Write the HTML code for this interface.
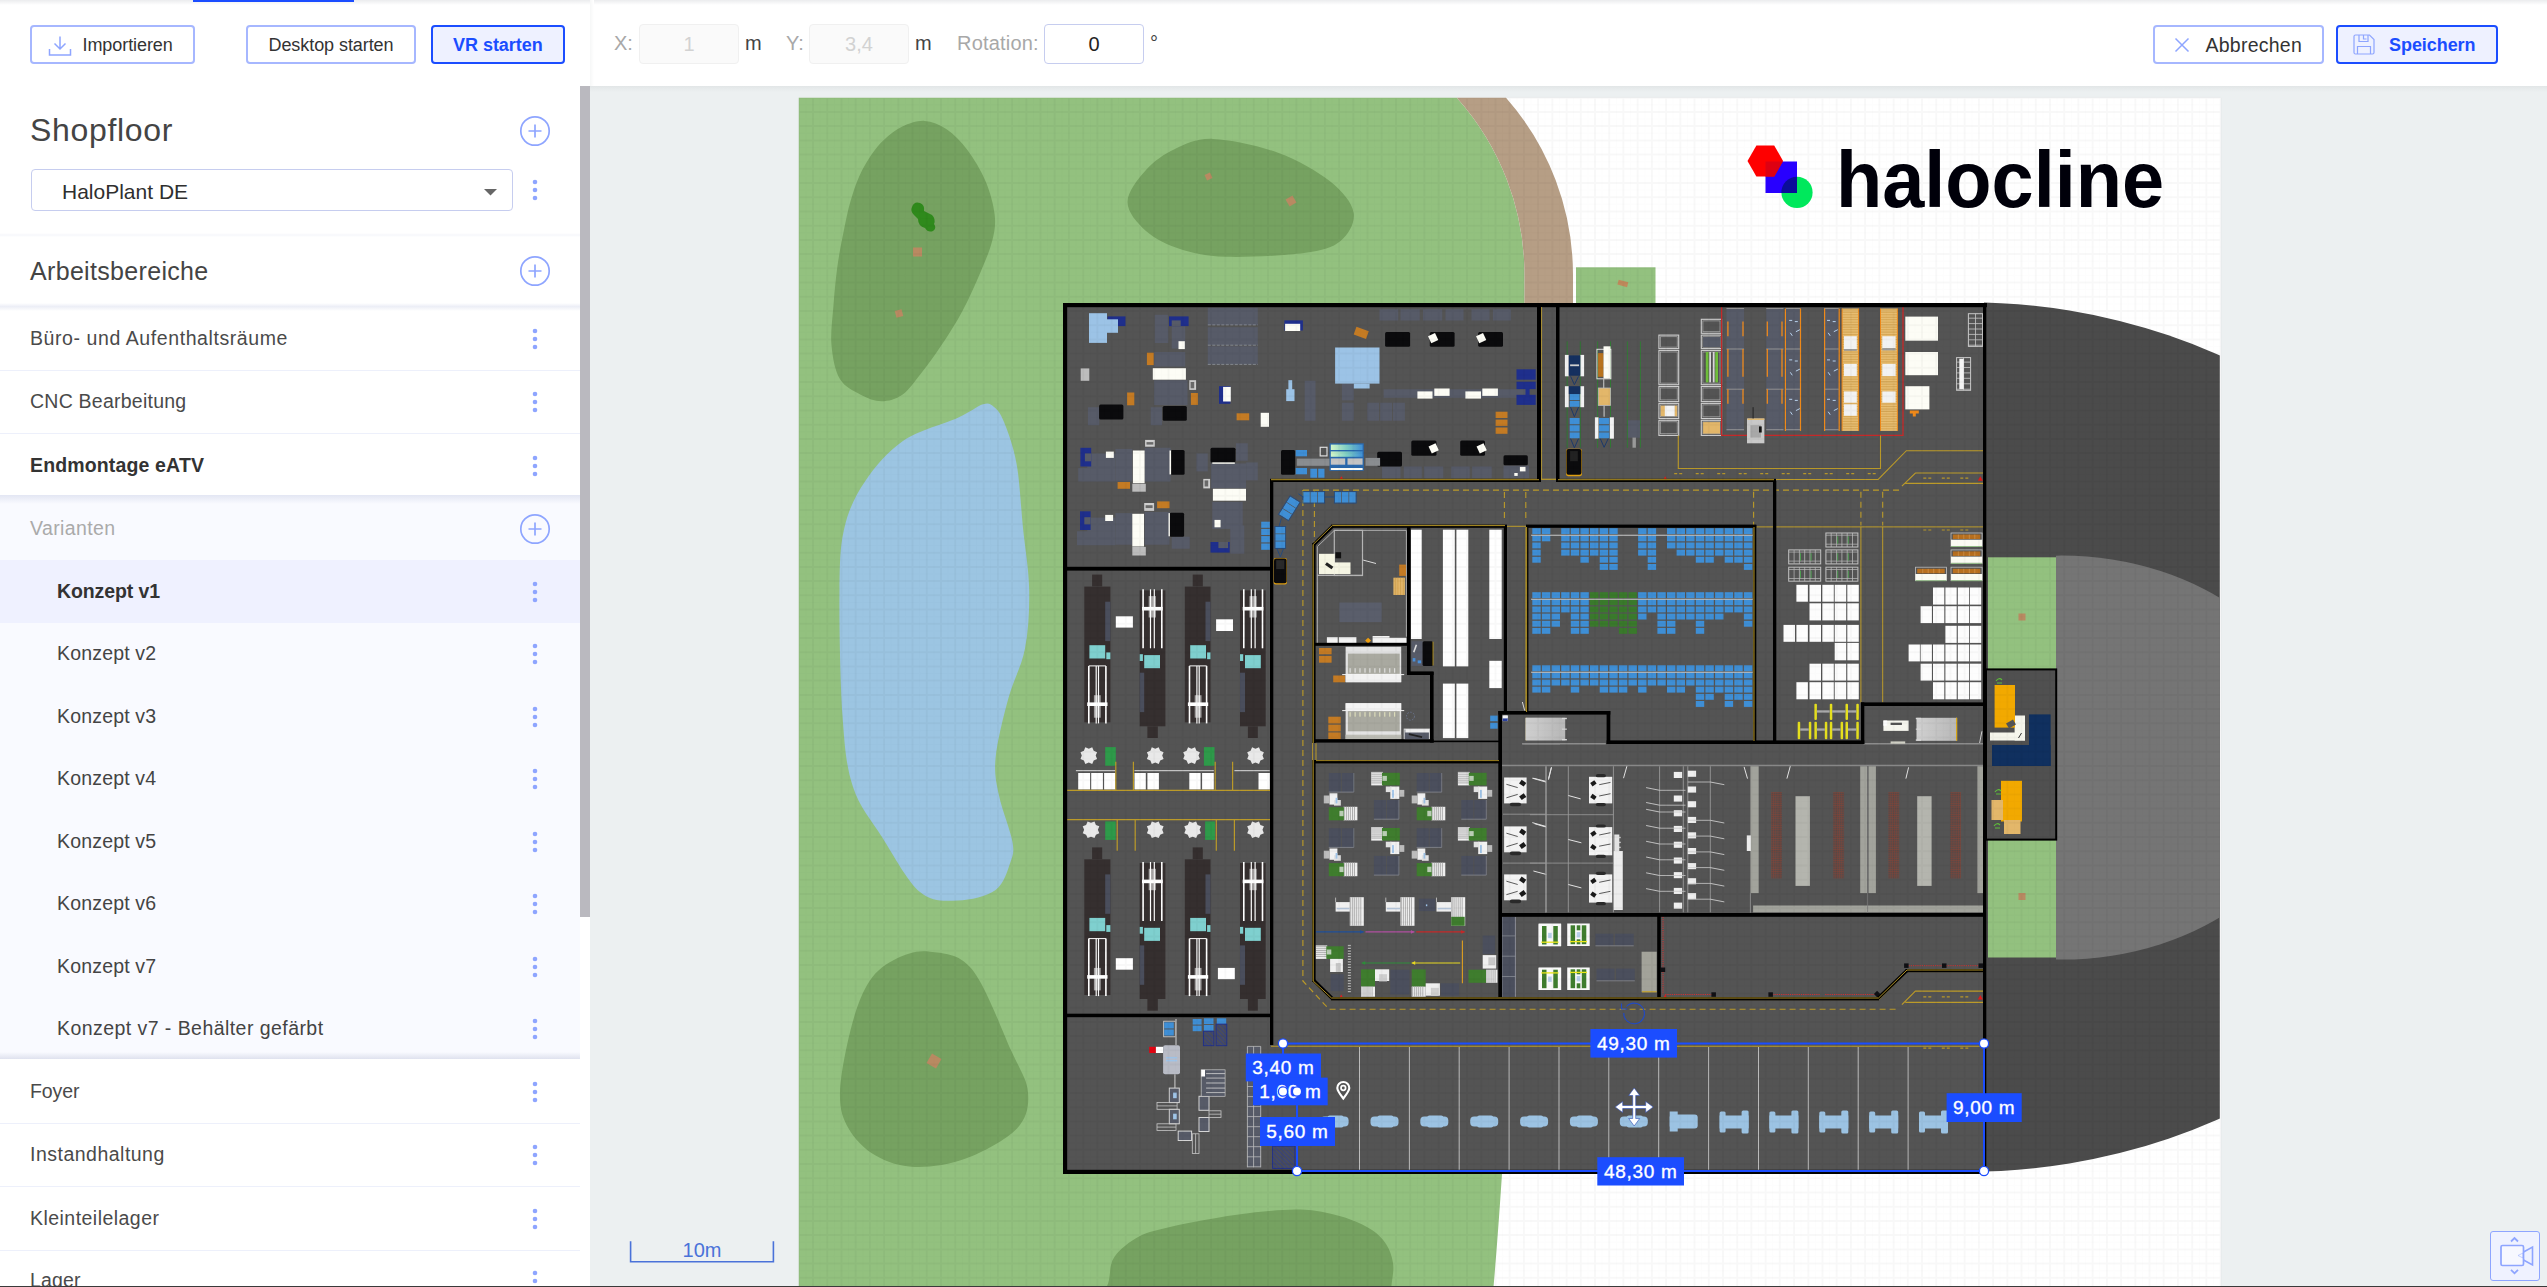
<!DOCTYPE html>
<html lang="de"><head><meta charset="utf-8"><title>Halocline Layout</title>
<style>
html,body{margin:0;padding:0;width:2547px;height:1287px;overflow:hidden;background:#ecf0f1;font-family:"Liberation Sans",sans-serif}
.abs{position:absolute}
.t{white-space:nowrap}
.li{font-size:19.500px;line-height:28px}
.btn{box-sizing:border-box;border-radius:4px}
.inp{box-sizing:border-box;width:100px;height:40px;border-radius:4px;text-align:center;font-size:20px;line-height:38px}
</style></head><body>
<svg class="abs" style="left:590px;top:86px" width="1957" height="1201" viewBox="590 86 1957 1201">
<linearGradient id="tsh" x1="0" y1="0" x2="0" y2="1"><stop offset="0" stop-color="#e2e6e7"/><stop offset="1" stop-color="#ecf0f1"/></linearGradient><rect x="590" y="86" width="1957" height="6" fill="url(#tsh)"/>
<rect x="798.8" y="97.7" width="1422" height="1189.3" fill="#fff"/>
<path d="M798.8 97.7H1456.8A266 266 0 0 1 1524.5 275V1174H1502Q1498 1235 1493.5 1287H798.8Z" fill="#93c17f"/>
<path d="M1456.8 97.7H1506A268 268 0 0 1 1573 275V304H1524.5V275A266 266 0 0 0 1456.8 97.7Z" fill="#b69e85"/>
<rect x="1576" y="267.3" width="79.5" height="36.7" fill="#93c17f"/>
<path d="M924.5 120.9C931.9 121.3 939.5 124.3 946.6 129.2C953.8 134 960.9 141.3 967.4 150C973.9 158.7 981 170.5 985.6 181.3C990.2 192.2 993.6 205.1 994.7 215.1C995.8 225.1 994.5 231.6 992.1 241.2C989.7 250.8 985.4 260.7 980.4 272.4C975.4 284.1 968.7 299.2 962.2 311.4C955.7 323.5 948.3 334.9 941.4 345.3C934.5 355.7 927.1 365.7 920.6 373.9C914.1 382.1 908.8 390.1 902.3 394.7C895.8 399.2 888.4 401.2 881.5 401.2C874.6 401.2 867.6 398.4 860.7 394.7C853.8 391 844.8 387.3 839.9 379.1C835 370.9 832.6 357.5 831.5 345.3C830.4 333.1 832.4 319.2 833.4 306.2C834.4 293.2 835.6 279.8 837.3 267.2C839 254.6 841.6 241.7 843.8 230.8C846 220 847.7 211.2 850.3 202.1C852.9 193 855.9 183.9 859.4 176.1C862.9 168.3 867 161.4 871.1 155.3C875.2 149.2 878.9 144.5 884.1 139.7C889.3 134.9 895.6 129.7 902.3 126.6C909 123.5 917.1 120.5 924.5 120.9Z" fill="#76a261"/>
<path d="M1213 138.9C1230.2 139.5 1258.5 145.6 1278 152.7C1297.5 159.8 1317.4 171.3 1330 181.3C1342.6 191.3 1351.8 202.6 1353.6 212.5C1355.3 222.4 1348.8 234.2 1340.5 241C1332.2 247.8 1323.1 250.4 1304 253C1284.9 255.6 1246.7 257.5 1226 256.8C1205.3 256.1 1193.3 253.3 1180 249C1166.7 244.7 1154.8 238.8 1146 231C1137.2 223.2 1127.5 212.2 1127.5 202C1127.5 191.8 1138.1 178.8 1146 170C1153.9 161.2 1163.8 154.2 1175 149C1186.2 143.8 1195.8 138.3 1213 138.9Z" fill="#76a261"/>
<path d="M929.8 951.7C942.3 953.4 958.3 952.6 971.8 969C985.3 985.4 1001.6 1029.7 1011 1050.3C1020.4 1070.9 1027 1079.4 1028 1092.4C1029 1105.4 1027.4 1117.5 1017 1128.5C1006.6 1139.5 982.8 1152.2 965.8 1158.6C948.8 1165 929.7 1167.5 914.7 1167C899.7 1166.5 886.6 1162 875.6 1155.6C864.6 1149.2 854.5 1139.1 848.6 1128.5C842.7 1117.9 839.5 1109.1 840 1092C840.5 1074.9 846.7 1044.5 851.6 1026C856.5 1007.5 862.1 992.2 869.6 981C877.1 969.8 886.7 963.5 896.7 958.6C906.7 953.7 917.3 950 929.8 951.7Z" fill="#76a261"/>
<path d="M1150 1420C1110.7 1403.3 1110.8 1343.3 1104 1320C1097.2 1296.7 1107.2 1290.6 1109 1280C1110.8 1269.4 1109.7 1263.8 1114.7 1256.5C1119.7 1249.2 1129.8 1241.3 1139 1236.4C1148.2 1231.5 1158.8 1229.8 1170 1227C1181.2 1224.2 1192.7 1222 1206 1219.7C1219.3 1217.4 1235.1 1214.7 1250 1213C1264.9 1211.3 1282.8 1209.7 1295.3 1209.6C1307.8 1209.5 1315.7 1210.8 1325 1212.5C1334.3 1214.2 1343.2 1216.8 1351 1219.7C1358.8 1222.6 1366.2 1226 1372 1230C1377.8 1234 1382.5 1238.5 1386 1244C1389.5 1249.5 1392.1 1256.2 1393 1263C1393.9 1269.8 1393 1273.8 1391.5 1285C1390 1296.2 1392.6 1307.5 1384 1330C1375.4 1352.5 1379 1405 1340 1420C1301 1435 1189.3 1436.7 1150 1420Z" fill="#76a261"/>
<path d="M983 404.3C977 406.1 971.2 411.7 957.9 417.8C944.6 423.9 918.7 430.3 903.3 440.8C887.9 451.3 875.3 466.4 865.5 480.7C855.7 495 848.9 508.7 844.6 526.9C840.3 545.1 839.9 558.3 839.5 589.8C839.1 621.3 840.2 682.8 842.5 715.7C844.8 748.6 846.4 766.7 853 787C859.6 807.3 871.1 819.9 882.3 837.4C893.5 854.9 907.4 881.5 920 892C932.6 902.5 945.3 900.8 957.9 900.4C970.5 900 986.9 896.2 995.6 889.9C1004.3 883.6 1007.5 870.6 1010.3 862.6C1013.1 854.6 1014.3 852.8 1012.4 841.6C1010.5 830.4 1001.8 809.5 999 795.5C996.2 781.5 994.1 773.8 995.6 757.7C997.1 741.6 1003.3 717.1 1008.2 698.9C1013.1 680.7 1021.5 666.8 1025 648.6C1028.5 630.4 1029.5 610.1 1029.2 589.8C1028.9 569.5 1025 547.9 1022.9 526.9C1020.8 505.9 1019.8 481.4 1016.6 463.9C1013.5 446.4 1007.8 431.5 1004 422C1000.2 412.5 997.5 409.9 994 407C990.5 404.1 989 402.5 983 404.3Z" fill="#9cc5e2"/>
<rect x="913" y="247.5" width="9" height="9" fill="#b98a62" transform="rotate(0 917.5 252)"/>
<rect x="895.5" y="310" width="7" height="7" fill="#b98a62" transform="rotate(-15 899 313.5)"/>
<rect x="1287" y="197" width="8" height="8" fill="#b98a62" transform="rotate(-30 1291 201)"/>
<rect x="1205.5" y="173.5" width="6" height="6" fill="#b98a62" transform="rotate(-25 1208.5 176.5)"/>
<rect x="928.5" y="1055.5" width="11" height="11" fill="#b98a62" transform="rotate(30 934 1061)"/>
<path d="M912 207q2-6 8-4 5 2 4 8l8 4q4 4 2 9 3 4-1 7-5 2-8-3-7-2-7-9l-4-4q-4-4-2-8z" fill="#2f8a1c"/>
<clipPath id="cpP"><rect x="1984" y="97.7" width="235.8" height="1200"/></clipPath>
<g clip-path="url(#cpP)"><ellipse cx="1966.300" cy="737" rx="528.300" ry="434.800" fill="#4b4b4b"/>
<clipPath id="cpL"><rect x="2056" y="500" width="200" height="500"/></clipPath><ellipse cx="2061.600" cy="757.600" rx="258.700" ry="202" fill="#757575" clip-path="url(#cpL)"/></g>
<rect x="1988" y="557.3" width="68" height="111.7" fill="#93c17f"/>
<rect x="1988" y="840" width="68" height="117.5" fill="#93c17f"/>
<rect x="2018.5" y="613.5" width="7" height="7" fill="#b98a62"/>
<rect x="2018.5" y="893" width="7" height="7" fill="#b98a62"/>
<rect x="1618" y="281" width="10" height="5" fill="#c08a5c" transform="rotate(15 1623 283)"/>
<rect x="1063" y="303" width="923.3" height="871" fill="#545454"/>
<rect x="1985" y="668.4" width="72.2" height="172.2" fill="#000"/>
<rect x="1987" y="670.4" width="68.2" height="168.2" fill="#505050"/>
<rect x="1154.8" y="314.8" width="13.5" height="28.2" fill="#575b68"/>
<rect x="1171.7" y="326.1" width="13.5" height="22.5" fill="#575b68"/>
<rect x="1154.1" y="352" width="31.1" height="14.6" fill="#575b68"/>
<rect x="1154.1" y="380.2" width="33.4" height="24.8" fill="#575b68"/>
<rect x="1087.9" y="407.2" width="11.3" height="18" fill="#575b68"/>
<rect x="1150.7" y="407.2" width="11.3" height="18" fill="#575b68"/>
<rect x="1207.8" y="307.6" width="50" height="17.4" fill="#575b68"/>
<rect x="1207.8" y="327.2" width="50" height="18" fill="#575b68"/>
<rect x="1207.8" y="346.3" width="50" height="18" fill="#575b68"/>
<rect x="1304.7" y="380.8" width="10.8" height="39.9" fill="#575b68"/>
<rect x="1341.9" y="383.5" width="11.9" height="16.9" fill="#575b68"/>
<rect x="1383.6" y="389.2" width="144.2" height="8.6" fill="#575b68"/>
<rect x="1341.9" y="402.7" width="11.9" height="18" fill="#575b68"/>
<rect x="1367.3" y="402.7" width="11.7" height="18" fill="#575b68"/>
<rect x="1380.2" y="402.7" width="11.9" height="18" fill="#575b68"/>
<rect x="1393" y="402.7" width="11.9" height="18" fill="#575b68"/>
<rect x="1087.2" y="453.4" width="28.2" height="27" fill="#575b68"/>
<rect x="1078.2" y="468" width="37.2" height="13.5" fill="#575b68"/>
<rect x="1115.4" y="448.9" width="16.9" height="32.7" fill="#575b68"/>
<rect x="1144.7" y="447.8" width="25.9" height="33.8" fill="#575b68"/>
<rect x="1235.9" y="443.3" width="11.9" height="17.4" fill="#575b68"/>
<rect x="1196.5" y="453.4" width="11.3" height="18" fill="#575b68"/>
<rect x="1211.1" y="463.5" width="34.9" height="24.8" fill="#575b68"/>
<rect x="1246.1" y="462.4" width="11.7" height="18" fill="#575b68"/>
<rect x="1212.3" y="501.9" width="30.4" height="27" fill="#575b68"/>
<rect x="1230.3" y="525.5" width="14" height="28.2" fill="#575b68"/>
<rect x="1087.2" y="517.6" width="28.2" height="27" fill="#575b68"/>
<rect x="1077" y="531.2" width="38.3" height="14" fill="#575b68"/>
<rect x="1115.4" y="513.1" width="16.9" height="31.6" fill="#575b68"/>
<rect x="1144.7" y="512" width="24.8" height="32.7" fill="#575b68"/>
<rect x="1171.7" y="536.8" width="18" height="11.9" fill="#575b68"/>
<rect x="1503.5" y="465.8" width="25.5" height="12.4" fill="#575b68"/>
<rect x="1379.5" y="309.2" width="18.7" height="11.3" fill="#575b68"/>
<rect x="1400.5" y="309.2" width="19.2" height="11.3" fill="#575b68"/>
<rect x="1423" y="309.2" width="19.2" height="11.3" fill="#575b68"/>
<rect x="1445.5" y="309.2" width="18" height="11.3" fill="#575b68"/>
<rect x="1471.5" y="309.2" width="18" height="11.3" fill="#575b68"/>
<rect x="1492.9" y="309.2" width="18" height="11.3" fill="#575b68"/>
<rect x="1382" y="466.5" width="18.5" height="11.7" fill="#575b68"/>
<rect x="1403.8" y="466.5" width="18" height="11.7" fill="#575b68"/>
<rect x="1424.1" y="466.5" width="19.2" height="11.7" fill="#575b68"/>
<rect x="1451.2" y="466.5" width="18.5" height="11.7" fill="#575b68"/>
<rect x="1472.1" y="466.5" width="19.6" height="11.7" fill="#575b68"/>
<path d="M1207.8 324.9L1257.8 324.9" stroke="#9a9da6" stroke-width="0.7" fill="none" stroke-dasharray="3 1.5"/>
<path d="M1207.8 345.2L1257.8 345.2" stroke="#9a9da6" stroke-width="0.7" fill="none" stroke-dasharray="3 1.5"/>
<path d="M1207.8 364.4L1257.8 364.4" stroke="#9a9da6" stroke-width="0.7" fill="none" stroke-dasharray="3 1.5"/>
<rect x="1107.5" y="316.4" width="18" height="9.7" fill="#1f2f8c"/>
<rect x="1169" y="316.4" width="19.6" height="9.7" fill="#1f2f8c"/>
<rect x="1284.4" y="320.4" width="18.5" height="10.1" fill="#1f2f8c"/>
<rect x="1219" y="386.2" width="11.3" height="17.6" fill="#1f2f8c"/>
<rect x="1516.5" y="369.3" width="19.2" height="10.4" fill="#1f2f8c"/>
<rect x="1516.5" y="381.7" width="19.2" height="7.4" fill="#1f2f8c"/>
<rect x="1516.5" y="394.8" width="19.2" height="10.1" fill="#1f2f8c"/>
<rect x="1525.5" y="385.8" width="4.1" height="14.6" fill="#1f2f8c"/>
<rect x="1080.4" y="447.8" width="10.8" height="18.7" fill="#1f2f8c"/>
<rect x="1210.5" y="542" width="19.2" height="10.6" fill="#1f2f8c"/>
<rect x="1080" y="511.3" width="10.6" height="18.7" fill="#1f2f8c"/>
<rect x="1171.7" y="320.4" width="9" height="5.6" fill="#575b68"/>
<rect x="1084.9" y="453.4" width="6.3" height="7.9" fill="#575b68"/>
<rect x="1218.4" y="542" width="9.7" height="6.1" fill="#575b68"/>
<rect x="1084.3" y="517.2" width="6.3" height="7.2" fill="#575b68"/>
<rect x="1089" y="313.2" width="18" height="29.7" fill="#9cc3e6"/>
<rect x="1107" y="319.3" width="11" height="13.5" fill="#9cc3e6"/>
<rect x="1335.1" y="347.5" width="44.4" height="36.1" fill="#9cc3e6"/>
<rect x="1353.8" y="383.5" width="15.8" height="5" fill="#9cc3e6"/>
<rect x="1288.4" y="380.2" width="3.8" height="10.1" fill="#9cc3e6"/>
<rect x="1286.2" y="389.2" width="8.3" height="11.9" fill="#9cc3e6"/>
<rect x="1178.5" y="341.2" width="6.3" height="7.9" fill="#fdfdf6"/>
<rect x="1152.8" y="368.2" width="33.1" height="11.5" fill="#fdfdf6"/>
<rect x="1285.1" y="323.8" width="15.1" height="7.2" fill="#fdfdf6"/>
<rect x="1223.1" y="386.9" width="7.7" height="14.6" fill="#fdfdf6"/>
<rect x="1260.7" y="412.8" width="8.3" height="14" fill="#fdfdf6"/>
<rect x="1417.4" y="391.4" width="15.1" height="7.2" fill="#fdfdf6"/>
<rect x="1434.3" y="388.5" width="15.3" height="7.4" fill="#fdfdf6"/>
<rect x="1465.4" y="391.4" width="15.6" height="7.2" fill="#fdfdf6"/>
<rect x="1482.3" y="388.5" width="15.6" height="7.4" fill="#fdfdf6"/>
<rect x="1105.9" y="451.6" width="7.9" height="6.3" fill="#fdfdf6"/>
<rect x="1132.9" y="450.5" width="11.7" height="32.7" fill="#fdfdf6"/>
<rect x="1212.9" y="488.8" width="33.1" height="11.9" fill="#fdfdf6"/>
<rect x="1214.5" y="519.9" width="6.1" height="7.4" fill="#fdfdf6"/>
<rect x="1105.2" y="514.9" width="7.9" height="6.1" fill="#fdfdf6"/>
<rect x="1132.3" y="513.8" width="11.7" height="32.7" fill="#fdfdf6"/>
<rect x="1080.7" y="368.4" width="8.6" height="12.4" fill="#bdbdbd"/>
<rect x="1132.3" y="483.8" width="13.5" height="7.9" fill="#bdbdbd"/>
<rect x="1132.3" y="546.9" width="13.5" height="8.6" fill="#bdbdbd"/>
<rect x="1189.3" y="380.2" width="6.8" height="9.7" fill="#cfcfcf"/>
<rect x="1145.1" y="439.9" width="9.7" height="6.8" fill="#cfcfcf"/>
<rect x="1203.3" y="478.9" width="6.8" height="9.5" fill="#cfcfcf"/>
<rect x="1144.2" y="503" width="9.9" height="7.9" fill="#cfcfcf"/>
<rect x="1190.6" y="382" width="3.6" height="6.3" fill="#6a6a6a"/>
<rect x="1146.5" y="442.1" width="6.8" height="2.5" fill="#6a6a6a"/>
<rect x="1204.6" y="480.4" width="3.6" height="6.1" fill="#6a6a6a"/>
<rect x="1145.6" y="505.2" width="7" height="2.9" fill="#6a6a6a"/>
<rect x="1146.9" y="352.7" width="6.8" height="12.4" fill="#c47b24"/>
<rect x="1127.1" y="392.5" width="7.2" height="12.8" fill="#c47b24"/>
<rect x="1190.9" y="393" width="7" height="11.9" fill="#c47b24"/>
<rect x="1236.6" y="413.3" width="12.6" height="7" fill="#c47b24"/>
<rect x="1495.6" y="411.7" width="11.9" height="6.3" fill="#c47b24"/>
<rect x="1495.6" y="419.6" width="11.9" height="6.3" fill="#c47b24"/>
<rect x="1495.6" y="427.5" width="11.9" height="6.3" fill="#c47b24"/>
<rect x="1117.6" y="482" width="12.4" height="6.8" fill="#c47b24"/>
<rect x="1157.1" y="501.4" width="12.4" height="6.8" fill="#c47b24"/>
<rect x="1354.7" y="328.8" width="13.1" height="8.1" fill="#c47b24" transform="rotate(20 1361.2 332.8)"/>
<rect x="1099.1" y="404.5" width="24.3" height="15.1" fill="#0b0b0d" rx="1.5"/>
<rect x="1162.7" y="406.1" width="24.1" height="14.6" fill="#0b0b0d" rx="1.5"/>
<rect x="1385.1" y="332.1" width="25" height="14.6" fill="#0b0b0d" rx="1.5"/>
<rect x="1429.8" y="332.1" width="24.8" height="14.6" fill="#0b0b0d" rx="1.5"/>
<rect x="1478.2" y="332.1" width="24.8" height="14.6" fill="#0b0b0d" rx="1.5"/>
<rect x="1411.3" y="440.6" width="25.2" height="15.1" fill="#0b0b0d" rx="1.5"/>
<rect x="1460.2" y="440.6" width="24.8" height="15.1" fill="#0b0b0d" rx="1.5"/>
<rect x="1377.2" y="451.8" width="24.8" height="14.6" fill="#0b0b0d" rx="1.5"/>
<rect x="1503.5" y="455.2" width="24.3" height="10.1" fill="#0b0b0d" rx="1.5"/>
<rect x="1281" y="450" width="14.2" height="24.8" fill="#0b0b0d" rx="1.5"/>
<rect x="1170.6" y="450" width="14" height="24.8" fill="#0b0b0d" rx="1.5"/>
<rect x="1210.5" y="447.8" width="25" height="14.6" fill="#0b0b0d" rx="1.5"/>
<rect x="1169.5" y="512.7" width="14.6" height="24.1" fill="#0b0b0d" rx="1.5"/>
<rect x="1169.5" y="450.5" width="1.6" height="23.9" fill="#fdfdf6"/>
<rect x="1168.5" y="513.1" width="1.4" height="23.2" fill="#fdfdf6"/>
<rect x="1212.3" y="462.4" width="22.5" height="1.4" fill="#fdfdf6"/>
<rect x="1429.3" y="334.2" width="7.7" height="7.7" fill="#fdfdf6" transform="rotate(-25 1433.1 338)"/>
<rect x="1477.3" y="334.2" width="7.7" height="7.7" fill="#fdfdf6" transform="rotate(-25 1481.1 338)"/>
<rect x="1429.8" y="444.6" width="7.7" height="7.7" fill="#fdfdf6" transform="rotate(-25 1433.6 448.4)"/>
<rect x="1477.8" y="444.6" width="7.7" height="7.7" fill="#fdfdf6" transform="rotate(-25 1481.6 448.4)"/>
<rect x="1329.5" y="443.3" width="34.3" height="27.5" fill="#2a69ad"/>
<linearGradient id="tg" x1="0" x2="1" y1="0" y2="0"><stop offset="0" stop-color="#d4f7c8"/><stop offset=".5" stop-color="#7fcfc4"/><stop offset="1" stop-color="#3f8fd6"/></linearGradient>
<rect x="1330.8" y="444.6" width="31.8" height="5.4" fill="url(#tg)"/>
<rect x="1330.8" y="451.4" width="31.8" height="5.4" fill="url(#tg)"/>
<rect x="1330.8" y="458.4" width="14.4" height="6.3" fill="#c4c4c4"/>
<rect x="1347.5" y="458.4" width="15.1" height="6.3" fill="#c4c4c4"/>
<rect x="1330.8" y="468" width="31.8" height="2" fill="#fdfdf6"/>
<rect x="1296.8" y="458.6" width="32.7" height="7.2" fill="#8a8d90"/>
<rect x="1365.5" y="457.9" width="14.6" height="7.9" fill="#8a8d90"/>
<rect x="1320.2" y="447.3" width="6.8" height="8.6" fill="none" stroke="#ddd" stroke-width="1.2"/>
<rect x="1295.7" y="450" width="11.3" height="6.3" fill="#3f8fd6"/>
<rect x="1295.7" y="468" width="11.3" height="6.3" fill="#3f8fd6"/>
<rect x="1310.3" y="468.7" width="6.8" height="9" fill="#3f8fd6"/>
<rect x="1318.2" y="468.7" width="6.3" height="9" fill="#3f8fd6"/>
<rect x="1261.2" y="521.7" width="8.6" height="6.1" fill="#3f8fd6"/>
<rect x="1261.2" y="528.9" width="8.6" height="6.1" fill="#3f8fd6"/>
<rect x="1261.2" y="536.1" width="8.6" height="6.3" fill="#3f8fd6"/>
<rect x="1261.2" y="543.5" width="8.6" height="6.3" fill="#3f8fd6"/>
<rect x="1519.9" y="466.9" width="5.6" height="4.5" fill="#fdfdf6"/>
<rect x="1514.3" y="473" width="3.4" height="2.9" fill="#fdfdf6"/>
<path d="M1341.4 476.2l-2.5 4h5z" fill="#e31b1b"/>
<path d="M1567.2 341.4L1567.2 447.8" stroke="#2f7d32" stroke-width="0.9" fill="none"/>
<path d="M1580.3 341.4L1580.3 447.8" stroke="#2f7d32" stroke-width="0.9" fill="none"/>
<path d="M1597.6 341.4L1597.6 447.8" stroke="#2f7d32" stroke-width="0.9" fill="none"/>
<path d="M1610.5 341.4L1610.5 447.8" stroke="#2f7d32" stroke-width="0.9" fill="none"/>
<path d="M1627.4 341.4L1627.4 447.8" stroke="#2f7d32" stroke-width="0.9" fill="none"/>
<path d="M1640.4 341.4L1640.4 447.8" stroke="#2f7d32" stroke-width="0.9" fill="none"/>
<rect x="1564.9" y="354.9" width="3.8" height="21.4" fill="#f3f3f3"/>
<rect x="1580.3" y="354.9" width="3.8" height="21.4" fill="#f3f3f3"/>
<rect x="1564.9" y="386.2" width="3.8" height="21" fill="#f3f3f3"/>
<rect x="1580.3" y="386.2" width="3.8" height="21" fill="#f3f3f3"/>
<rect x="1568.8" y="355.4" width="11.5" height="20.3" fill="#15305f"/>
<rect x="1568.8" y="386.2" width="11.5" height="7.9" fill="#15305f"/>
<rect x="1570.1" y="364.4" width="9" height="1.8" fill="#cfcfcf"/>
<rect x="1569.7" y="394.1" width="9.9" height="5.9" fill="#3f8fd6"/>
<rect x="1569.7" y="400.9" width="9.9" height="5.9" fill="#3f8fd6"/>
<rect x="1569.7" y="418" width="9.9" height="6.3" fill="#3f8fd6"/>
<rect x="1569.7" y="425.2" width="9.9" height="6.3" fill="#3f8fd6"/>
<rect x="1569.7" y="432.4" width="9.9" height="5.9" fill="#3f8fd6"/>
<path d="M1570.6 376.3L1574.4 384.7L1578.5 376.3M1570.6 407.2L1574.4 416.7L1578.5 407.2M1570.6 438.7L1574.4 447.8L1578.5 438.7" fill="none" stroke="#1d3a6b" stroke-width="1"/>
<rect x="1566.1" y="448.7" width="15.8" height="27.5" fill="#e0a010" rx="2"/>
<rect x="1566.5" y="449.1" width="14.9" height="25.7" fill="#0b0b0d" rx="2"/>
<rect x="1570.1" y="451.1" width="7.7" height="10.1" fill="#222"/>
<rect x="1596.9" y="349.3" width="14" height="29.5" fill="none" stroke="#ddd" stroke-width="1"/>
<rect x="1598.1" y="353.1" width="5.4" height="23.7" fill="#b8741f"/>
<rect x="1603.5" y="346.3" width="7" height="32.2" fill="#fdfdf6"/>
<rect x="1598.3" y="388" width="12.2" height="17.4" fill="#e3b76a"/>
<rect x="1598.3" y="388" width="12.2" height="17.4" fill="none" stroke="#bbb" stroke-width="0.8"/>
<rect x="1594.9" y="417.3" width="3.6" height="21.4" fill="#f3f3f3"/>
<rect x="1609.8" y="417.3" width="4.1" height="21.4" fill="#f3f3f3"/>
<rect x="1599" y="418" width="10.4" height="6.3" fill="#3f8fd6"/>
<rect x="1599" y="425.2" width="10.4" height="6.3" fill="#3f8fd6"/>
<rect x="1599" y="432.4" width="10.4" height="5.9" fill="#3f8fd6"/>
<path d="M1600.3 438.7L1604.1 447.3L1608.2 438.7" fill="none" stroke="#1d3a6b" stroke-width="1"/>
<path d="M1603.7 378.8L1603.7 388" stroke="#bbb" stroke-width="1.2" fill="none"/>
<path d="M1604.1 405.4L1604.1 416.7" stroke="#bbb" stroke-width="1.2" fill="none"/>
<rect x="1628" y="420.3" width="11.9" height="17.4" fill="#575b68"/>
<rect x="1632.5" y="437.6" width="3.4" height="10.1" fill="#9a9a9a"/>
<rect x="1658.9" y="335.1" width="19.8" height="13.5" fill="none" stroke="#cfcfcf" stroke-width="1.1"/>
<rect x="1660.5" y="336.7" width="16.7" height="10.4" fill="none" stroke="#aaa" stroke-width="0.7"/>
<rect x="1658.9" y="350.4" width="19.8" height="34.3" fill="none" stroke="#cfcfcf" stroke-width="1.1"/>
<rect x="1660.5" y="352" width="16.7" height="31.1" fill="none" stroke="#aaa" stroke-width="0.7"/>
<rect x="1658.9" y="386.5" width="19.8" height="15.1" fill="none" stroke="#cfcfcf" stroke-width="1.1"/>
<rect x="1660.5" y="388" width="16.7" height="11.9" fill="none" stroke="#aaa" stroke-width="0.7"/>
<rect x="1658.9" y="403.4" width="19.8" height="15.1" fill="none" stroke="#cfcfcf" stroke-width="1.1"/>
<rect x="1660.5" y="404.9" width="16.7" height="11.9" fill="none" stroke="#aaa" stroke-width="0.7"/>
<rect x="1658.9" y="420.3" width="19.8" height="15.1" fill="none" stroke="#cfcfcf" stroke-width="1.1"/>
<rect x="1660.5" y="421.8" width="16.7" height="11.9" fill="none" stroke="#aaa" stroke-width="0.7"/>
<rect x="1701.3" y="319.3" width="20.3" height="14" fill="none" stroke="#cfcfcf" stroke-width="1.1"/>
<rect x="1702.9" y="320.9" width="17.1" height="10.8" fill="none" stroke="#aaa" stroke-width="0.7"/>
<rect x="1701.3" y="335.1" width="20.3" height="13.5" fill="none" stroke="#cfcfcf" stroke-width="1.1"/>
<rect x="1702.9" y="336.7" width="17.1" height="10.4" fill="none" stroke="#aaa" stroke-width="0.7"/>
<rect x="1701.3" y="350.4" width="20.3" height="34.3" fill="none" stroke="#cfcfcf" stroke-width="1.1"/>
<rect x="1702.9" y="352" width="17.1" height="31.1" fill="none" stroke="#aaa" stroke-width="0.7"/>
<rect x="1701.3" y="386.5" width="20.3" height="15.1" fill="none" stroke="#cfcfcf" stroke-width="1.1"/>
<rect x="1702.9" y="388" width="17.1" height="11.9" fill="none" stroke="#aaa" stroke-width="0.7"/>
<rect x="1701.3" y="403.4" width="20.3" height="15.1" fill="none" stroke="#cfcfcf" stroke-width="1.1"/>
<rect x="1702.9" y="404.9" width="17.1" height="11.9" fill="none" stroke="#aaa" stroke-width="0.7"/>
<rect x="1701.3" y="420.3" width="20.3" height="15.1" fill="none" stroke="#cfcfcf" stroke-width="1.1"/>
<rect x="1702.9" y="421.8" width="17.1" height="11.9" fill="none" stroke="#aaa" stroke-width="0.7"/>
<rect x="1703.1" y="336.9" width="16.9" height="10.1" fill="#575b68"/>
<rect x="1660.7" y="405.6" width="4.5" height="10.6" fill="#e3b76a"/>
<rect x="1674.2" y="405.6" width="2.9" height="10.6" fill="#e3b76a"/>
<rect x="1664.8" y="405.6" width="9.9" height="10.6" fill="#f4f4f4"/>
<rect x="1703.1" y="422.1" width="16.9" height="11.5" fill="#e3b76a"/>
<rect x="1705.8" y="352" width="2.7" height="30.4" fill="#6fbf3b"/>
<rect x="1715.3" y="352" width="2.7" height="30.4" fill="#6fbf3b"/>
<rect x="1709.2" y="352" width="1.8" height="30.4" fill="#d8d8d8"/>
<rect x="1712.8" y="352" width="1.8" height="30.4" fill="#d8d8d8"/>
<rect x="1726.5" y="308.5" width="17.6" height="122.4" fill="#575b68"/>
<path d="M1726.5 308.5L1744.1 308.5" stroke="#9a9a9a" stroke-width="0.9" fill="none"/>
<path d="M1726.5 349L1744.1 349" stroke="#9a9a9a" stroke-width="0.9" fill="none"/>
<path d="M1726.5 389.2L1744.1 389.2" stroke="#9a9a9a" stroke-width="0.9" fill="none"/>
<path d="M1726.5 429.7L1744.1 429.7" stroke="#9a9a9a" stroke-width="0.9" fill="none"/>
<rect x="1766.2" y="308.5" width="17.4" height="122.4" fill="#575b68"/>
<path d="M1766.2 308.5L1783.5 308.5" stroke="#9a9a9a" stroke-width="0.9" fill="none"/>
<path d="M1766.2 349L1783.5 349" stroke="#9a9a9a" stroke-width="0.9" fill="none"/>
<path d="M1766.2 389.2L1783.5 389.2" stroke="#9a9a9a" stroke-width="0.9" fill="none"/>
<path d="M1766.2 429.7L1783.5 429.7" stroke="#9a9a9a" stroke-width="0.9" fill="none"/>
<rect x="1785.8" y="308.5" width="14.6" height="122.4" fill="#575b68"/>
<path d="M1785.8 308.5L1800.5 308.5" stroke="#9a9a9a" stroke-width="0.9" fill="none"/>
<path d="M1785.8 349L1800.5 349" stroke="#9a9a9a" stroke-width="0.9" fill="none"/>
<path d="M1785.8 389.2L1800.5 389.2" stroke="#9a9a9a" stroke-width="0.9" fill="none"/>
<path d="M1785.8 429.7L1800.5 429.7" stroke="#9a9a9a" stroke-width="0.9" fill="none"/>
<rect x="1824.1" y="308.5" width="14.6" height="122.4" fill="#575b68"/>
<path d="M1824.1 308.5L1838.8 308.5" stroke="#9a9a9a" stroke-width="0.9" fill="none"/>
<path d="M1824.1 349L1838.8 349" stroke="#9a9a9a" stroke-width="0.9" fill="none"/>
<path d="M1824.1 389.2L1838.8 389.2" stroke="#9a9a9a" stroke-width="0.9" fill="none"/>
<path d="M1824.1 429.7L1838.8 429.7" stroke="#9a9a9a" stroke-width="0.9" fill="none"/>
<path d="M1727.9 321.6L1727.9 336.2" stroke="#f08a1a" stroke-width="1.3" fill="none"/>
<path d="M1727.9 349L1727.9 376.8" stroke="#f08a1a" stroke-width="1.3" fill="none"/>
<path d="M1727.9 389.2L1727.9 403.8" stroke="#f08a1a" stroke-width="1.3" fill="none"/>
<path d="M1743 321.6L1743 336.2" stroke="#f08a1a" stroke-width="1.3" fill="none"/>
<path d="M1743 349L1743 376.8" stroke="#f08a1a" stroke-width="1.3" fill="none"/>
<path d="M1743 389.2L1743 403.8" stroke="#f08a1a" stroke-width="1.3" fill="none"/>
<path d="M1767.3 321.6L1767.3 336.2" stroke="#f08a1a" stroke-width="1.3" fill="none"/>
<path d="M1767.3 349L1767.3 376.8" stroke="#f08a1a" stroke-width="1.3" fill="none"/>
<path d="M1767.3 389.2L1767.3 403.8" stroke="#f08a1a" stroke-width="1.3" fill="none"/>
<path d="M1782 321.6L1782 336.2" stroke="#f08a1a" stroke-width="1.3" fill="none"/>
<path d="M1782 349L1782 376.8" stroke="#f08a1a" stroke-width="1.3" fill="none"/>
<path d="M1782 389.2L1782 403.8" stroke="#f08a1a" stroke-width="1.3" fill="none"/>
<path d="M1785.4 308.5L1785.4 430.9" stroke="#f08a1a" stroke-width="1.2" fill="none"/>
<path d="M1800.5 308.5L1800.5 430.9" stroke="#f08a1a" stroke-width="1.2" fill="none"/>
<path d="M1824.6 308.5L1824.6 430.9" stroke="#f08a1a" stroke-width="1.2" fill="none"/>
<path d="M1839.2 308.5L1839.2 430.9" stroke="#f08a1a" stroke-width="1.2" fill="none"/>
<path d="M1789.2 320.4h3M1794.8 321.6h3M1790.3 332.8l2 3M1795.9 331.7l4-2" fill="none" stroke="#b9d3ee" stroke-width="1"/>
<path d="M1789.2 359.9h3M1794.8 361h3M1790.3 372.3l2 3M1795.9 371.1l4-2" fill="none" stroke="#b9d3ee" stroke-width="1"/>
<path d="M1789.2 399.3h3M1794.8 400.4h3M1790.3 411.7l2 3M1795.9 410.6l4-2" fill="none" stroke="#b9d3ee" stroke-width="1"/>
<path d="M1827 320.4h3M1832.7 321.6h3M1828.2 332.8l2 3M1833.8 331.7l4-2" fill="none" stroke="#b9d3ee" stroke-width="1"/>
<path d="M1827 359.9h3M1832.7 361h3M1828.2 372.3l2 3M1833.8 371.1l4-2" fill="none" stroke="#b9d3ee" stroke-width="1"/>
<path d="M1827 399.3h3M1832.7 400.4h3M1828.2 411.7l2 3M1833.8 410.6l4-2" fill="none" stroke="#b9d3ee" stroke-width="1"/>
<rect x="1842.1" y="308.5" width="16.5" height="122.4" fill="#e7bd72"/>
<path d="M1842.1 309.8L1858.6 309.8" stroke="#c9973f" stroke-width="0.6" fill="none"/>
<path d="M1842.1 312.3L1858.6 312.3" stroke="#c9973f" stroke-width="0.6" fill="none"/>
<path d="M1842.1 314.8L1858.6 314.8" stroke="#c9973f" stroke-width="0.6" fill="none"/>
<path d="M1842.1 317.3L1858.6 317.3" stroke="#c9973f" stroke-width="0.6" fill="none"/>
<path d="M1842.1 319.7L1858.6 319.7" stroke="#c9973f" stroke-width="0.6" fill="none"/>
<path d="M1842.1 322.2L1858.6 322.2" stroke="#c9973f" stroke-width="0.6" fill="none"/>
<path d="M1842.1 324.7L1858.6 324.7" stroke="#c9973f" stroke-width="0.6" fill="none"/>
<path d="M1842.1 327.2L1858.6 327.2" stroke="#c9973f" stroke-width="0.6" fill="none"/>
<path d="M1842.1 329.7L1858.6 329.7" stroke="#c9973f" stroke-width="0.6" fill="none"/>
<path d="M1842.1 332.1L1858.6 332.1" stroke="#c9973f" stroke-width="0.6" fill="none"/>
<path d="M1842.1 334.6L1858.6 334.6" stroke="#c9973f" stroke-width="0.6" fill="none"/>
<path d="M1842.1 337.1L1858.6 337.1" stroke="#c9973f" stroke-width="0.6" fill="none"/>
<path d="M1842.1 339.6L1858.6 339.6" stroke="#c9973f" stroke-width="0.6" fill="none"/>
<path d="M1842.1 342.1L1858.6 342.1" stroke="#c9973f" stroke-width="0.6" fill="none"/>
<path d="M1842.1 344.5L1858.6 344.5" stroke="#c9973f" stroke-width="0.6" fill="none"/>
<path d="M1842.1 347L1858.6 347" stroke="#c9973f" stroke-width="0.6" fill="none"/>
<path d="M1842.1 349.5L1858.6 349.5" stroke="#c9973f" stroke-width="0.6" fill="none"/>
<path d="M1842.1 352L1858.6 352" stroke="#c9973f" stroke-width="0.6" fill="none"/>
<path d="M1842.1 354.5L1858.6 354.5" stroke="#c9973f" stroke-width="0.6" fill="none"/>
<path d="M1842.1 356.9L1858.6 356.9" stroke="#c9973f" stroke-width="0.6" fill="none"/>
<path d="M1842.1 359.4L1858.6 359.4" stroke="#c9973f" stroke-width="0.6" fill="none"/>
<path d="M1842.1 361.9L1858.6 361.9" stroke="#c9973f" stroke-width="0.6" fill="none"/>
<path d="M1842.1 364.4L1858.6 364.4" stroke="#c9973f" stroke-width="0.6" fill="none"/>
<path d="M1842.1 366.9L1858.6 366.9" stroke="#c9973f" stroke-width="0.6" fill="none"/>
<path d="M1842.1 369.3L1858.6 369.3" stroke="#c9973f" stroke-width="0.6" fill="none"/>
<path d="M1842.1 371.8L1858.6 371.8" stroke="#c9973f" stroke-width="0.6" fill="none"/>
<path d="M1842.1 374.3L1858.6 374.3" stroke="#c9973f" stroke-width="0.6" fill="none"/>
<path d="M1842.1 376.8L1858.6 376.8" stroke="#c9973f" stroke-width="0.6" fill="none"/>
<path d="M1842.1 379.2L1858.6 379.2" stroke="#c9973f" stroke-width="0.6" fill="none"/>
<path d="M1842.1 381.7L1858.6 381.7" stroke="#c9973f" stroke-width="0.6" fill="none"/>
<path d="M1842.1 384.2L1858.6 384.2" stroke="#c9973f" stroke-width="0.6" fill="none"/>
<path d="M1842.1 386.7L1858.6 386.7" stroke="#c9973f" stroke-width="0.6" fill="none"/>
<path d="M1842.1 389.2L1858.6 389.2" stroke="#c9973f" stroke-width="0.6" fill="none"/>
<path d="M1842.1 391.6L1858.6 391.6" stroke="#c9973f" stroke-width="0.6" fill="none"/>
<path d="M1842.1 394.1L1858.6 394.1" stroke="#c9973f" stroke-width="0.6" fill="none"/>
<path d="M1842.1 396.6L1858.6 396.6" stroke="#c9973f" stroke-width="0.6" fill="none"/>
<path d="M1842.1 399.1L1858.6 399.1" stroke="#c9973f" stroke-width="0.6" fill="none"/>
<path d="M1842.1 401.6L1858.6 401.6" stroke="#c9973f" stroke-width="0.6" fill="none"/>
<path d="M1842.1 404L1858.6 404" stroke="#c9973f" stroke-width="0.6" fill="none"/>
<path d="M1842.1 406.5L1858.6 406.5" stroke="#c9973f" stroke-width="0.6" fill="none"/>
<path d="M1842.1 409L1858.6 409" stroke="#c9973f" stroke-width="0.6" fill="none"/>
<path d="M1842.1 411.5L1858.6 411.5" stroke="#c9973f" stroke-width="0.6" fill="none"/>
<path d="M1842.1 414L1858.6 414" stroke="#c9973f" stroke-width="0.6" fill="none"/>
<path d="M1842.1 416.4L1858.6 416.4" stroke="#c9973f" stroke-width="0.6" fill="none"/>
<path d="M1842.1 418.9L1858.6 418.9" stroke="#c9973f" stroke-width="0.6" fill="none"/>
<path d="M1842.1 421.4L1858.6 421.4" stroke="#c9973f" stroke-width="0.6" fill="none"/>
<path d="M1842.1 423.9L1858.6 423.9" stroke="#c9973f" stroke-width="0.6" fill="none"/>
<path d="M1842.1 426.4L1858.6 426.4" stroke="#c9973f" stroke-width="0.6" fill="none"/>
<path d="M1842.1 428.8L1858.6 428.8" stroke="#c9973f" stroke-width="0.6" fill="none"/>
<rect x="1880.5" y="308.5" width="16.9" height="122.4" fill="#e7bd72"/>
<path d="M1880.5 309.8L1897.4 309.8" stroke="#c9973f" stroke-width="0.6" fill="none"/>
<path d="M1880.5 312.3L1897.4 312.3" stroke="#c9973f" stroke-width="0.6" fill="none"/>
<path d="M1880.5 314.8L1897.4 314.8" stroke="#c9973f" stroke-width="0.6" fill="none"/>
<path d="M1880.5 317.3L1897.4 317.3" stroke="#c9973f" stroke-width="0.6" fill="none"/>
<path d="M1880.5 319.7L1897.4 319.7" stroke="#c9973f" stroke-width="0.6" fill="none"/>
<path d="M1880.5 322.2L1897.4 322.2" stroke="#c9973f" stroke-width="0.6" fill="none"/>
<path d="M1880.5 324.7L1897.4 324.7" stroke="#c9973f" stroke-width="0.6" fill="none"/>
<path d="M1880.5 327.2L1897.4 327.2" stroke="#c9973f" stroke-width="0.6" fill="none"/>
<path d="M1880.5 329.7L1897.4 329.7" stroke="#c9973f" stroke-width="0.6" fill="none"/>
<path d="M1880.5 332.1L1897.4 332.1" stroke="#c9973f" stroke-width="0.6" fill="none"/>
<path d="M1880.5 334.6L1897.4 334.6" stroke="#c9973f" stroke-width="0.6" fill="none"/>
<path d="M1880.5 337.1L1897.4 337.1" stroke="#c9973f" stroke-width="0.6" fill="none"/>
<path d="M1880.5 339.6L1897.4 339.6" stroke="#c9973f" stroke-width="0.6" fill="none"/>
<path d="M1880.5 342.1L1897.4 342.1" stroke="#c9973f" stroke-width="0.6" fill="none"/>
<path d="M1880.5 344.5L1897.4 344.5" stroke="#c9973f" stroke-width="0.6" fill="none"/>
<path d="M1880.5 347L1897.4 347" stroke="#c9973f" stroke-width="0.6" fill="none"/>
<path d="M1880.5 349.5L1897.4 349.5" stroke="#c9973f" stroke-width="0.6" fill="none"/>
<path d="M1880.5 352L1897.4 352" stroke="#c9973f" stroke-width="0.6" fill="none"/>
<path d="M1880.5 354.5L1897.4 354.5" stroke="#c9973f" stroke-width="0.6" fill="none"/>
<path d="M1880.5 356.9L1897.4 356.9" stroke="#c9973f" stroke-width="0.6" fill="none"/>
<path d="M1880.5 359.4L1897.4 359.4" stroke="#c9973f" stroke-width="0.6" fill="none"/>
<path d="M1880.5 361.9L1897.4 361.9" stroke="#c9973f" stroke-width="0.6" fill="none"/>
<path d="M1880.5 364.4L1897.4 364.4" stroke="#c9973f" stroke-width="0.6" fill="none"/>
<path d="M1880.5 366.9L1897.4 366.9" stroke="#c9973f" stroke-width="0.6" fill="none"/>
<path d="M1880.5 369.3L1897.4 369.3" stroke="#c9973f" stroke-width="0.6" fill="none"/>
<path d="M1880.5 371.8L1897.4 371.8" stroke="#c9973f" stroke-width="0.6" fill="none"/>
<path d="M1880.5 374.3L1897.4 374.3" stroke="#c9973f" stroke-width="0.6" fill="none"/>
<path d="M1880.5 376.8L1897.4 376.8" stroke="#c9973f" stroke-width="0.6" fill="none"/>
<path d="M1880.5 379.2L1897.4 379.2" stroke="#c9973f" stroke-width="0.6" fill="none"/>
<path d="M1880.5 381.7L1897.4 381.7" stroke="#c9973f" stroke-width="0.6" fill="none"/>
<path d="M1880.5 384.2L1897.4 384.2" stroke="#c9973f" stroke-width="0.6" fill="none"/>
<path d="M1880.5 386.7L1897.4 386.7" stroke="#c9973f" stroke-width="0.6" fill="none"/>
<path d="M1880.5 389.2L1897.4 389.2" stroke="#c9973f" stroke-width="0.6" fill="none"/>
<path d="M1880.5 391.6L1897.4 391.6" stroke="#c9973f" stroke-width="0.6" fill="none"/>
<path d="M1880.5 394.1L1897.4 394.1" stroke="#c9973f" stroke-width="0.6" fill="none"/>
<path d="M1880.5 396.6L1897.4 396.6" stroke="#c9973f" stroke-width="0.6" fill="none"/>
<path d="M1880.5 399.1L1897.4 399.1" stroke="#c9973f" stroke-width="0.6" fill="none"/>
<path d="M1880.5 401.6L1897.4 401.6" stroke="#c9973f" stroke-width="0.6" fill="none"/>
<path d="M1880.5 404L1897.4 404" stroke="#c9973f" stroke-width="0.6" fill="none"/>
<path d="M1880.5 406.5L1897.4 406.5" stroke="#c9973f" stroke-width="0.6" fill="none"/>
<path d="M1880.5 409L1897.4 409" stroke="#c9973f" stroke-width="0.6" fill="none"/>
<path d="M1880.5 411.5L1897.4 411.5" stroke="#c9973f" stroke-width="0.6" fill="none"/>
<path d="M1880.5 414L1897.4 414" stroke="#c9973f" stroke-width="0.6" fill="none"/>
<path d="M1880.5 416.4L1897.4 416.4" stroke="#c9973f" stroke-width="0.6" fill="none"/>
<path d="M1880.5 418.9L1897.4 418.9" stroke="#c9973f" stroke-width="0.6" fill="none"/>
<path d="M1880.5 421.4L1897.4 421.4" stroke="#c9973f" stroke-width="0.6" fill="none"/>
<path d="M1880.5 423.9L1897.4 423.9" stroke="#c9973f" stroke-width="0.6" fill="none"/>
<path d="M1880.5 426.4L1897.4 426.4" stroke="#c9973f" stroke-width="0.6" fill="none"/>
<path d="M1880.5 428.8L1897.4 428.8" stroke="#c9973f" stroke-width="0.6" fill="none"/>
<path d="M1842.1 308.5L1842.1 430.9" stroke="#f08a1a" stroke-width="1" fill="none"/>
<path d="M1858.6 308.5L1858.6 430.9" stroke="#f08a1a" stroke-width="1" fill="none"/>
<path d="M1880.5 308.5L1880.5 430.9" stroke="#f08a1a" stroke-width="1" fill="none"/>
<path d="M1897.4 308.5L1897.4 430.9" stroke="#f08a1a" stroke-width="1" fill="none"/>
<rect x="1844" y="336.2" width="12.8" height="12.8" fill="#f2f2f2"/>
<rect x="1844" y="363.9" width="12.8" height="12.2" fill="#f2f2f2"/>
<rect x="1844" y="391.4" width="12.8" height="11.3" fill="#f2f2f2"/>
<rect x="1844" y="404.3" width="12.8" height="11.5" fill="#f2f2f2"/>
<rect x="1882.3" y="336.2" width="13.3" height="11.9" fill="#f2f2f2"/>
<rect x="1882.3" y="363.9" width="13.3" height="12.2" fill="#f2f2f2"/>
<rect x="1882.3" y="391.4" width="13.3" height="11.3" fill="#f2f2f2"/>
<rect x="1844" y="349" width="12.8" height="1.8" fill="#9a9a9a"/>
<rect x="1882.3" y="348.1" width="13.3" height="2.3" fill="#9a9a9a"/>
<path d="M1721.6 306.9V435.4H1903V306.9" fill="none" stroke="#c62828" stroke-width="1.3"/>
<rect x="1905.3" y="316.6" width="32.7" height="24.1" fill="#fdfdf6"/>
<rect x="1905.3" y="352" width="32.7" height="23.2" fill="#fdfdf6"/>
<rect x="1905.3" y="386.2" width="24.1" height="23.2" fill="#fdfdf6"/>
<path d="M1909.8 410.6h9v3h-3v3h-3v-3h-3z" fill="#f08a1a"/>
<rect x="1968.4" y="313.7" width="14.2" height="32.7" fill="none" stroke="#c8c8c8" stroke-width="1"/>
<path d="M1968.4 318.2L1982.6 318.2" stroke="#c8c8c8" stroke-width="0.8" fill="none"/>
<path d="M1968.4 323.6L1982.6 323.6" stroke="#c8c8c8" stroke-width="0.8" fill="none"/>
<path d="M1968.4 329L1982.6 329" stroke="#c8c8c8" stroke-width="0.8" fill="none"/>
<path d="M1968.4 334.4L1982.6 334.4" stroke="#c8c8c8" stroke-width="0.8" fill="none"/>
<path d="M1968.4 339.8L1982.6 339.8" stroke="#c8c8c8" stroke-width="0.8" fill="none"/>
<path d="M1968.4 345.2L1982.6 345.2" stroke="#c8c8c8" stroke-width="0.8" fill="none"/>
<path d="M1975.5 313.7L1975.5 346.3" stroke="#c8c8c8" stroke-width="0.8" fill="none"/>
<rect x="1956.6" y="357.6" width="14" height="32.7" fill="none" stroke="#c8c8c8" stroke-width="1"/>
<path d="M1956.6 362.1L1970.6 362.1" stroke="#c8c8c8" stroke-width="0.8" fill="none"/>
<path d="M1956.6 367.5L1970.6 367.5" stroke="#c8c8c8" stroke-width="0.8" fill="none"/>
<path d="M1956.6 372.9L1970.6 372.9" stroke="#c8c8c8" stroke-width="0.8" fill="none"/>
<path d="M1956.6 378.3L1970.6 378.3" stroke="#c8c8c8" stroke-width="0.8" fill="none"/>
<path d="M1956.6 383.8L1970.6 383.8" stroke="#c8c8c8" stroke-width="0.8" fill="none"/>
<path d="M1956.6 389.2L1970.6 389.2" stroke="#c8c8c8" stroke-width="0.8" fill="none"/>
<path d="M1963.6 357.6L1963.6 390.3" stroke="#c8c8c8" stroke-width="0.8" fill="none"/>
<rect x="1959.3" y="358.7" width="4.5" height="30.4" fill="#f4f4f4"/>
<rect x="1747" y="418.5" width="17.4" height="24.8" fill="#c9c9c9"/>
<rect x="1750.4" y="425.2" width="10.6" height="12.4" fill="#a8a8a8"/>
<rect x="1747.5" y="418.5" width="16.9" height="1.4" fill="#e3b76a"/>
<path d="M1753.1 407.2L1753.1 418.5" stroke="#222" stroke-width="1" fill="none"/>
<rect x="1759" y="426.4" width="2.7" height="6.1" fill="#111"/>
<path d="M1678.3 435.4V468.5H1880.5V435.4" fill="none" stroke="#bc9b29" stroke-width="1.1"/>
<path d="M1775.7 479.5H1878.2L1906.4 450.7H1983" fill="none" stroke="#bc9b29" stroke-width="1.1"/>
<path d="M1901.9 486.1L1915.4 473H1983M1905.3 483.4H1983" fill="none" stroke="#bc9b29" stroke-width="1.1"/>
<path d="M1674.2 473.7L1877.1 473.7" stroke="#b6962a" stroke-width="1.2" fill="none" stroke-dasharray="3 2 3 13.5"/>
<path d="M1923.3 478.2L1972.9 478.2" stroke="#b6962a" stroke-width="1.2" fill="none" stroke-dasharray="3 2 3 10.5"/>
<path d="M1923.3 530L1972.9 530" stroke="#b6962a" stroke-width="1.2" fill="none" stroke-dasharray="3 2 3 10.5"/>
<path d="M1540.4 306.9L1540.4 479.3" stroke="#bc9b29" stroke-width="1" fill="none"/>
<path d="M1540.4 479.3L1556.6 479.3" stroke="#bc9b29" stroke-width="1.2" fill="none"/>
<path d="M1303 490.1L1899.6 490.1" stroke="#bc9b29" stroke-width="1.15" fill="none" stroke-dasharray="6 4"/>
<path d="M1753.6 491.7L1753.6 525.5" stroke="#bc9b29" stroke-width="1.1" fill="none" stroke-dasharray="6 4"/>
<path d="M1860.9 491.7L1860.9 525.5" stroke="#bc9b29" stroke-width="1.1" fill="none" stroke-dasharray="6 4"/>
<path d="M1882.7 491.7L1882.7 525.5" stroke="#bc9b29" stroke-width="1.1" fill="none" stroke-dasharray="6 4"/>
<path d="M1756.1 526.9L1983 526.9" stroke="#bc9b29" stroke-width="1" fill="none"/>
<path d="M1860.9 526.9L1860.9 702.4" stroke="#bc9b29" stroke-width="1" fill="none"/>
<path d="M1882.7 526.9L1882.7 702.4" stroke="#bc9b29" stroke-width="1" fill="none"/>
<path d="M1753.6 528.4L1753.6 740.1" stroke="#bc9b29" stroke-width="1" fill="none"/>
<path d="M1665.2 476.2l-2.5 4.5h5z" fill="#e31b1b"/>
<path d="M1980.3 476.2l-2.5 4.5h5z" fill="#e31b1b"/>
<rect x="1084.3" y="586.6" width="26.1" height="135.7" fill="#352f2f"/>
<rect x="1092.1" y="574.6" width="10.1" height="11.9" fill="#352f2f"/>
<rect x="1139.7" y="590.4" width="25.7" height="135.9" fill="#352f2f"/>
<rect x="1147.4" y="726.3" width="10.4" height="11.7" fill="#352f2f"/>
<rect x="1184.8" y="586.6" width="25.7" height="135.7" fill="#352f2f"/>
<rect x="1192.7" y="574.6" width="10.1" height="11.9" fill="#352f2f"/>
<rect x="1240" y="590.4" width="25.7" height="135.9" fill="#352f2f"/>
<rect x="1247.9" y="726.3" width="9.9" height="11.7" fill="#352f2f"/>
<rect x="1105.2" y="601.7" width="5.2" height="39.4" fill="#4a4e5c"/>
<rect x="1139.7" y="672.7" width="4.5" height="39.4" fill="#4a4e5c"/>
<rect x="1205.5" y="601.7" width="5" height="39.4" fill="#4a4e5c"/>
<rect x="1240" y="672.7" width="5" height="39.4" fill="#4a4e5c"/>
<rect x="1089.4" y="645.2" width="15.8" height="13.3" fill="#7fd0cf"/>
<rect x="1106.3" y="652.4" width="4.1" height="6.8" fill="#7fd0cf"/>
<rect x="1144.2" y="655.1" width="15.8" height="13.1" fill="#7fd0cf"/>
<rect x="1139.7" y="654.2" width="3.2" height="6.8" fill="#7fd0cf"/>
<rect x="1190.2" y="645.2" width="15.8" height="13.3" fill="#7fd0cf"/>
<rect x="1207.1" y="652.4" width="3.4" height="6.8" fill="#7fd0cf"/>
<rect x="1245" y="655.1" width="15.8" height="13.1" fill="#7fd0cf"/>
<rect x="1240" y="654.2" width="3.2" height="6.8" fill="#7fd0cf"/>
<path d="M1088.8 665.9L1088.8 723.4" stroke="#fff" stroke-width="1.6" fill="none"/>
<path d="M1096.2 665.9L1096.2 723.4" stroke="#fff" stroke-width="1.2" fill="none"/>
<path d="M1098.5 665.9L1098.5 723.4" stroke="#fff" stroke-width="1.2" fill="none"/>
<path d="M1105.9 665.9L1105.9 723.4" stroke="#fff" stroke-width="1.6" fill="none"/>
<rect x="1087.2" y="702.4" width="20.3" height="3.6" fill="#fff"/>
<rect x="1093.9" y="695.2" width="6.8" height="22.5" fill="#fff" fill-opacity=".55"/>
<path d="M1088.8 665.9L1105.9 665.9" stroke="#fff" stroke-width="1" fill="none"/>
<path d="M1189.5 665.9L1189.5 723.4" stroke="#fff" stroke-width="1.6" fill="none"/>
<path d="M1196.9 665.9L1196.9 723.4" stroke="#fff" stroke-width="1.2" fill="none"/>
<path d="M1199.2 665.9L1199.2 723.4" stroke="#fff" stroke-width="1.2" fill="none"/>
<path d="M1206.6 665.9L1206.6 723.4" stroke="#fff" stroke-width="1.6" fill="none"/>
<rect x="1187.9" y="702.4" width="20.3" height="3.6" fill="#fff"/>
<rect x="1194.7" y="695.2" width="6.8" height="22.5" fill="#fff" fill-opacity=".55"/>
<path d="M1189.5 665.9L1206.6 665.9" stroke="#fff" stroke-width="1" fill="none"/>
<path d="M1143.1 589.3L1143.1 648.3" stroke="#fff" stroke-width="1.6" fill="none"/>
<path d="M1150.5 589.3L1150.5 648.3" stroke="#fff" stroke-width="1.2" fill="none"/>
<path d="M1154.3 589.3L1154.3 648.3" stroke="#fff" stroke-width="1.2" fill="none"/>
<path d="M1161.8 589.3L1161.8 648.3" stroke="#fff" stroke-width="1.6" fill="none"/>
<rect x="1142" y="606.9" width="20.7" height="3.6" fill="#fff"/>
<rect x="1148.7" y="596.1" width="7.2" height="21.4" fill="#fff" fill-opacity=".55"/>
<path d="M1243.8 589.3L1243.8 648.3" stroke="#fff" stroke-width="1.6" fill="none"/>
<path d="M1251.3 589.3L1251.3 648.3" stroke="#fff" stroke-width="1.2" fill="none"/>
<path d="M1255.1 589.3L1255.1 648.3" stroke="#fff" stroke-width="1.2" fill="none"/>
<path d="M1262.5 589.3L1262.5 648.3" stroke="#fff" stroke-width="1.6" fill="none"/>
<rect x="1242.7" y="606.9" width="20.7" height="3.6" fill="#fff"/>
<rect x="1249.5" y="596.1" width="7.2" height="21.4" fill="#fff" fill-opacity=".55"/>
<rect x="1084.3" y="859.3" width="26.1" height="135.7" fill="#352f2f"/>
<rect x="1092.1" y="847.4" width="10.1" height="11.9" fill="#352f2f"/>
<rect x="1139.7" y="863.1" width="25.7" height="135.9" fill="#352f2f"/>
<rect x="1147.4" y="999" width="10.4" height="11.7" fill="#352f2f"/>
<rect x="1184.8" y="859.3" width="25.7" height="135.7" fill="#352f2f"/>
<rect x="1192.7" y="847.4" width="10.1" height="11.9" fill="#352f2f"/>
<rect x="1240" y="863.1" width="25.7" height="135.9" fill="#352f2f"/>
<rect x="1247.9" y="999" width="9.9" height="11.7" fill="#352f2f"/>
<rect x="1105.2" y="874.4" width="5.2" height="39.4" fill="#4a4e5c"/>
<rect x="1139.7" y="945.4" width="4.5" height="39.4" fill="#4a4e5c"/>
<rect x="1205.5" y="874.4" width="5" height="39.4" fill="#4a4e5c"/>
<rect x="1240" y="945.4" width="5" height="39.4" fill="#4a4e5c"/>
<rect x="1089.4" y="917.9" width="15.8" height="13.3" fill="#7fd0cf"/>
<rect x="1106.3" y="925.1" width="4.1" height="6.8" fill="#7fd0cf"/>
<rect x="1144.2" y="927.8" width="15.8" height="13.1" fill="#7fd0cf"/>
<rect x="1139.7" y="926.9" width="3.2" height="6.8" fill="#7fd0cf"/>
<rect x="1190.2" y="917.9" width="15.8" height="13.3" fill="#7fd0cf"/>
<rect x="1207.1" y="925.1" width="3.4" height="6.8" fill="#7fd0cf"/>
<rect x="1245" y="927.8" width="15.8" height="13.1" fill="#7fd0cf"/>
<rect x="1240" y="926.9" width="3.2" height="6.8" fill="#7fd0cf"/>
<path d="M1088.8 938.6L1088.8 996.1" stroke="#fff" stroke-width="1.6" fill="none"/>
<path d="M1096.2 938.6L1096.2 996.1" stroke="#fff" stroke-width="1.2" fill="none"/>
<path d="M1098.5 938.6L1098.5 996.1" stroke="#fff" stroke-width="1.2" fill="none"/>
<path d="M1105.9 938.6L1105.9 996.1" stroke="#fff" stroke-width="1.6" fill="none"/>
<rect x="1087.2" y="975.1" width="20.3" height="3.6" fill="#fff"/>
<rect x="1093.9" y="967.9" width="6.8" height="22.5" fill="#fff" fill-opacity=".55"/>
<path d="M1088.8 938.6L1105.9 938.6" stroke="#fff" stroke-width="1" fill="none"/>
<path d="M1189.5 938.6L1189.5 996.1" stroke="#fff" stroke-width="1.6" fill="none"/>
<path d="M1196.9 938.6L1196.9 996.1" stroke="#fff" stroke-width="1.2" fill="none"/>
<path d="M1199.2 938.6L1199.2 996.1" stroke="#fff" stroke-width="1.2" fill="none"/>
<path d="M1206.6 938.6L1206.6 996.1" stroke="#fff" stroke-width="1.6" fill="none"/>
<rect x="1187.9" y="975.1" width="20.3" height="3.6" fill="#fff"/>
<rect x="1194.7" y="967.9" width="6.8" height="22.5" fill="#fff" fill-opacity=".55"/>
<path d="M1189.5 938.6L1206.6 938.6" stroke="#fff" stroke-width="1" fill="none"/>
<path d="M1143.1 862L1143.1 921.1" stroke="#fff" stroke-width="1.6" fill="none"/>
<path d="M1150.5 862L1150.5 921.1" stroke="#fff" stroke-width="1.2" fill="none"/>
<path d="M1154.3 862L1154.3 921.1" stroke="#fff" stroke-width="1.2" fill="none"/>
<path d="M1161.8 862L1161.8 921.1" stroke="#fff" stroke-width="1.6" fill="none"/>
<rect x="1142" y="879.6" width="20.7" height="3.6" fill="#fff"/>
<rect x="1148.7" y="868.8" width="7.2" height="21.4" fill="#fff" fill-opacity=".55"/>
<path d="M1243.8 862L1243.8 921.1" stroke="#fff" stroke-width="1.6" fill="none"/>
<path d="M1251.3 862L1251.3 921.1" stroke="#fff" stroke-width="1.2" fill="none"/>
<path d="M1255.1 862L1255.1 921.1" stroke="#fff" stroke-width="1.2" fill="none"/>
<path d="M1262.5 862L1262.5 921.1" stroke="#fff" stroke-width="1.6" fill="none"/>
<rect x="1242.7" y="879.6" width="20.7" height="3.6" fill="#fff"/>
<rect x="1249.5" y="868.8" width="7.2" height="21.4" fill="#fff" fill-opacity=".55"/>
<rect x="1115.8" y="616.3" width="17.1" height="11.3" fill="#fff"/>
<rect x="1216.1" y="619.3" width="16.9" height="11.7" fill="#fff"/>
<rect x="1115.8" y="958.2" width="17.1" height="11.5" fill="#fff"/>
<rect x="1217.9" y="967.9" width="16.9" height="11.3" fill="#fff"/>
<polygon points="1097.1,759.1 1093.7,760.5 1092.2,763.9 1088.8,762.6 1085.3,763.9 1083.9,760.5 1080.5,759.1 1081.8,755.6 1080.5,752.2 1083.9,750.7 1085.3,747.3 1088.8,748.7 1092.2,747.3 1093.7,750.7 1097.1,752.2 1095.7,755.6" fill="#e9e9e9"/>
<polygon points="1163.6,759.1 1160.2,760.5 1158.7,763.9 1155.3,762.6 1151.8,763.9 1150.4,760.5 1146.9,759.1 1148.3,755.6 1146.9,752.2 1150.4,750.7 1151.8,747.3 1155.3,748.7 1158.7,747.3 1160.2,750.7 1163.6,752.2 1162.2,755.6" fill="#e9e9e9"/>
<polygon points="1199.9,759.1 1196.4,760.5 1195,763.9 1191.5,762.6 1188.1,763.9 1186.6,760.5 1183.2,759.1 1184.6,755.6 1183.2,752.2 1186.6,750.7 1188.1,747.3 1191.5,748.7 1195,747.3 1196.4,750.7 1199.9,752.2 1198.5,755.6" fill="#e9e9e9"/>
<polygon points="1263.9,759.1 1260.4,760.5 1259,763.9 1255.5,762.6 1252.1,763.9 1250.6,760.5 1247.2,759.1 1248.6,755.6 1247.2,752.2 1250.6,750.7 1252.1,747.3 1255.5,748.7 1259,747.3 1260.4,750.7 1263.9,752.2 1262.5,755.6" fill="#e9e9e9"/>
<polygon points="1099.3,833.2 1095.9,834.7 1094.5,838.1 1091,836.7 1087.6,838.1 1086.1,834.7 1082.7,833.2 1084.1,829.8 1082.7,826.3 1086.1,824.9 1087.6,821.5 1091,822.8 1094.5,821.5 1095.9,824.9 1099.3,826.3 1097.9,829.8" fill="#e9e9e9"/>
<polygon points="1163.6,833.2 1160.2,834.7 1158.7,838.1 1155.3,836.7 1151.8,838.1 1150.4,834.7 1146.9,833.2 1148.3,829.8 1146.9,826.3 1150.4,824.9 1151.8,821.5 1155.3,822.8 1158.7,821.5 1160.2,824.9 1163.6,826.3 1162.2,829.8" fill="#e9e9e9"/>
<polygon points="1201,833.2 1197.6,834.7 1196.1,838.1 1192.7,836.7 1189.2,838.1 1187.8,834.7 1184.3,833.2 1185.7,829.8 1184.3,826.3 1187.8,824.9 1189.2,821.5 1192.7,822.8 1196.1,821.5 1197.6,824.9 1201,826.3 1199.6,829.8" fill="#e9e9e9"/>
<polygon points="1263.9,833.2 1260.4,834.7 1259,838.1 1255.5,836.7 1252.1,838.1 1250.6,834.7 1247.2,833.2 1248.6,829.8 1247.2,826.3 1250.6,824.9 1252.1,821.5 1255.5,822.8 1259,821.5 1260.4,824.9 1263.9,826.3 1262.5,829.8" fill="#e9e9e9"/>
<rect x="1105.2" y="747.1" width="10.6" height="18.7" fill="#2e9a4a"/>
<rect x="1203.9" y="747.1" width="10.6" height="18.7" fill="#2e9a4a"/>
<rect x="1105.2" y="821.4" width="10.6" height="18.5" fill="#2e9a4a"/>
<rect x="1205.1" y="821.4" width="9.9" height="18.5" fill="#2e9a4a"/>
<rect x="1078.2" y="773" width="11.9" height="16.5" fill="#fff"/>
<rect x="1091.2" y="773" width="11.7" height="16.5" fill="#fff"/>
<rect x="1104.1" y="773" width="11.3" height="16.5" fill="#fff"/>
<rect x="1134.5" y="773" width="11.3" height="16.5" fill="#fff"/>
<rect x="1147.4" y="773" width="11.5" height="16.5" fill="#fff"/>
<rect x="1189.3" y="773" width="11.3" height="16.5" fill="#fff"/>
<rect x="1202.1" y="773" width="11.7" height="16.5" fill="#fff"/>
<rect x="1258.5" y="773" width="11.3" height="16.5" fill="#fff"/>
<path d="M1075.9 770.7L1115.4 770.7" stroke="#ddd" stroke-width="1" fill="none"/>
<path d="M1134.5 770.7L1213.8 770.7" stroke="#ddd" stroke-width="1" fill="none"/>
<path d="M1234.4 770.7L1269.7 770.7" stroke="#ddd" stroke-width="1" fill="none"/>
<path d="M1066.9 790.3L1270.4 790.3" stroke="#bc9b29" stroke-width="1.2" fill="none"/>
<path d="M1066.9 819.6L1270.4 819.6" stroke="#bc9b29" stroke-width="1.2" fill="none"/>
<path d="M1115.8 761.7L1115.8 790.3" stroke="#bc9b29" stroke-width="1.2" fill="none"/>
<path d="M1133.4 761.7L1133.4 790.3" stroke="#bc9b29" stroke-width="1.2" fill="none"/>
<path d="M1215.2 761.7L1215.2 790.3" stroke="#bc9b29" stroke-width="1.2" fill="none"/>
<path d="M1232.6 761.7L1232.6 790.3" stroke="#bc9b29" stroke-width="1.2" fill="none"/>
<path d="M1117.2 819.6L1117.2 850.7" stroke="#bc9b29" stroke-width="1.2" fill="none"/>
<path d="M1135.2 819.6L1135.2 850.7" stroke="#bc9b29" stroke-width="1.2" fill="none"/>
<path d="M1216.3 819.6L1216.3 850.7" stroke="#bc9b29" stroke-width="1.2" fill="none"/>
<path d="M1234.4 819.6L1234.4 850.7" stroke="#bc9b29" stroke-width="1.2" fill="none"/>
<rect x="1163.7" y="1021.2" width="11.6" height="15.6" fill="none" stroke="#ddd" stroke-width="0.8"/>
<rect x="1164.2" y="1022.3" width="9.6" height="6.2" fill="#3f8fd6"/>
<rect x="1164.2" y="1029.4" width="9.6" height="6.2" fill="#3f8fd6"/>
<rect x="1192.7" y="1019" width="8.9" height="5.6" fill="#3f8fd6"/>
<rect x="1192.7" y="1025.6" width="8.9" height="5.6" fill="#3f8fd6"/>
<rect x="1203.9" y="1018.3" width="9.6" height="5.8" fill="#3f8fd6"/>
<rect x="1203.9" y="1025" width="9.6" height="5.8" fill="#3f8fd6"/>
<rect x="1216.8" y="1018.3" width="9.4" height="5.8" fill="#3f8fd6"/>
<pattern id="hat" width="3" height="3" patternUnits="userSpaceOnUse" patternTransform="rotate(-45)"><rect width="3" height="3" fill="#4a4d5c"/><line x1="0" y1="0" x2="0" y2="3" stroke="#2a3a9a" stroke-width="1"/></pattern>
<rect x="1203.4" y="1031.2" width="10.5" height="14.5" fill="url(#hat)" stroke="#1f2f8c" stroke-width="0.9"/>
<rect x="1216.1" y="1024.1" width="10.7" height="21.6" fill="url(#hat)" stroke="#1f2f8c" stroke-width="0.9"/>
<rect x="1272.6" y="1146.1" width="22.3" height="22.3" fill="url(#hat)" stroke="#1f2f8c" stroke-width="0.9"/>
<rect x="1149.2" y="1046.8" width="6.7" height="6.2" fill="#e30613"/>
<rect x="1155.9" y="1046.8" width="7.1" height="6.2" fill="#fff"/>
<rect x="1163.1" y="1045.3" width="16.9" height="29" fill="#b9bcc6" rx="2"/>
<rect x="1166" y="1056.9" width="11.2" height="1.6" fill="#9fc4e8"/>
<rect x="1166" y="1059.8" width="11.2" height="1.6" fill="#9fc4e8"/>
<path d="M1176 1019L1176 1045.3" stroke="#aaa" stroke-width="1.5" fill="none"/>
<path d="M1174.9 1074.3L1174.9 1088.1" stroke="#aaa" stroke-width="1.5" fill="none"/>
<rect x="1169.3" y="1088.1" width="10" height="14.5" fill="#575b68" stroke="#d5d5d5" stroke-width="1"/>
<rect x="1169.3" y="1109.3" width="10" height="14.5" fill="#575b68" stroke="#d5d5d5" stroke-width="1"/>
<rect x="1199" y="1096.3" width="10" height="14" fill="#575b68" stroke="#d5d5d5" stroke-width="1"/>
<rect x="1199" y="1117.5" width="10" height="14" fill="#575b68" stroke="#d5d5d5" stroke-width="1"/>
<rect x="1178.2" y="1131.1" width="13.4" height="9.4" fill="#575b68" stroke="#d5d5d5" stroke-width="1"/>
<rect x="1173.1" y="1092.6" width="3.6" height="5.6" fill="#9fc4e8"/>
<rect x="1173.1" y="1113.7" width="3.6" height="5.6" fill="#9fc4e8"/>
<rect x="1157" y="1102.6" width="20.1" height="6.7" fill="none" stroke="#c8c8c8" stroke-width="0.8"/>
<path d="M1157 1105.9L1177.1 1105.9" stroke="#c8c8c8" stroke-width="0.8" fill="none"/>
<rect x="1157" y="1123.8" width="19" height="6.7" fill="none" stroke="#c8c8c8" stroke-width="0.8"/>
<path d="M1157 1127.1L1176 1127.1" stroke="#c8c8c8" stroke-width="0.8" fill="none"/>
<rect x="1209" y="1110.8" width="12" height="6.7" fill="none" stroke="#c8c8c8" stroke-width="0.8"/>
<path d="M1209 1114.2L1221.1 1114.2" stroke="#c8c8c8" stroke-width="0.8" fill="none"/>
<rect x="1192.3" y="1133.8" width="6.7" height="19.6" fill="none" stroke="#c8c8c8" stroke-width="0.8"/>
<path d="M1195.6 1133.8L1195.6 1153.4" stroke="#c8c8c8" stroke-width="0.8" fill="none"/>
<rect x="1201.2" y="1069.8" width="23.9" height="26.5" fill="#575b68"/>
<rect x="1201.2" y="1069.8" width="23.9" height="26.5" fill="none" stroke="#c8c8c8" stroke-width="0.7"/>
<path d="M1206.1 1073.6L1225.1 1073.6" stroke="#d5d5d5" stroke-width="0.8" fill="none"/>
<path d="M1206.1 1078.1L1225.1 1078.1" stroke="#d5d5d5" stroke-width="0.8" fill="none"/>
<path d="M1206.1 1083L1225.1 1083" stroke="#d5d5d5" stroke-width="0.8" fill="none"/>
<path d="M1206.1 1088.1L1225.1 1088.1" stroke="#d5d5d5" stroke-width="0.8" fill="none"/>
<path d="M1206.1 1092.6L1225.1 1092.6" stroke="#d5d5d5" stroke-width="0.8" fill="none"/>
<rect x="1201.2" y="1069.8" width="3.8" height="6.7" fill="#fff"/>
<rect x="1247.4" y="1046.4" width="13.4" height="120.9" fill="#575b68"/>
<path d="M1247.4 1046.4L1247.4 1167.3" stroke="#c5c5c5" stroke-width="0.8" fill="none"/>
<path d="M1253.6 1046.4L1253.6 1167.3" stroke="#c5c5c5" stroke-width="0.8" fill="none"/>
<path d="M1260.7 1046.4L1260.7 1167.3" stroke="#c5c5c5" stroke-width="0.8" fill="none"/>
<path d="M1247.4 1046.4L1260.7 1046.4" stroke="#c5c5c5" stroke-width="0.7" fill="none"/>
<path d="M1247.4 1056.4L1260.7 1056.4" stroke="#c5c5c5" stroke-width="0.7" fill="none"/>
<path d="M1247.4 1066.5L1260.7 1066.5" stroke="#c5c5c5" stroke-width="0.7" fill="none"/>
<path d="M1247.4 1076.5L1260.7 1076.5" stroke="#c5c5c5" stroke-width="0.7" fill="none"/>
<path d="M1247.4 1086.5L1260.7 1086.5" stroke="#c5c5c5" stroke-width="0.7" fill="none"/>
<path d="M1247.4 1096.6L1260.7 1096.6" stroke="#c5c5c5" stroke-width="0.7" fill="none"/>
<path d="M1247.4 1106.6L1260.7 1106.6" stroke="#c5c5c5" stroke-width="0.7" fill="none"/>
<path d="M1247.4 1116.6L1260.7 1116.6" stroke="#c5c5c5" stroke-width="0.7" fill="none"/>
<path d="M1247.4 1126.7L1260.7 1126.7" stroke="#c5c5c5" stroke-width="0.7" fill="none"/>
<path d="M1247.4 1136.7L1260.7 1136.7" stroke="#c5c5c5" stroke-width="0.7" fill="none"/>
<path d="M1247.4 1146.7L1260.7 1146.7" stroke="#c5c5c5" stroke-width="0.7" fill="none"/>
<path d="M1247.4 1156.8L1260.7 1156.8" stroke="#c5c5c5" stroke-width="0.7" fill="none"/>
<path d="M1247.4 1166.8L1260.7 1166.8" stroke="#c5c5c5" stroke-width="0.7" fill="none"/>
<path d="M1302.9 490V981L1329 1009.2H1899" fill="none" stroke="#bc9b29" stroke-width="1.15" stroke-dasharray="6 4"/>
<path d="M1314.4 491L1314.4 543" stroke="#bc9b29" stroke-width="1.1" fill="none" stroke-dasharray="6 4"/>
<path d="M1504.4 492L1504.4 520" stroke="#bc9b29" stroke-width="1.1" fill="none" stroke-dasharray="6 4"/>
<path d="M1525.8 492L1525.8 520" stroke="#bc9b29" stroke-width="1.1" fill="none" stroke-dasharray="6 4"/>
<path d="M1507 526.3L1526 526.3" stroke="#bc9b29" stroke-width="1" fill="none"/>
<path d="M1271 479.3L1539 479.3" stroke="#bc9b29" stroke-width="1" fill="none"/>
<path d="M1558 479.3L1774 479.3" stroke="#bc9b29" stroke-width="0.9" fill="none"/>
<path d="M1314 543.5L1332.5 525.3H1505" fill="none" stroke="#bc9b29" stroke-width="0.9"/>
<path d="M1312.6 545L1312.6 982" stroke="#bc9b29" stroke-width="0.9" fill="none"/>
<path d="M1313 981.5L1331.5 999.6H1879L1907.5 971.6H1983" fill="none" stroke="#bc9b29" stroke-width="0.9"/>
<path d="M1316 743.3L1316 760" stroke="#bc9b29" stroke-width="1" fill="none"/>
<rect x="1303.3" y="492.1" width="6.5" height="10.6" fill="#3f8fd6"/>
<rect x="1310.5" y="492.1" width="6.5" height="10.6" fill="#3f8fd6"/>
<rect x="1317.7" y="492.1" width="6.5" height="10.6" fill="#3f8fd6"/>
<rect x="1334.8" y="492.1" width="6.5" height="10.6" fill="#3f8fd6"/>
<rect x="1342" y="492.1" width="6.5" height="10.6" fill="#3f8fd6"/>
<rect x="1349.2" y="492.1" width="6.5" height="10.6" fill="#3f8fd6"/>
<rect x="1302.8" y="491.6" width="21.9" height="11.5" fill="none" stroke="#1d4a86" stroke-width="0.7"/>
<rect x="1334.3" y="491.6" width="21.9" height="11.5" fill="none" stroke="#1d4a86" stroke-width="0.7"/>
<g transform="rotate(-58 1289.3 508.3)">
<rect x="1278.8" y="502.8" width="6.6" height="11" fill="#3f8fd6"/>
<rect x="1286" y="502.8" width="6.6" height="11" fill="#3f8fd6"/>
<rect x="1293.2" y="502.8" width="6.6" height="11" fill="#3f8fd6"/>
<rect x="1278.3" y="502.3" width="22" height="12" fill="none" stroke="#1d4a86" stroke-width=".7"/></g>
<rect x="1275.3" y="527" width="9.9" height="6.5" fill="#3f8fd6"/>
<rect x="1275.3" y="534.2" width="9.9" height="6.5" fill="#3f8fd6"/>
<rect x="1275.3" y="541.4" width="9.9" height="6.5" fill="#3f8fd6"/>
<rect x="1274.9" y="526.5" width="10.8" height="21.9" fill="none" stroke="#1d4a86" stroke-width="0.7"/>
<path d="M1276.9 548.4L1280.3 556.7L1283.7 548.4M1298.3 493.7L1303.3 497M1324.7 497L1334.3 497M1279.1 526.3L1281.4 518.4" fill="none" stroke="#1d4a86" stroke-width="0.8"/>
<rect x="1273.5" y="558.1" width="13.5" height="26.4" fill="#e0a010" rx="2"/>
<rect x="1274" y="558.5" width="12.6" height="24.8" fill="#0b0b0d" rx="2"/>
<rect x="1276.2" y="560.1" width="8.1" height="9" fill="#2a2a2a"/>
<path d="M1317.4 643.5V546.6L1334.3 530.4H1406.4V636.7" fill="none" stroke="#a9a9a9" stroke-width="1"/>
<rect x="1334.3" y="530.4" width="28.2" height="45.1" fill="none" stroke="#b5b5b5" stroke-width="1.2"/>
<path d="M1317.4 575.4L1362.5 575.4" stroke="#b5b5b5" stroke-width="1.2" fill="none"/>
<rect x="1319" y="553.8" width="15.8" height="20.3" fill="#f6f6e4"/>
<rect x="1334.3" y="562.4" width="16.2" height="11.7" fill="#f6f6e4"/>
<rect x="1335.5" y="552.2" width="5.6" height="6.1" fill="#111"/>
<rect x="1325.3" y="564.2" width="7.9" height="3.2" fill="#222" transform="rotate(35 1329.3 565.7)"/>
<path d="M1363.2 560.1L1376 563.5" stroke="#ddd" stroke-width="1" fill="none"/>
<rect x="1399.2" y="564.6" width="6.8" height="11.3" fill="#c47b24"/>
<rect x="1393.4" y="577.7" width="11.5" height="17.3" fill="#e3b76a"/>
<path d="M1395.2 577.7L1395.2 595" stroke="#c9973f" stroke-width="0.6" fill="none"/>
<path d="M1397.9 577.7L1397.9 595" stroke="#c9973f" stroke-width="0.6" fill="none"/>
<path d="M1400.6 577.7L1400.6 595" stroke="#c9973f" stroke-width="0.6" fill="none"/>
<path d="M1403.3 577.7L1403.3 595" stroke="#c9973f" stroke-width="0.6" fill="none"/>
<rect x="1339.3" y="602.5" width="42.4" height="19.6" fill="#5a5e6b"/>
<rect x="1326.9" y="637.2" width="10.8" height="6.3" fill="#f3f3f3"/>
<rect x="1338.8" y="637.2" width="17.6" height="6.3" fill="#f3f3f3"/>
<rect x="1372.6" y="637.8" width="33.8" height="5.6" fill="#f3f3f3"/>
<rect x="1372.6" y="636" width="16.9" height="1.8" fill="#f3f3f3"/>
<rect x="1366.1" y="638.5" width="4.1" height="4.1" fill="#f0a010" transform="rotate(45 1368.1 640.5)"/>
<rect x="1319" y="648" width="12.6" height="6.3" fill="#c47b24"/>
<rect x="1319" y="655.9" width="12.6" height="6.8" fill="#c47b24"/>
<rect x="1333.2" y="675.5" width="11.9" height="6.8" fill="#c47b24"/>
<rect x="1328.3" y="716.7" width="12.4" height="6.8" fill="#c47b24"/>
<rect x="1328.3" y="724.6" width="12.4" height="6.8" fill="#c47b24"/>
<rect x="1328.3" y="732.4" width="12.4" height="6.8" fill="#c47b24"/>
<rect x="1345.6" y="646.8" width="55.6" height="35.4" fill="#e3e3e3"/>
<rect x="1347.9" y="653.6" width="51.8" height="20.3" fill="#a9a9a0"/>
<rect x="1345.6" y="673.9" width="55.6" height="8.3" fill="#f2f2f2"/>
<rect x="1345.6" y="703.2" width="55.6" height="36" fill="#e3e3e3"/>
<rect x="1345.6" y="703.2" width="55.6" height="7.4" fill="#f4f4f4"/>
<rect x="1347.9" y="711" width="51.8" height="20.3" fill="#a9a9a0"/>
<rect x="1345.6" y="734.7" width="55.6" height="4.5" fill="#bdbdb5"/>
<path d="M1350.1 668.2L1350.1 672.7" stroke="#e8e8e8" stroke-width="1" fill="none"/>
<path d="M1350.1 712.2L1350.1 716.7" stroke="#e8e8c0" stroke-width="1" fill="none"/>
<path d="M1355.1 668.2L1355.1 672.7" stroke="#e8e8e8" stroke-width="1" fill="none"/>
<path d="M1355.1 712.2L1355.1 716.7" stroke="#e8e8c0" stroke-width="1" fill="none"/>
<path d="M1360 668.2L1360 672.7" stroke="#e8e8e8" stroke-width="1" fill="none"/>
<path d="M1360 712.2L1360 716.7" stroke="#e8e8c0" stroke-width="1" fill="none"/>
<path d="M1365 668.2L1365 672.7" stroke="#e8e8e8" stroke-width="1" fill="none"/>
<path d="M1365 712.2L1365 716.7" stroke="#e8e8c0" stroke-width="1" fill="none"/>
<path d="M1369.9 668.2L1369.9 672.7" stroke="#e8e8e8" stroke-width="1" fill="none"/>
<path d="M1369.9 712.2L1369.9 716.7" stroke="#e8e8c0" stroke-width="1" fill="none"/>
<path d="M1374.9 668.2L1374.9 672.7" stroke="#e8e8e8" stroke-width="1" fill="none"/>
<path d="M1374.9 712.2L1374.9 716.7" stroke="#e8e8c0" stroke-width="1" fill="none"/>
<path d="M1379.8 668.2L1379.8 672.7" stroke="#e8e8e8" stroke-width="1" fill="none"/>
<path d="M1379.8 712.2L1379.8 716.7" stroke="#e8e8c0" stroke-width="1" fill="none"/>
<path d="M1384.8 668.2L1384.8 672.7" stroke="#e8e8e8" stroke-width="1" fill="none"/>
<path d="M1384.8 712.2L1384.8 716.7" stroke="#e8e8c0" stroke-width="1" fill="none"/>
<path d="M1389.8 668.2L1389.8 672.7" stroke="#e8e8e8" stroke-width="1" fill="none"/>
<path d="M1389.8 712.2L1389.8 716.7" stroke="#e8e8c0" stroke-width="1" fill="none"/>
<path d="M1394.7 668.2L1394.7 672.7" stroke="#e8e8e8" stroke-width="1" fill="none"/>
<path d="M1394.7 712.2L1394.7 716.7" stroke="#e8e8c0" stroke-width="1" fill="none"/>
<path d="M1342.2 674.6L1404.2 674.6" stroke="#f4f4f4" stroke-width="1" fill="none"/>
<path d="M1342.2 710.6L1404.2 710.6" stroke="#f4f4f4" stroke-width="1" fill="none"/>
<circle cx="1410.5" cy="716.2" r="4" fill="none" stroke="#6d7690" stroke-width="1" stroke-dasharray="1.5 1.5"/>
<rect x="1404.2" y="729.1" width="25.2" height="10.6" fill="#575b68" stroke="#d9d9d9" stroke-width="1"/>
<rect x="1405.3" y="729.1" width="23.7" height="3.4" fill="#f0f0f0"/>
<rect x="1408.7" y="734.7" width="13.5" height="1.8" fill="#222" transform="rotate(12 1415.4 735.6)"/>
<rect x="1410.9" y="529.7" width="10.8" height="109.3" fill="#fff"/>
<rect x="1442.9" y="529.7" width="11.9" height="136.7" fill="#fff"/>
<rect x="1456.4" y="529.7" width="11.9" height="136.7" fill="#fff"/>
<rect x="1489.3" y="529.7" width="12.4" height="109.3" fill="#fff"/>
<rect x="1489.3" y="660.8" width="12.4" height="27.3" fill="#fff"/>
<rect x="1442.9" y="683.6" width="11.9" height="54.5" fill="#fff"/>
<rect x="1456.4" y="683.6" width="11.9" height="54.5" fill="#fff"/>
<rect x="1411.4" y="641.2" width="11.3" height="24.8" fill="#575b68"/>
<rect x="1422.6" y="641.2" width="10.4" height="24.8" fill="#0b0b0d" rx="1.5"/>
<path d="M1433 641.7L1433 665.5" stroke="#c9a21a" stroke-width="0.8" fill="none"/>
<rect x="1412.7" y="658.1" width="2.7" height="3.4" fill="#4a90d9"/>
<rect x="1417.7" y="660.4" width="3.4" height="2.9" fill="#4a90d9"/>
<rect x="1414.3" y="644.6" width="1.6" height="7.9" fill="#ddd" transform="rotate(20 1415.1 648.5)"/>
<rect x="1490.2" y="715.6" width="7.4" height="5.6" fill="#3f8fd6"/>
<rect x="1490.2" y="722.8" width="7.4" height="5.9" fill="#3f8fd6"/>
<rect x="1503.3" y="715.6" width="4.5" height="5" fill="#f4f4f4"/>
<rect x="1503.3" y="717.8" width="4.5" height="2.7" fill="#2a3f9a"/>
<path d="M1522.4 702L1524.7 710.6" stroke="#ddd" stroke-width="1" fill="none"/>
<linearGradient id="cv" x1="0" x2="1"><stop offset="0" stop-color="#d0d0d0"/><stop offset="1" stop-color="#b8b8b8"/></linearGradient>
<rect x="1525.8" y="717.8" width="39.4" height="22.5" fill="url(#cv)"/>
<path d="M1526.3 717.8L1526.3 740.3" stroke="#c9a21a" stroke-width="1" fill="none"/>
<rect x="1561.9" y="717.8" width="5" height="1.4" fill="#d8d8d8"/>
<rect x="1561.9" y="739" width="5" height="1.4" fill="#d8d8d8"/>
<rect x="1561.9" y="728.6" width="5" height="1.1" fill="#d8d8d8"/>
<path d="M1522.4 743.7L1605.8 743.7" stroke="#8c8c8c" stroke-width="1.5" fill="none"/>
<rect x="1532.3" y="528.2" width="8.4" height="5.9" fill="#3f8fd6"/>
<rect x="1532.3" y="535.4" width="8.4" height="5.9" fill="#3f8fd6"/>
<rect x="1532.3" y="542.5" width="8.4" height="5.9" fill="#3f8fd6"/>
<rect x="1532.3" y="549.7" width="8.4" height="5.9" fill="#3f8fd6"/>
<rect x="1532.3" y="556.8" width="8.4" height="5.9" fill="#3f8fd6"/>
<rect x="1541.9" y="528.2" width="8.4" height="5.9" fill="#3f8fd6"/>
<rect x="1541.9" y="535.4" width="8.4" height="5.9" fill="#3f8fd6"/>
<rect x="1561.2" y="528.2" width="8.4" height="5.9" fill="#3f8fd6"/>
<rect x="1561.2" y="535.4" width="8.4" height="5.9" fill="#3f8fd6"/>
<rect x="1561.2" y="542.5" width="8.4" height="5.9" fill="#3f8fd6"/>
<rect x="1561.2" y="549.7" width="8.4" height="5.9" fill="#3f8fd6"/>
<rect x="1570.8" y="528.2" width="8.4" height="5.9" fill="#3f8fd6"/>
<rect x="1570.8" y="535.4" width="8.4" height="5.9" fill="#3f8fd6"/>
<rect x="1570.8" y="542.5" width="8.4" height="5.9" fill="#3f8fd6"/>
<rect x="1570.8" y="549.7" width="8.4" height="5.9" fill="#3f8fd6"/>
<rect x="1580.4" y="528.2" width="8.4" height="5.9" fill="#3f8fd6"/>
<rect x="1580.4" y="535.4" width="8.4" height="5.9" fill="#3f8fd6"/>
<rect x="1580.4" y="542.5" width="8.4" height="5.9" fill="#3f8fd6"/>
<rect x="1580.4" y="549.7" width="8.4" height="5.9" fill="#3f8fd6"/>
<rect x="1580.4" y="556.8" width="8.4" height="5.9" fill="#3f8fd6"/>
<rect x="1590" y="528.2" width="8.4" height="5.9" fill="#3f8fd6"/>
<rect x="1590" y="535.4" width="8.4" height="5.9" fill="#3f8fd6"/>
<rect x="1590" y="542.5" width="8.4" height="5.9" fill="#3f8fd6"/>
<rect x="1590" y="549.7" width="8.4" height="5.9" fill="#3f8fd6"/>
<rect x="1599.7" y="528.2" width="8.4" height="5.9" fill="#3f8fd6"/>
<rect x="1599.7" y="535.4" width="8.4" height="5.9" fill="#3f8fd6"/>
<rect x="1599.7" y="542.5" width="8.4" height="5.9" fill="#3f8fd6"/>
<rect x="1599.7" y="549.7" width="8.4" height="5.9" fill="#3f8fd6"/>
<rect x="1599.7" y="556.8" width="8.4" height="5.9" fill="#3f8fd6"/>
<rect x="1599.7" y="564" width="8.4" height="5.9" fill="#3f8fd6"/>
<rect x="1609.3" y="528.2" width="8.4" height="5.9" fill="#3f8fd6"/>
<rect x="1609.3" y="535.4" width="8.4" height="5.9" fill="#3f8fd6"/>
<rect x="1609.3" y="542.5" width="8.4" height="5.9" fill="#3f8fd6"/>
<rect x="1609.3" y="549.7" width="8.4" height="5.9" fill="#3f8fd6"/>
<rect x="1609.3" y="556.8" width="8.4" height="5.9" fill="#3f8fd6"/>
<rect x="1609.3" y="564" width="8.4" height="5.9" fill="#3f8fd6"/>
<rect x="1638.1" y="528.2" width="8.4" height="5.9" fill="#3f8fd6"/>
<rect x="1638.1" y="535.4" width="8.4" height="5.9" fill="#3f8fd6"/>
<rect x="1638.1" y="542.5" width="8.4" height="5.9" fill="#3f8fd6"/>
<rect x="1638.1" y="549.7" width="8.4" height="5.9" fill="#3f8fd6"/>
<rect x="1647.7" y="528.2" width="8.4" height="5.9" fill="#3f8fd6"/>
<rect x="1647.7" y="535.4" width="8.4" height="5.9" fill="#3f8fd6"/>
<rect x="1647.7" y="542.5" width="8.4" height="5.9" fill="#3f8fd6"/>
<rect x="1647.7" y="549.7" width="8.4" height="5.9" fill="#3f8fd6"/>
<rect x="1647.7" y="556.8" width="8.4" height="5.9" fill="#3f8fd6"/>
<rect x="1647.7" y="564" width="8.4" height="5.9" fill="#3f8fd6"/>
<rect x="1667" y="528.2" width="8.4" height="5.9" fill="#3f8fd6"/>
<rect x="1667" y="535.4" width="8.4" height="5.9" fill="#3f8fd6"/>
<rect x="1667" y="542.5" width="8.4" height="5.9" fill="#3f8fd6"/>
<rect x="1676.6" y="528.2" width="8.4" height="5.9" fill="#3f8fd6"/>
<rect x="1676.6" y="535.4" width="8.4" height="5.9" fill="#3f8fd6"/>
<rect x="1676.6" y="542.5" width="8.4" height="5.9" fill="#3f8fd6"/>
<rect x="1676.6" y="549.7" width="8.4" height="5.9" fill="#3f8fd6"/>
<rect x="1686.2" y="528.2" width="8.4" height="5.9" fill="#3f8fd6"/>
<rect x="1686.2" y="535.4" width="8.4" height="5.9" fill="#3f8fd6"/>
<rect x="1686.2" y="542.5" width="8.4" height="5.9" fill="#3f8fd6"/>
<rect x="1686.2" y="549.7" width="8.4" height="5.9" fill="#3f8fd6"/>
<rect x="1695.8" y="528.2" width="8.4" height="5.9" fill="#3f8fd6"/>
<rect x="1695.8" y="535.4" width="8.4" height="5.9" fill="#3f8fd6"/>
<rect x="1695.8" y="542.5" width="8.4" height="5.9" fill="#3f8fd6"/>
<rect x="1695.8" y="549.7" width="8.4" height="5.9" fill="#3f8fd6"/>
<rect x="1695.8" y="556.8" width="8.4" height="5.9" fill="#3f8fd6"/>
<rect x="1705.4" y="528.2" width="8.4" height="5.9" fill="#3f8fd6"/>
<rect x="1705.4" y="535.4" width="8.4" height="5.9" fill="#3f8fd6"/>
<rect x="1705.4" y="542.5" width="8.4" height="5.9" fill="#3f8fd6"/>
<rect x="1705.4" y="549.7" width="8.4" height="5.9" fill="#3f8fd6"/>
<rect x="1705.4" y="556.8" width="8.4" height="5.9" fill="#3f8fd6"/>
<rect x="1715.1" y="528.2" width="8.4" height="5.9" fill="#3f8fd6"/>
<rect x="1715.1" y="535.4" width="8.4" height="5.9" fill="#3f8fd6"/>
<rect x="1715.1" y="542.5" width="8.4" height="5.9" fill="#3f8fd6"/>
<rect x="1715.1" y="549.7" width="8.4" height="5.9" fill="#3f8fd6"/>
<rect x="1724.7" y="528.2" width="8.4" height="5.9" fill="#3f8fd6"/>
<rect x="1724.7" y="535.4" width="8.4" height="5.9" fill="#3f8fd6"/>
<rect x="1724.7" y="542.5" width="8.4" height="5.9" fill="#3f8fd6"/>
<rect x="1724.7" y="549.7" width="8.4" height="5.9" fill="#3f8fd6"/>
<rect x="1724.7" y="556.8" width="8.4" height="5.9" fill="#3f8fd6"/>
<rect x="1734.3" y="528.2" width="8.4" height="5.9" fill="#3f8fd6"/>
<rect x="1734.3" y="535.4" width="8.4" height="5.9" fill="#3f8fd6"/>
<rect x="1734.3" y="542.5" width="8.4" height="5.9" fill="#3f8fd6"/>
<rect x="1734.3" y="549.7" width="8.4" height="5.9" fill="#3f8fd6"/>
<rect x="1734.3" y="556.8" width="8.4" height="5.9" fill="#3f8fd6"/>
<rect x="1743.9" y="528.2" width="8.4" height="5.9" fill="#3f8fd6"/>
<rect x="1743.9" y="535.4" width="8.4" height="5.9" fill="#3f8fd6"/>
<rect x="1743.9" y="542.5" width="8.4" height="5.9" fill="#3f8fd6"/>
<rect x="1743.9" y="549.7" width="8.4" height="5.9" fill="#3f8fd6"/>
<rect x="1743.9" y="556.8" width="8.4" height="5.9" fill="#3f8fd6"/>
<rect x="1743.9" y="564" width="8.4" height="5.9" fill="#3f8fd6"/>
<path d="M1531.1 535.3L1752.7 535.3" stroke="#c9c9c9" stroke-width="1.1" fill="none"/>
<rect x="1532.3" y="592.2" width="8.4" height="5.9" fill="#3f8fd6"/>
<rect x="1532.3" y="599.3" width="8.4" height="5.9" fill="#3f8fd6"/>
<rect x="1532.3" y="606.5" width="8.4" height="5.9" fill="#3f8fd6"/>
<rect x="1532.3" y="613.6" width="8.4" height="5.9" fill="#3f8fd6"/>
<rect x="1532.3" y="620.8" width="8.4" height="5.9" fill="#3f8fd6"/>
<rect x="1532.3" y="627.9" width="8.4" height="5.9" fill="#3f8fd6"/>
<rect x="1541.9" y="592.2" width="8.4" height="5.9" fill="#3f8fd6"/>
<rect x="1541.9" y="599.3" width="8.4" height="5.9" fill="#3f8fd6"/>
<rect x="1541.9" y="606.5" width="8.4" height="5.9" fill="#3f8fd6"/>
<rect x="1541.9" y="613.6" width="8.4" height="5.9" fill="#3f8fd6"/>
<rect x="1541.9" y="620.8" width="8.4" height="5.9" fill="#3f8fd6"/>
<rect x="1541.9" y="627.9" width="8.4" height="5.9" fill="#3f8fd6"/>
<rect x="1551.6" y="592.2" width="8.4" height="5.9" fill="#3f8fd6"/>
<rect x="1551.6" y="599.3" width="8.4" height="5.9" fill="#3f8fd6"/>
<rect x="1551.6" y="606.5" width="8.4" height="5.9" fill="#3f8fd6"/>
<rect x="1551.6" y="613.6" width="8.4" height="5.9" fill="#3f8fd6"/>
<rect x="1551.6" y="620.8" width="8.4" height="5.9" fill="#3f8fd6"/>
<rect x="1561.2" y="592.2" width="8.4" height="5.9" fill="#3f8fd6"/>
<rect x="1561.2" y="599.3" width="8.4" height="5.9" fill="#3f8fd6"/>
<rect x="1561.2" y="606.5" width="8.4" height="5.9" fill="#3f8fd6"/>
<rect x="1570.8" y="592.2" width="8.4" height="5.9" fill="#3f8fd6"/>
<rect x="1570.8" y="599.3" width="8.4" height="5.9" fill="#3f8fd6"/>
<rect x="1570.8" y="606.5" width="8.4" height="5.9" fill="#3f8fd6"/>
<rect x="1570.8" y="613.6" width="8.4" height="5.9" fill="#3f8fd6"/>
<rect x="1570.8" y="620.8" width="8.4" height="5.9" fill="#3f8fd6"/>
<rect x="1570.8" y="627.9" width="8.4" height="5.9" fill="#3f8fd6"/>
<rect x="1580.4" y="592.2" width="8.4" height="5.9" fill="#3f8fd6"/>
<rect x="1580.4" y="599.3" width="8.4" height="5.9" fill="#3f8fd6"/>
<rect x="1580.4" y="606.5" width="8.4" height="5.9" fill="#3f8fd6"/>
<rect x="1580.4" y="613.6" width="8.4" height="5.9" fill="#3f8fd6"/>
<rect x="1580.4" y="620.8" width="8.4" height="5.9" fill="#3f8fd6"/>
<rect x="1580.4" y="627.9" width="8.4" height="5.9" fill="#3f8fd6"/>
<rect x="1590" y="592.2" width="8.4" height="5.9" fill="#3a7a2c"/>
<rect x="1590" y="599.3" width="8.4" height="5.9" fill="#3a7a2c"/>
<rect x="1590" y="606.5" width="8.4" height="5.9" fill="#3a7a2c"/>
<rect x="1590" y="613.6" width="8.4" height="5.9" fill="#3a7a2c"/>
<rect x="1590" y="620.8" width="8.4" height="5.9" fill="#3a7a2c"/>
<rect x="1599.7" y="592.2" width="8.4" height="5.9" fill="#3a7a2c"/>
<rect x="1599.7" y="599.3" width="8.4" height="5.9" fill="#3a7a2c"/>
<rect x="1599.7" y="606.5" width="8.4" height="5.9" fill="#3a7a2c"/>
<rect x="1599.7" y="613.6" width="8.4" height="5.9" fill="#3a7a2c"/>
<rect x="1599.7" y="620.8" width="8.4" height="5.9" fill="#3a7a2c"/>
<rect x="1609.3" y="592.2" width="8.4" height="5.9" fill="#3a7a2c"/>
<rect x="1609.3" y="599.3" width="8.4" height="5.9" fill="#3a7a2c"/>
<rect x="1609.3" y="606.5" width="8.4" height="5.9" fill="#3a7a2c"/>
<rect x="1609.3" y="613.6" width="8.4" height="5.9" fill="#3a7a2c"/>
<rect x="1609.3" y="620.8" width="8.4" height="5.9" fill="#3a7a2c"/>
<rect x="1618.9" y="592.2" width="8.4" height="5.9" fill="#3a7a2c"/>
<rect x="1618.9" y="599.3" width="8.4" height="5.9" fill="#3a7a2c"/>
<rect x="1618.9" y="606.5" width="8.4" height="5.9" fill="#3a7a2c"/>
<rect x="1618.9" y="613.6" width="8.4" height="5.9" fill="#3a7a2c"/>
<rect x="1618.9" y="620.8" width="8.4" height="5.9" fill="#3a7a2c"/>
<rect x="1618.9" y="627.9" width="8.4" height="5.9" fill="#3a7a2c"/>
<rect x="1628.5" y="592.2" width="8.4" height="5.9" fill="#3a7a2c"/>
<rect x="1628.5" y="599.3" width="8.4" height="5.9" fill="#3a7a2c"/>
<rect x="1628.5" y="606.5" width="8.4" height="5.9" fill="#3a7a2c"/>
<rect x="1628.5" y="613.6" width="8.4" height="5.9" fill="#3a7a2c"/>
<rect x="1628.5" y="620.8" width="8.4" height="5.9" fill="#3a7a2c"/>
<rect x="1628.5" y="627.9" width="8.4" height="5.9" fill="#3a7a2c"/>
<rect x="1638.1" y="592.2" width="8.4" height="5.9" fill="#3f8fd6"/>
<rect x="1638.1" y="599.3" width="8.4" height="5.9" fill="#3f8fd6"/>
<rect x="1638.1" y="606.5" width="8.4" height="5.9" fill="#3f8fd6"/>
<rect x="1638.1" y="613.6" width="8.4" height="5.9" fill="#3f8fd6"/>
<rect x="1647.7" y="592.2" width="8.4" height="5.9" fill="#3f8fd6"/>
<rect x="1647.7" y="599.3" width="8.4" height="5.9" fill="#3f8fd6"/>
<rect x="1647.7" y="606.5" width="8.4" height="5.9" fill="#3f8fd6"/>
<rect x="1657.4" y="592.2" width="8.4" height="5.9" fill="#3f8fd6"/>
<rect x="1657.4" y="599.3" width="8.4" height="5.9" fill="#3f8fd6"/>
<rect x="1657.4" y="606.5" width="8.4" height="5.9" fill="#3f8fd6"/>
<rect x="1657.4" y="613.6" width="8.4" height="5.9" fill="#3f8fd6"/>
<rect x="1657.4" y="620.8" width="8.4" height="5.9" fill="#3f8fd6"/>
<rect x="1657.4" y="627.9" width="8.4" height="5.9" fill="#3f8fd6"/>
<rect x="1667" y="592.2" width="8.4" height="5.9" fill="#3f8fd6"/>
<rect x="1667" y="599.3" width="8.4" height="5.9" fill="#3f8fd6"/>
<rect x="1667" y="606.5" width="8.4" height="5.9" fill="#3f8fd6"/>
<rect x="1667" y="613.6" width="8.4" height="5.9" fill="#3f8fd6"/>
<rect x="1667" y="620.8" width="8.4" height="5.9" fill="#3f8fd6"/>
<rect x="1667" y="627.9" width="8.4" height="5.9" fill="#3f8fd6"/>
<rect x="1676.6" y="592.2" width="8.4" height="5.9" fill="#3f8fd6"/>
<rect x="1676.6" y="599.3" width="8.4" height="5.9" fill="#3f8fd6"/>
<rect x="1676.6" y="606.5" width="8.4" height="5.9" fill="#3f8fd6"/>
<rect x="1676.6" y="613.6" width="8.4" height="5.9" fill="#3f8fd6"/>
<rect x="1686.2" y="592.2" width="8.4" height="5.9" fill="#3f8fd6"/>
<rect x="1686.2" y="599.3" width="8.4" height="5.9" fill="#3f8fd6"/>
<rect x="1686.2" y="606.5" width="8.4" height="5.9" fill="#3f8fd6"/>
<rect x="1686.2" y="613.6" width="8.4" height="5.9" fill="#3f8fd6"/>
<rect x="1695.8" y="592.2" width="8.4" height="5.9" fill="#3f8fd6"/>
<rect x="1695.8" y="599.3" width="8.4" height="5.9" fill="#3f8fd6"/>
<rect x="1695.8" y="606.5" width="8.4" height="5.9" fill="#3f8fd6"/>
<rect x="1695.8" y="613.6" width="8.4" height="5.9" fill="#3f8fd6"/>
<rect x="1695.8" y="620.8" width="8.4" height="5.9" fill="#3f8fd6"/>
<rect x="1695.8" y="627.9" width="8.4" height="5.9" fill="#3f8fd6"/>
<rect x="1705.4" y="592.2" width="8.4" height="5.9" fill="#3f8fd6"/>
<rect x="1705.4" y="599.3" width="8.4" height="5.9" fill="#3f8fd6"/>
<rect x="1705.4" y="606.5" width="8.4" height="5.9" fill="#3f8fd6"/>
<rect x="1705.4" y="613.6" width="8.4" height="5.9" fill="#3f8fd6"/>
<rect x="1715.1" y="592.2" width="8.4" height="5.9" fill="#3f8fd6"/>
<rect x="1715.1" y="599.3" width="8.4" height="5.9" fill="#3f8fd6"/>
<rect x="1715.1" y="606.5" width="8.4" height="5.9" fill="#3f8fd6"/>
<rect x="1715.1" y="613.6" width="8.4" height="5.9" fill="#3f8fd6"/>
<rect x="1724.7" y="592.2" width="8.4" height="5.9" fill="#3f8fd6"/>
<rect x="1724.7" y="599.3" width="8.4" height="5.9" fill="#3f8fd6"/>
<rect x="1724.7" y="606.5" width="8.4" height="5.9" fill="#3f8fd6"/>
<rect x="1734.3" y="592.2" width="8.4" height="5.9" fill="#3f8fd6"/>
<rect x="1734.3" y="599.3" width="8.4" height="5.9" fill="#3f8fd6"/>
<rect x="1734.3" y="606.5" width="8.4" height="5.9" fill="#3f8fd6"/>
<rect x="1743.9" y="592.2" width="8.4" height="5.9" fill="#3f8fd6"/>
<rect x="1743.9" y="599.3" width="8.4" height="5.9" fill="#3f8fd6"/>
<rect x="1743.9" y="606.5" width="8.4" height="5.9" fill="#3f8fd6"/>
<rect x="1743.9" y="613.6" width="8.4" height="5.9" fill="#3f8fd6"/>
<rect x="1743.9" y="620.8" width="8.4" height="5.9" fill="#3f8fd6"/>
<path d="M1531.1 599.3L1752.7 599.3" stroke="#c9c9c9" stroke-width="1.1" fill="none"/>
<rect x="1532.3" y="665.3" width="8.4" height="5.9" fill="#3f8fd6"/>
<rect x="1532.3" y="672.4" width="8.4" height="5.9" fill="#3f8fd6"/>
<rect x="1532.3" y="679.6" width="8.4" height="5.9" fill="#3f8fd6"/>
<rect x="1532.3" y="686.7" width="8.4" height="5.9" fill="#3f8fd6"/>
<rect x="1541.9" y="665.3" width="8.4" height="5.9" fill="#3f8fd6"/>
<rect x="1541.9" y="672.4" width="8.4" height="5.9" fill="#3f8fd6"/>
<rect x="1541.9" y="679.6" width="8.4" height="5.9" fill="#3f8fd6"/>
<rect x="1541.9" y="686.7" width="8.4" height="5.9" fill="#3f8fd6"/>
<rect x="1551.6" y="665.3" width="8.4" height="5.9" fill="#3f8fd6"/>
<rect x="1551.6" y="672.4" width="8.4" height="5.9" fill="#3f8fd6"/>
<rect x="1551.6" y="679.6" width="8.4" height="5.9" fill="#3f8fd6"/>
<rect x="1561.2" y="665.3" width="8.4" height="5.9" fill="#3f8fd6"/>
<rect x="1561.2" y="672.4" width="8.4" height="5.9" fill="#3f8fd6"/>
<rect x="1561.2" y="679.6" width="8.4" height="5.9" fill="#3f8fd6"/>
<rect x="1570.8" y="665.3" width="8.4" height="5.9" fill="#3f8fd6"/>
<rect x="1570.8" y="672.4" width="8.4" height="5.9" fill="#3f8fd6"/>
<rect x="1570.8" y="679.6" width="8.4" height="5.9" fill="#3f8fd6"/>
<rect x="1570.8" y="686.7" width="8.4" height="5.9" fill="#3f8fd6"/>
<rect x="1580.4" y="665.3" width="8.4" height="5.9" fill="#3f8fd6"/>
<rect x="1580.4" y="672.4" width="8.4" height="5.9" fill="#3f8fd6"/>
<rect x="1580.4" y="679.6" width="8.4" height="5.9" fill="#3f8fd6"/>
<rect x="1590" y="665.3" width="8.4" height="5.9" fill="#3f8fd6"/>
<rect x="1590" y="672.4" width="8.4" height="5.9" fill="#3f8fd6"/>
<rect x="1590" y="679.6" width="8.4" height="5.9" fill="#3f8fd6"/>
<rect x="1599.7" y="665.3" width="8.4" height="5.9" fill="#3f8fd6"/>
<rect x="1599.7" y="672.4" width="8.4" height="5.9" fill="#3f8fd6"/>
<rect x="1599.7" y="679.6" width="8.4" height="5.9" fill="#3f8fd6"/>
<rect x="1599.7" y="686.7" width="8.4" height="5.9" fill="#3f8fd6"/>
<rect x="1609.3" y="665.3" width="8.4" height="5.9" fill="#3f8fd6"/>
<rect x="1609.3" y="672.4" width="8.4" height="5.9" fill="#3f8fd6"/>
<rect x="1609.3" y="679.6" width="8.4" height="5.9" fill="#3f8fd6"/>
<rect x="1609.3" y="686.7" width="8.4" height="5.9" fill="#3f8fd6"/>
<rect x="1618.9" y="665.3" width="8.4" height="5.9" fill="#3f8fd6"/>
<rect x="1618.9" y="672.4" width="8.4" height="5.9" fill="#3f8fd6"/>
<rect x="1618.9" y="679.6" width="8.4" height="5.9" fill="#3f8fd6"/>
<rect x="1618.9" y="686.7" width="8.4" height="5.9" fill="#3f8fd6"/>
<rect x="1628.5" y="665.3" width="8.4" height="5.9" fill="#3f8fd6"/>
<rect x="1628.5" y="672.4" width="8.4" height="5.9" fill="#3f8fd6"/>
<rect x="1628.5" y="679.6" width="8.4" height="5.9" fill="#3f8fd6"/>
<rect x="1638.1" y="665.3" width="8.4" height="5.9" fill="#3f8fd6"/>
<rect x="1638.1" y="672.4" width="8.4" height="5.9" fill="#3f8fd6"/>
<rect x="1638.1" y="679.6" width="8.4" height="5.9" fill="#3f8fd6"/>
<rect x="1638.1" y="686.7" width="8.4" height="5.9" fill="#3f8fd6"/>
<rect x="1647.7" y="665.3" width="8.4" height="5.9" fill="#3f8fd6"/>
<rect x="1647.7" y="672.4" width="8.4" height="5.9" fill="#3f8fd6"/>
<rect x="1647.7" y="679.6" width="8.4" height="5.9" fill="#3f8fd6"/>
<rect x="1657.4" y="665.3" width="8.4" height="5.9" fill="#3f8fd6"/>
<rect x="1657.4" y="672.4" width="8.4" height="5.9" fill="#3f8fd6"/>
<rect x="1657.4" y="679.6" width="8.4" height="5.9" fill="#3f8fd6"/>
<rect x="1667" y="665.3" width="8.4" height="5.9" fill="#3f8fd6"/>
<rect x="1667" y="672.4" width="8.4" height="5.9" fill="#3f8fd6"/>
<rect x="1667" y="679.6" width="8.4" height="5.9" fill="#3f8fd6"/>
<rect x="1667" y="686.7" width="8.4" height="5.9" fill="#3f8fd6"/>
<rect x="1676.6" y="665.3" width="8.4" height="5.9" fill="#3f8fd6"/>
<rect x="1676.6" y="672.4" width="8.4" height="5.9" fill="#3f8fd6"/>
<rect x="1676.6" y="679.6" width="8.4" height="5.9" fill="#3f8fd6"/>
<rect x="1676.6" y="686.7" width="8.4" height="5.9" fill="#3f8fd6"/>
<rect x="1686.2" y="665.3" width="8.4" height="5.9" fill="#3f8fd6"/>
<rect x="1686.2" y="672.4" width="8.4" height="5.9" fill="#3f8fd6"/>
<rect x="1686.2" y="679.6" width="8.4" height="5.9" fill="#3f8fd6"/>
<rect x="1695.8" y="665.3" width="8.4" height="5.9" fill="#3f8fd6"/>
<rect x="1695.8" y="672.4" width="8.4" height="5.9" fill="#3f8fd6"/>
<rect x="1695.8" y="679.6" width="8.4" height="5.9" fill="#3f8fd6"/>
<rect x="1695.8" y="686.7" width="8.4" height="5.9" fill="#3f8fd6"/>
<rect x="1695.8" y="693.9" width="8.4" height="5.9" fill="#3f8fd6"/>
<rect x="1695.8" y="701" width="8.4" height="5.9" fill="#3f8fd6"/>
<rect x="1705.4" y="665.3" width="8.4" height="5.9" fill="#3f8fd6"/>
<rect x="1705.4" y="672.4" width="8.4" height="5.9" fill="#3f8fd6"/>
<rect x="1705.4" y="679.6" width="8.4" height="5.9" fill="#3f8fd6"/>
<rect x="1705.4" y="686.7" width="8.4" height="5.9" fill="#3f8fd6"/>
<rect x="1705.4" y="693.9" width="8.4" height="5.9" fill="#3f8fd6"/>
<rect x="1715.1" y="665.3" width="8.4" height="5.9" fill="#3f8fd6"/>
<rect x="1715.1" y="672.4" width="8.4" height="5.9" fill="#3f8fd6"/>
<rect x="1715.1" y="679.6" width="8.4" height="5.9" fill="#3f8fd6"/>
<rect x="1715.1" y="686.7" width="8.4" height="5.9" fill="#3f8fd6"/>
<rect x="1724.7" y="665.3" width="8.4" height="5.9" fill="#3f8fd6"/>
<rect x="1724.7" y="672.4" width="8.4" height="5.9" fill="#3f8fd6"/>
<rect x="1724.7" y="679.6" width="8.4" height="5.9" fill="#3f8fd6"/>
<rect x="1724.7" y="686.7" width="8.4" height="5.9" fill="#3f8fd6"/>
<rect x="1724.7" y="693.9" width="8.4" height="5.9" fill="#3f8fd6"/>
<rect x="1724.7" y="701" width="8.4" height="5.9" fill="#3f8fd6"/>
<rect x="1734.3" y="665.3" width="8.4" height="5.9" fill="#3f8fd6"/>
<rect x="1734.3" y="672.4" width="8.4" height="5.9" fill="#3f8fd6"/>
<rect x="1734.3" y="679.6" width="8.4" height="5.9" fill="#3f8fd6"/>
<rect x="1734.3" y="686.7" width="8.4" height="5.9" fill="#3f8fd6"/>
<rect x="1734.3" y="693.9" width="8.4" height="5.9" fill="#3f8fd6"/>
<rect x="1743.9" y="665.3" width="8.4" height="5.9" fill="#3f8fd6"/>
<rect x="1743.9" y="672.4" width="8.4" height="5.9" fill="#3f8fd6"/>
<rect x="1743.9" y="679.6" width="8.4" height="5.9" fill="#3f8fd6"/>
<rect x="1743.9" y="686.7" width="8.4" height="5.9" fill="#3f8fd6"/>
<rect x="1743.9" y="693.9" width="8.4" height="5.9" fill="#3f8fd6"/>
<rect x="1743.9" y="701" width="8.4" height="5.9" fill="#3f8fd6"/>
<path d="M1531.1 672.3L1752.7 672.3" stroke="#c9c9c9" stroke-width="1.1" fill="none"/>
<path d="M1525.9 527.5L1525.9 711.2" stroke="#bc9b29" stroke-width="0.9" fill="none"/>
<path d="M1753.7 527.5L1753.7 741.6" stroke="#bc9b29" stroke-width="0.9" fill="none"/>
<rect x="1796.4" y="584.8" width="11.5" height="16.9" fill="#fdfdfd"/>
<rect x="1809.5" y="584.8" width="11.5" height="16.9" fill="#fdfdfd"/>
<rect x="1822.3" y="584.8" width="11.5" height="16.9" fill="#fdfdfd"/>
<rect x="1834.7" y="584.8" width="11.5" height="16.9" fill="#fdfdfd"/>
<rect x="1847.3" y="584.8" width="11.5" height="16.9" fill="#fdfdfd"/>
<rect x="1809.5" y="603.3" width="11.5" height="17.1" fill="#fdfdfd"/>
<rect x="1822.3" y="603.3" width="11.5" height="17.1" fill="#fdfdfd"/>
<rect x="1834.7" y="603.3" width="11.5" height="17.1" fill="#fdfdfd"/>
<rect x="1847.3" y="603.3" width="11.5" height="17.1" fill="#fdfdfd"/>
<rect x="1783.5" y="624.9" width="11.5" height="16.9" fill="#fdfdfd"/>
<rect x="1796.4" y="624.9" width="11.5" height="16.9" fill="#fdfdfd"/>
<rect x="1809.5" y="624.9" width="11.5" height="16.9" fill="#fdfdfd"/>
<rect x="1822.3" y="624.9" width="11.5" height="16.9" fill="#fdfdfd"/>
<rect x="1834.7" y="624.9" width="11.5" height="16.9" fill="#fdfdfd"/>
<rect x="1847.3" y="624.9" width="11.5" height="16.9" fill="#fdfdfd"/>
<rect x="1834.7" y="642.9" width="11.5" height="17.4" fill="#fdfdfd"/>
<rect x="1847.3" y="642.9" width="11.5" height="17.4" fill="#fdfdfd"/>
<rect x="1809.5" y="663.7" width="11.5" height="16.9" fill="#fdfdfd"/>
<rect x="1822.3" y="663.7" width="11.5" height="16.9" fill="#fdfdfd"/>
<rect x="1834.7" y="663.7" width="11.5" height="16.9" fill="#fdfdfd"/>
<rect x="1847.3" y="663.7" width="11.5" height="16.9" fill="#fdfdfd"/>
<rect x="1796.4" y="682.2" width="11.5" height="17.1" fill="#fdfdfd"/>
<rect x="1809.5" y="682.2" width="11.5" height="17.1" fill="#fdfdfd"/>
<rect x="1822.3" y="682.2" width="11.5" height="17.1" fill="#fdfdfd"/>
<rect x="1834.7" y="682.2" width="11.5" height="17.1" fill="#fdfdfd"/>
<rect x="1847.3" y="682.2" width="11.5" height="17.1" fill="#fdfdfd"/>
<rect x="1933" y="587.5" width="11.3" height="17.1" fill="#fdfdfd"/>
<rect x="1945.4" y="587.5" width="11.3" height="17.1" fill="#fdfdfd"/>
<rect x="1957.8" y="587.5" width="11.3" height="17.1" fill="#fdfdfd"/>
<rect x="1969.9" y="587.5" width="11.3" height="17.1" fill="#fdfdfd"/>
<rect x="1920.6" y="606.2" width="11.3" height="16.9" fill="#fdfdfd"/>
<rect x="1933" y="606.2" width="11.3" height="16.9" fill="#fdfdfd"/>
<rect x="1945.4" y="606.2" width="11.3" height="16.9" fill="#fdfdfd"/>
<rect x="1957.8" y="606.2" width="11.3" height="16.9" fill="#fdfdfd"/>
<rect x="1969.9" y="606.2" width="11.3" height="16.9" fill="#fdfdfd"/>
<rect x="1945.4" y="625.8" width="11.3" height="17.1" fill="#fdfdfd"/>
<rect x="1957.8" y="625.8" width="11.3" height="17.1" fill="#fdfdfd"/>
<rect x="1969.9" y="625.8" width="11.3" height="17.1" fill="#fdfdfd"/>
<rect x="1908.6" y="644.5" width="11.3" height="16.9" fill="#fdfdfd"/>
<rect x="1920.6" y="644.5" width="11.3" height="16.9" fill="#fdfdfd"/>
<rect x="1933" y="644.5" width="11.3" height="16.9" fill="#fdfdfd"/>
<rect x="1945.4" y="644.5" width="11.3" height="16.9" fill="#fdfdfd"/>
<rect x="1957.8" y="644.5" width="11.3" height="16.9" fill="#fdfdfd"/>
<rect x="1969.9" y="644.5" width="11.3" height="16.9" fill="#fdfdfd"/>
<rect x="1920.6" y="663.7" width="11.3" height="16.9" fill="#fdfdfd"/>
<rect x="1933" y="663.7" width="11.3" height="16.9" fill="#fdfdfd"/>
<rect x="1945.4" y="663.7" width="11.3" height="16.9" fill="#fdfdfd"/>
<rect x="1957.8" y="663.7" width="11.3" height="16.9" fill="#fdfdfd"/>
<rect x="1969.9" y="663.7" width="11.3" height="16.9" fill="#fdfdfd"/>
<rect x="1933" y="682.2" width="11.3" height="17.1" fill="#fdfdfd"/>
<rect x="1945.4" y="682.2" width="11.3" height="17.1" fill="#fdfdfd"/>
<rect x="1957.8" y="682.2" width="11.3" height="17.1" fill="#fdfdfd"/>
<rect x="1969.9" y="682.2" width="11.3" height="17.1" fill="#fdfdfd"/>
<rect x="1825.9" y="533" width="32" height="14" fill="none" stroke="#c4c4c4" stroke-width="1"/>
<path d="M1831.2 533L1831.2 546.9" stroke="#c4c4c4" stroke-width="0.7" fill="none"/>
<path d="M1836.6 533L1836.6 546.9" stroke="#c4c4c4" stroke-width="0.7" fill="none"/>
<path d="M1841.9 533L1841.9 546.9" stroke="#c4c4c4" stroke-width="0.7" fill="none"/>
<path d="M1847.2 533L1847.2 546.9" stroke="#c4c4c4" stroke-width="0.7" fill="none"/>
<path d="M1852.5 533L1852.5 546.9" stroke="#c4c4c4" stroke-width="0.7" fill="none"/>
<path d="M1825.9 535.2L1857.9 535.2" stroke="#bdbdbd" stroke-width="0.7" fill="none"/>
<path d="M1825.9 544.2L1857.9 544.2" stroke="#bdbdbd" stroke-width="0.7" fill="none"/>
<path d="M1837.7 536.3L1837.7 543.8" stroke="#4caf50" stroke-width="0.8" fill="none"/>
<path d="M1848.3 536.3L1848.3 543.8" stroke="#4caf50" stroke-width="0.8" fill="none"/>
<rect x="1788.7" y="549.9" width="32" height="14" fill="none" stroke="#c4c4c4" stroke-width="1"/>
<path d="M1794.1 549.9L1794.1 563.8" stroke="#c4c4c4" stroke-width="0.7" fill="none"/>
<path d="M1799.4 549.9L1799.4 563.8" stroke="#c4c4c4" stroke-width="0.7" fill="none"/>
<path d="M1804.7 549.9L1804.7 563.8" stroke="#c4c4c4" stroke-width="0.7" fill="none"/>
<path d="M1810 549.9L1810 563.8" stroke="#c4c4c4" stroke-width="0.7" fill="none"/>
<path d="M1815.3 549.9L1815.3 563.8" stroke="#c4c4c4" stroke-width="0.7" fill="none"/>
<path d="M1788.7 552.1L1820.7 552.1" stroke="#bdbdbd" stroke-width="0.7" fill="none"/>
<path d="M1788.7 561.1L1820.7 561.1" stroke="#bdbdbd" stroke-width="0.7" fill="none"/>
<path d="M1800.5 553.2L1800.5 560.7" stroke="#4caf50" stroke-width="0.8" fill="none"/>
<path d="M1811.1 553.2L1811.1 560.7" stroke="#4caf50" stroke-width="0.8" fill="none"/>
<rect x="1825.9" y="549.9" width="32" height="14" fill="none" stroke="#c4c4c4" stroke-width="1"/>
<path d="M1831.2 549.9L1831.2 563.8" stroke="#c4c4c4" stroke-width="0.7" fill="none"/>
<path d="M1836.6 549.9L1836.6 563.8" stroke="#c4c4c4" stroke-width="0.7" fill="none"/>
<path d="M1841.9 549.9L1841.9 563.8" stroke="#c4c4c4" stroke-width="0.7" fill="none"/>
<path d="M1847.2 549.9L1847.2 563.8" stroke="#c4c4c4" stroke-width="0.7" fill="none"/>
<path d="M1852.5 549.9L1852.5 563.8" stroke="#c4c4c4" stroke-width="0.7" fill="none"/>
<path d="M1825.9 552.1L1857.9 552.1" stroke="#bdbdbd" stroke-width="0.7" fill="none"/>
<path d="M1825.9 561.1L1857.9 561.1" stroke="#bdbdbd" stroke-width="0.7" fill="none"/>
<path d="M1837.7 553.2L1837.7 560.7" stroke="#4caf50" stroke-width="0.8" fill="none"/>
<path d="M1848.3 553.2L1848.3 560.7" stroke="#4caf50" stroke-width="0.8" fill="none"/>
<rect x="1788.7" y="567.2" width="32" height="14" fill="none" stroke="#c4c4c4" stroke-width="1"/>
<path d="M1794.1 567.2L1794.1 581.2" stroke="#c4c4c4" stroke-width="0.7" fill="none"/>
<path d="M1799.4 567.2L1799.4 581.2" stroke="#c4c4c4" stroke-width="0.7" fill="none"/>
<path d="M1804.7 567.2L1804.7 581.2" stroke="#c4c4c4" stroke-width="0.7" fill="none"/>
<path d="M1810 567.2L1810 581.2" stroke="#c4c4c4" stroke-width="0.7" fill="none"/>
<path d="M1815.3 567.2L1815.3 581.2" stroke="#c4c4c4" stroke-width="0.7" fill="none"/>
<path d="M1788.7 569.5L1820.7 569.5" stroke="#bdbdbd" stroke-width="0.7" fill="none"/>
<path d="M1788.7 578.5L1820.7 578.5" stroke="#bdbdbd" stroke-width="0.7" fill="none"/>
<path d="M1800.5 570.6L1800.5 578" stroke="#4caf50" stroke-width="0.8" fill="none"/>
<path d="M1811.1 570.6L1811.1 578" stroke="#4caf50" stroke-width="0.8" fill="none"/>
<rect x="1825.9" y="567.2" width="32" height="14" fill="none" stroke="#c4c4c4" stroke-width="1"/>
<path d="M1831.2 567.2L1831.2 581.2" stroke="#c4c4c4" stroke-width="0.7" fill="none"/>
<path d="M1836.6 567.2L1836.6 581.2" stroke="#c4c4c4" stroke-width="0.7" fill="none"/>
<path d="M1841.9 567.2L1841.9 581.2" stroke="#c4c4c4" stroke-width="0.7" fill="none"/>
<path d="M1847.2 567.2L1847.2 581.2" stroke="#c4c4c4" stroke-width="0.7" fill="none"/>
<path d="M1852.5 567.2L1852.5 581.2" stroke="#c4c4c4" stroke-width="0.7" fill="none"/>
<path d="M1825.9 569.5L1857.9 569.5" stroke="#bdbdbd" stroke-width="0.7" fill="none"/>
<path d="M1825.9 578.5L1857.9 578.5" stroke="#bdbdbd" stroke-width="0.7" fill="none"/>
<path d="M1837.7 570.6L1837.7 578" stroke="#4caf50" stroke-width="0.8" fill="none"/>
<path d="M1848.3 570.6L1848.3 578" stroke="#4caf50" stroke-width="0.8" fill="none"/>
<rect x="1951" y="533" width="31.1" height="13.5" fill="none" stroke="#c4c4c4" stroke-width="0.8"/>
<rect x="1952.8" y="534.5" width="27.5" height="4.5" fill="#b8701f"/>
<rect x="1951" y="539.7" width="31.1" height="6.3" fill="#fbfbf3"/>
<path d="M1958.3 534.5L1958.3 539" stroke="#d9a05a" stroke-width="0.6" fill="none"/>
<path d="M1963.8 534.5L1963.8 539" stroke="#d9a05a" stroke-width="0.6" fill="none"/>
<path d="M1969.3 534.5L1969.3 539" stroke="#d9a05a" stroke-width="0.6" fill="none"/>
<path d="M1974.8 534.5L1974.8 539" stroke="#d9a05a" stroke-width="0.6" fill="none"/>
<path d="M1951 546.5L1982.1 546.5" stroke="#7ec36a" stroke-width="0.6" fill="none"/>
<rect x="1951" y="549.9" width="31.1" height="13.5" fill="none" stroke="#c4c4c4" stroke-width="0.8"/>
<rect x="1952.8" y="551.4" width="27.5" height="4.5" fill="#b8701f"/>
<rect x="1951" y="556.6" width="31.1" height="6.3" fill="#fbfbf3"/>
<path d="M1958.3 551.4L1958.3 555.9" stroke="#d9a05a" stroke-width="0.6" fill="none"/>
<path d="M1963.8 551.4L1963.8 555.9" stroke="#d9a05a" stroke-width="0.6" fill="none"/>
<path d="M1969.3 551.4L1969.3 555.9" stroke="#d9a05a" stroke-width="0.6" fill="none"/>
<path d="M1974.8 551.4L1974.8 555.9" stroke="#d9a05a" stroke-width="0.6" fill="none"/>
<path d="M1951 563.4L1982.1 563.4" stroke="#7ec36a" stroke-width="0.6" fill="none"/>
<rect x="1915.4" y="567.2" width="31.1" height="13.5" fill="none" stroke="#c4c4c4" stroke-width="0.8"/>
<rect x="1917.2" y="568.8" width="27.5" height="4.5" fill="#b8701f"/>
<rect x="1915.4" y="574" width="31.1" height="6.3" fill="#fbfbf3"/>
<path d="M1922.7 568.8L1922.7 573.3" stroke="#d9a05a" stroke-width="0.6" fill="none"/>
<path d="M1928.2 568.8L1928.2 573.3" stroke="#d9a05a" stroke-width="0.6" fill="none"/>
<path d="M1933.7 568.8L1933.7 573.3" stroke="#d9a05a" stroke-width="0.6" fill="none"/>
<path d="M1939.2 568.8L1939.2 573.3" stroke="#d9a05a" stroke-width="0.6" fill="none"/>
<path d="M1915.4 580.7L1946.5 580.7" stroke="#7ec36a" stroke-width="0.6" fill="none"/>
<rect x="1951" y="567.2" width="31.1" height="13.5" fill="none" stroke="#c4c4c4" stroke-width="0.8"/>
<rect x="1952.8" y="568.8" width="27.5" height="4.5" fill="#b8701f"/>
<rect x="1951" y="574" width="31.1" height="6.3" fill="#fbfbf3"/>
<path d="M1958.3 568.8L1958.3 573.3" stroke="#d9a05a" stroke-width="0.6" fill="none"/>
<path d="M1963.8 568.8L1963.8 573.3" stroke="#d9a05a" stroke-width="0.6" fill="none"/>
<path d="M1969.3 568.8L1969.3 573.3" stroke="#d9a05a" stroke-width="0.6" fill="none"/>
<path d="M1974.8 568.8L1974.8 573.3" stroke="#d9a05a" stroke-width="0.6" fill="none"/>
<path d="M1951 580.7L1982.1 580.7" stroke="#7ec36a" stroke-width="0.6" fill="none"/>
<rect x="1814.4" y="703.8" width="2.5" height="16.2" fill="#e6e01e" rx="1"/>
<rect x="1829.8" y="703.8" width="2.5" height="16.2" fill="#e6e01e" rx="1"/>
<rect x="1845.5" y="703.8" width="2.5" height="16.2" fill="#e6e01e" rx="1"/>
<rect x="1856.3" y="703.8" width="2.5" height="16.2" fill="#e6e01e" rx="1"/>
<rect x="1797.7" y="721.8" width="2.5" height="17.4" fill="#e6e01e" rx="1"/>
<rect x="1808.8" y="721.8" width="2.5" height="17.4" fill="#e6e01e" rx="1"/>
<rect x="1814.4" y="721.8" width="2.5" height="17.4" fill="#e6e01e" rx="1"/>
<rect x="1824.8" y="721.8" width="2.5" height="17.4" fill="#e6e01e" rx="1"/>
<rect x="1829.8" y="721.8" width="2.5" height="17.4" fill="#e6e01e" rx="1"/>
<rect x="1840.6" y="721.8" width="2.5" height="17.4" fill="#e6e01e" rx="1"/>
<rect x="1845.5" y="721.8" width="2.5" height="17.4" fill="#e6e01e" rx="1"/>
<rect x="1856.3" y="721.8" width="2.5" height="17.4" fill="#e6e01e" rx="1"/>
<rect x="1816.9" y="710.3" width="12.8" height="2.3" fill="#a9a9a9"/>
<rect x="1832.2" y="710.3" width="13.3" height="2.3" fill="#a9a9a9"/>
<rect x="1848" y="710.3" width="8.3" height="2.3" fill="#a9a9a9"/>
<rect x="1800.2" y="728.4" width="8.6" height="2.3" fill="#a9a9a9"/>
<rect x="1816.9" y="728.4" width="7.9" height="2.3" fill="#a9a9a9"/>
<rect x="1832.2" y="728.4" width="8.3" height="2.3" fill="#a9a9a9"/>
<rect x="1848" y="728.4" width="8.3" height="2.3" fill="#a9a9a9"/>
<rect x="1883.4" y="720.5" width="25.2" height="10.4" fill="#f6f6ee"/>
<rect x="1883.4" y="725.7" width="5" height="5.2" fill="#2a3f9a" fill-opacity=".0"/>
<rect x="1890.6" y="722.7" width="11.3" height="2.3" fill="#555"/>
<rect x="1883.4" y="720.5" width="3.8" height="5.2" fill="#fff"/>
<rect x="1916.5" y="717.8" width="40.6" height="23" fill="url(#cv)"/>
<path d="M1956.6 717.8L1956.6 740.8" stroke="#d9a91a" stroke-width="1.2" fill="none"/>
<rect x="1915.8" y="717.8" width="5.2" height="1.4" fill="#d8d8d8"/>
<rect x="1915.8" y="739.4" width="5.2" height="1.4" fill="#d8d8d8"/>
<rect x="1915.8" y="728.6" width="5.2" height="1.1" fill="#d8d8d8"/>
<path d="M1863.6 743.7L1983 743.7" stroke="#8c8c8c" stroke-width="1.5" fill="none"/>
<path d="M1981.9 731.3L1979.6 743" stroke="#ddd" stroke-width="0.9" fill="none"/>
<rect x="1890.6" y="741.4" width="14.6" height="2.3" fill="#cfcfc4"/>
<rect x="1371.2" y="771.9" width="11.7" height="13.5" fill="#f0f0f0"/>
<path d="M1371.2 772.8L1382.9 772.8" stroke="#a8a8a8" stroke-width="0.9" fill="none"/>
<path d="M1371.2 774.8L1382.9 774.8" stroke="#a8a8a8" stroke-width="0.9" fill="none"/>
<path d="M1371.2 776.8L1382.9 776.8" stroke="#a8a8a8" stroke-width="0.9" fill="none"/>
<path d="M1371.2 778.8L1382.9 778.8" stroke="#a8a8a8" stroke-width="0.9" fill="none"/>
<path d="M1371.2 780.9L1382.9 780.9" stroke="#a8a8a8" stroke-width="0.9" fill="none"/>
<path d="M1371.2 782.9L1382.9 782.9" stroke="#a8a8a8" stroke-width="0.9" fill="none"/>
<rect x="1382" y="772.8" width="17.8" height="12.6" fill="#3f7d2e"/>
<rect x="1382.4" y="775.9" width="4.5" height="5" fill="#f0f0f0" fill-opacity=".7"/>
<rect x="1457.9" y="771.9" width="11.7" height="13.5" fill="#f0f0f0"/>
<path d="M1457.9 772.8L1469.7 772.8" stroke="#a8a8a8" stroke-width="0.9" fill="none"/>
<path d="M1457.9 774.8L1469.7 774.8" stroke="#a8a8a8" stroke-width="0.9" fill="none"/>
<path d="M1457.9 776.8L1469.7 776.8" stroke="#a8a8a8" stroke-width="0.9" fill="none"/>
<path d="M1457.9 778.8L1469.7 778.8" stroke="#a8a8a8" stroke-width="0.9" fill="none"/>
<path d="M1457.9 780.9L1469.7 780.9" stroke="#a8a8a8" stroke-width="0.9" fill="none"/>
<path d="M1457.9 782.9L1469.7 782.9" stroke="#a8a8a8" stroke-width="0.9" fill="none"/>
<rect x="1468.8" y="772.8" width="17.8" height="12.6" fill="#3f7d2e"/>
<rect x="1469.2" y="775.9" width="4.5" height="5" fill="#f0f0f0" fill-opacity=".7"/>
<rect x="1371.2" y="827.1" width="11.7" height="13.5" fill="#f0f0f0"/>
<path d="M1371.2 828L1382.9 828" stroke="#a8a8a8" stroke-width="0.9" fill="none"/>
<path d="M1371.2 830L1382.9 830" stroke="#a8a8a8" stroke-width="0.9" fill="none"/>
<path d="M1371.2 832L1382.9 832" stroke="#a8a8a8" stroke-width="0.9" fill="none"/>
<path d="M1371.2 834.1L1382.9 834.1" stroke="#a8a8a8" stroke-width="0.9" fill="none"/>
<path d="M1371.2 836.1L1382.9 836.1" stroke="#a8a8a8" stroke-width="0.9" fill="none"/>
<path d="M1371.2 838.1L1382.9 838.1" stroke="#a8a8a8" stroke-width="0.9" fill="none"/>
<rect x="1382" y="828" width="17.8" height="12.6" fill="#3f7d2e"/>
<rect x="1382.4" y="831.1" width="4.5" height="5" fill="#f0f0f0" fill-opacity=".7"/>
<rect x="1457.9" y="827.1" width="11.7" height="13.5" fill="#f0f0f0"/>
<path d="M1457.9 828L1469.7 828" stroke="#a8a8a8" stroke-width="0.9" fill="none"/>
<path d="M1457.9 830L1469.7 830" stroke="#a8a8a8" stroke-width="0.9" fill="none"/>
<path d="M1457.9 832L1469.7 832" stroke="#a8a8a8" stroke-width="0.9" fill="none"/>
<path d="M1457.9 834.1L1469.7 834.1" stroke="#a8a8a8" stroke-width="0.9" fill="none"/>
<path d="M1457.9 836.1L1469.7 836.1" stroke="#a8a8a8" stroke-width="0.9" fill="none"/>
<path d="M1457.9 838.1L1469.7 838.1" stroke="#a8a8a8" stroke-width="0.9" fill="none"/>
<rect x="1468.8" y="828" width="17.8" height="12.6" fill="#3f7d2e"/>
<rect x="1469.2" y="831.1" width="4.5" height="5" fill="#f0f0f0" fill-opacity=".7"/>
<rect x="1343.4" y="806.8" width="14" height="13.5" fill="#f0f0f0"/>
<path d="M1344.3 806.8L1344.3 820.3" stroke="#a8a8a8" stroke-width="0.9" fill="none"/>
<path d="M1346.4 806.8L1346.4 820.3" stroke="#a8a8a8" stroke-width="0.9" fill="none"/>
<path d="M1348.4 806.8L1348.4 820.3" stroke="#a8a8a8" stroke-width="0.9" fill="none"/>
<path d="M1350.4 806.8L1350.4 820.3" stroke="#a8a8a8" stroke-width="0.9" fill="none"/>
<path d="M1352.5 806.8L1352.5 820.3" stroke="#a8a8a8" stroke-width="0.9" fill="none"/>
<path d="M1354.5 806.8L1354.5 820.3" stroke="#a8a8a8" stroke-width="0.9" fill="none"/>
<rect x="1328.8" y="807.2" width="15.1" height="13.1" fill="#3f7d2e"/>
<rect x="1339.4" y="810.8" width="4.1" height="5.4" fill="#f0f0f0" fill-opacity=".7"/>
<rect x="1431.3" y="806.8" width="14" height="13.5" fill="#f0f0f0"/>
<path d="M1432.2 806.8L1432.2 820.3" stroke="#a8a8a8" stroke-width="0.9" fill="none"/>
<path d="M1434.3 806.8L1434.3 820.3" stroke="#a8a8a8" stroke-width="0.9" fill="none"/>
<path d="M1436.3 806.8L1436.3 820.3" stroke="#a8a8a8" stroke-width="0.9" fill="none"/>
<path d="M1438.3 806.8L1438.3 820.3" stroke="#a8a8a8" stroke-width="0.9" fill="none"/>
<path d="M1440.4 806.8L1440.4 820.3" stroke="#a8a8a8" stroke-width="0.9" fill="none"/>
<path d="M1442.4 806.8L1442.4 820.3" stroke="#a8a8a8" stroke-width="0.9" fill="none"/>
<rect x="1416.7" y="807.2" width="15.1" height="13.1" fill="#3f7d2e"/>
<rect x="1427.3" y="810.8" width="4.1" height="5.4" fill="#f0f0f0" fill-opacity=".7"/>
<rect x="1343.4" y="862.7" width="14" height="13.5" fill="#f0f0f0"/>
<path d="M1344.3 862.7L1344.3 876.2" stroke="#a8a8a8" stroke-width="0.9" fill="none"/>
<path d="M1346.4 862.7L1346.4 876.2" stroke="#a8a8a8" stroke-width="0.9" fill="none"/>
<path d="M1348.4 862.7L1348.4 876.2" stroke="#a8a8a8" stroke-width="0.9" fill="none"/>
<path d="M1350.4 862.7L1350.4 876.2" stroke="#a8a8a8" stroke-width="0.9" fill="none"/>
<path d="M1352.5 862.7L1352.5 876.2" stroke="#a8a8a8" stroke-width="0.9" fill="none"/>
<path d="M1354.5 862.7L1354.5 876.2" stroke="#a8a8a8" stroke-width="0.9" fill="none"/>
<rect x="1328.8" y="863.1" width="15.1" height="13.1" fill="#3f7d2e"/>
<rect x="1339.4" y="866.7" width="4.1" height="5.4" fill="#f0f0f0" fill-opacity=".7"/>
<rect x="1431.3" y="862.7" width="14" height="13.5" fill="#f0f0f0"/>
<path d="M1432.2 862.7L1432.2 876.2" stroke="#a8a8a8" stroke-width="0.9" fill="none"/>
<path d="M1434.3 862.7L1434.3 876.2" stroke="#a8a8a8" stroke-width="0.9" fill="none"/>
<path d="M1436.3 862.7L1436.3 876.2" stroke="#a8a8a8" stroke-width="0.9" fill="none"/>
<path d="M1438.3 862.7L1438.3 876.2" stroke="#a8a8a8" stroke-width="0.9" fill="none"/>
<path d="M1440.4 862.7L1440.4 876.2" stroke="#a8a8a8" stroke-width="0.9" fill="none"/>
<path d="M1442.4 862.7L1442.4 876.2" stroke="#a8a8a8" stroke-width="0.9" fill="none"/>
<rect x="1416.7" y="863.1" width="15.1" height="13.1" fill="#3f7d2e"/>
<rect x="1427.3" y="866.7" width="4.1" height="5.4" fill="#f0f0f0" fill-opacity=".7"/>
<rect x="1328.8" y="773" width="12.1" height="19.2" fill="#4b4f5d"/>
<rect x="1341.8" y="773" width="12.1" height="19.2" fill="#4b4f5d"/>
<path d="M1328.8 792.1L1353.8 792.1" stroke="#8f929b" stroke-width="0.7" fill="none"/>
<path d="M1353.8 773L1353.8 792.1" stroke="#8f929b" stroke-width="0.6" fill="none"/>
<rect x="1416.7" y="773" width="12.1" height="19.2" fill="#4b4f5d"/>
<rect x="1429.6" y="773" width="12.1" height="19.2" fill="#4b4f5d"/>
<path d="M1416.7 792.1L1441.7 792.1" stroke="#8f929b" stroke-width="0.7" fill="none"/>
<path d="M1441.7 773L1441.7 792.1" stroke="#8f929b" stroke-width="0.6" fill="none"/>
<rect x="1373.9" y="800" width="12.1" height="19.2" fill="#4b4f5d"/>
<rect x="1386.8" y="800" width="12.1" height="19.2" fill="#4b4f5d"/>
<path d="M1373.9 819.2L1398.9 819.2" stroke="#8f929b" stroke-width="0.7" fill="none"/>
<path d="M1398.9 800L1398.9 819.2" stroke="#8f929b" stroke-width="0.6" fill="none"/>
<rect x="1461.3" y="800" width="12.1" height="19.2" fill="#4b4f5d"/>
<rect x="1474.3" y="800" width="12.1" height="19.2" fill="#4b4f5d"/>
<path d="M1461.3 819.2L1486.3 819.2" stroke="#8f929b" stroke-width="0.7" fill="none"/>
<path d="M1486.3 800L1486.3 819.2" stroke="#8f929b" stroke-width="0.6" fill="none"/>
<rect x="1328.8" y="828.2" width="12.1" height="19.2" fill="#4b4f5d"/>
<rect x="1341.8" y="828.2" width="12.1" height="19.2" fill="#4b4f5d"/>
<path d="M1328.8 847.4L1353.8 847.4" stroke="#8f929b" stroke-width="0.7" fill="none"/>
<path d="M1353.8 828.2L1353.8 847.4" stroke="#8f929b" stroke-width="0.6" fill="none"/>
<rect x="1416.7" y="828.2" width="12.1" height="19.2" fill="#4b4f5d"/>
<rect x="1429.6" y="828.2" width="12.1" height="19.2" fill="#4b4f5d"/>
<path d="M1416.7 847.4L1441.7 847.4" stroke="#8f929b" stroke-width="0.7" fill="none"/>
<path d="M1441.7 828.2L1441.7 847.4" stroke="#8f929b" stroke-width="0.6" fill="none"/>
<rect x="1373.9" y="855.9" width="12.1" height="19.2" fill="#4b4f5d"/>
<rect x="1386.8" y="855.9" width="12.1" height="19.2" fill="#4b4f5d"/>
<path d="M1373.9 875.1L1398.9 875.1" stroke="#8f929b" stroke-width="0.7" fill="none"/>
<path d="M1398.9 855.9L1398.9 875.1" stroke="#8f929b" stroke-width="0.6" fill="none"/>
<rect x="1461.3" y="855.9" width="12.1" height="19.2" fill="#4b4f5d"/>
<rect x="1474.3" y="855.9" width="12.1" height="19.2" fill="#4b4f5d"/>
<path d="M1461.3 875.1L1486.3 875.1" stroke="#8f929b" stroke-width="0.7" fill="none"/>
<path d="M1486.3 855.9L1486.3 875.1" stroke="#8f929b" stroke-width="0.6" fill="none"/>
<rect x="1323.8" y="795.5" width="5.6" height="7.9" fill="#bdbdbd"/>
<rect x="1329.5" y="793.3" width="7.9" height="11.3" fill="#f2f2f2"/>
<rect x="1334" y="800" width="6.8" height="5.6" fill="#e2e2e2"/>
<rect x="1335.6" y="797.8" width="1.8" height="5.6" fill="#9fc4e8"/>
<rect x="1411.7" y="795.5" width="5.6" height="7.9" fill="#bdbdbd"/>
<rect x="1417.4" y="793.3" width="7.9" height="11.3" fill="#f2f2f2"/>
<rect x="1421.9" y="800" width="6.8" height="5.6" fill="#e2e2e2"/>
<rect x="1423.5" y="797.8" width="1.8" height="5.6" fill="#9fc4e8"/>
<rect x="1323.8" y="850.7" width="5.6" height="7.9" fill="#bdbdbd"/>
<rect x="1329.5" y="848.5" width="7.9" height="11.3" fill="#f2f2f2"/>
<rect x="1334" y="855.2" width="6.8" height="5.6" fill="#e2e2e2"/>
<rect x="1335.6" y="853" width="1.8" height="5.6" fill="#9fc4e8"/>
<rect x="1411.7" y="850.7" width="5.6" height="7.9" fill="#bdbdbd"/>
<rect x="1417.4" y="848.5" width="7.9" height="11.3" fill="#f2f2f2"/>
<rect x="1421.9" y="855.2" width="6.8" height="5.6" fill="#e2e2e2"/>
<rect x="1423.5" y="853" width="1.8" height="5.6" fill="#9fc4e8"/>
<rect x="1390.3" y="786.5" width="9" height="12.4" fill="#f2f2f2"/>
<rect x="1399.3" y="789.9" width="5" height="6.8" fill="#bdbdbd"/>
<rect x="1385.8" y="786.5" width="5.6" height="5.6" fill="#e2e2e2"/>
<rect x="1392.1" y="789.9" width="1.8" height="7.9" fill="#9fc4e8"/>
<rect x="1478.2" y="786.5" width="9" height="12.4" fill="#f2f2f2"/>
<rect x="1487.2" y="789.9" width="5" height="6.8" fill="#bdbdbd"/>
<rect x="1473.7" y="786.5" width="5.6" height="5.6" fill="#e2e2e2"/>
<rect x="1480" y="789.9" width="1.8" height="7.9" fill="#9fc4e8"/>
<rect x="1390.3" y="841.7" width="9" height="12.4" fill="#f2f2f2"/>
<rect x="1399.3" y="845.1" width="5" height="6.8" fill="#bdbdbd"/>
<rect x="1385.8" y="841.7" width="5.6" height="5.6" fill="#e2e2e2"/>
<rect x="1392.1" y="845.1" width="1.8" height="7.9" fill="#9fc4e8"/>
<rect x="1478.2" y="841.7" width="9" height="12.4" fill="#f2f2f2"/>
<rect x="1487.2" y="845.1" width="5" height="6.8" fill="#bdbdbd"/>
<rect x="1473.7" y="841.7" width="5.6" height="5.6" fill="#e2e2e2"/>
<rect x="1480" y="845.1" width="1.8" height="7.9" fill="#9fc4e8"/>
<rect x="1335.6" y="902.1" width="14.2" height="9.5" fill="#f0f0f0"/>
<path d="M1335.6 902.1L1335.6 897.6" stroke="#ccc" stroke-width="0.8" fill="none"/>
<rect x="1336.7" y="907.8" width="13.1" height="1.6" fill="#b8c8dd"/>
<rect x="1385.8" y="902.1" width="14.6" height="9.5" fill="#f0f0f0"/>
<path d="M1385.8 902.1L1385.8 897.6" stroke="#ccc" stroke-width="0.8" fill="none"/>
<rect x="1386.9" y="907.8" width="13.5" height="1.6" fill="#b8c8dd"/>
<rect x="1436.5" y="902.1" width="14.6" height="9.5" fill="#f0f0f0"/>
<path d="M1436.5 902.1L1436.5 897.6" stroke="#ccc" stroke-width="0.8" fill="none"/>
<rect x="1437.6" y="907.8" width="13.5" height="1.6" fill="#b8c8dd"/>
<rect x="1349.8" y="897.2" width="14" height="28.6" fill="#f0f0f0"/>
<path d="M1350.7 897.2L1350.7 925.8" stroke="#a8a8a8" stroke-width="0.9" fill="none"/>
<path d="M1352.7 897.2L1352.7 925.8" stroke="#a8a8a8" stroke-width="0.9" fill="none"/>
<path d="M1354.7 897.2L1354.7 925.8" stroke="#a8a8a8" stroke-width="0.9" fill="none"/>
<path d="M1356.7 897.2L1356.7 925.8" stroke="#a8a8a8" stroke-width="0.9" fill="none"/>
<path d="M1358.8 897.2L1358.8 925.8" stroke="#a8a8a8" stroke-width="0.9" fill="none"/>
<path d="M1360.8 897.2L1360.8 925.8" stroke="#a8a8a8" stroke-width="0.9" fill="none"/>
<rect x="1400.5" y="897.2" width="14" height="28.6" fill="#f0f0f0"/>
<path d="M1401.4 897.2L1401.4 925.8" stroke="#a8a8a8" stroke-width="0.9" fill="none"/>
<path d="M1403.4 897.2L1403.4 925.8" stroke="#a8a8a8" stroke-width="0.9" fill="none"/>
<path d="M1405.4 897.2L1405.4 925.8" stroke="#a8a8a8" stroke-width="0.9" fill="none"/>
<path d="M1407.4 897.2L1407.4 925.8" stroke="#a8a8a8" stroke-width="0.9" fill="none"/>
<path d="M1409.5 897.2L1409.5 925.8" stroke="#a8a8a8" stroke-width="0.9" fill="none"/>
<path d="M1411.5 897.2L1411.5 925.8" stroke="#a8a8a8" stroke-width="0.9" fill="none"/>
<rect x="1451.2" y="897.2" width="14" height="28.6" fill="#f0f0f0"/>
<path d="M1452.1 897.2L1452.1 925.8" stroke="#a8a8a8" stroke-width="0.9" fill="none"/>
<path d="M1454.1 897.2L1454.1 925.8" stroke="#a8a8a8" stroke-width="0.9" fill="none"/>
<path d="M1456.1 897.2L1456.1 925.8" stroke="#a8a8a8" stroke-width="0.9" fill="none"/>
<path d="M1458.2 897.2L1458.2 925.8" stroke="#a8a8a8" stroke-width="0.9" fill="none"/>
<path d="M1460.2 897.2L1460.2 925.8" stroke="#a8a8a8" stroke-width="0.9" fill="none"/>
<path d="M1462.2 897.2L1462.2 925.8" stroke="#a8a8a8" stroke-width="0.9" fill="none"/>
<rect x="1451.2" y="916.8" width="13.5" height="9" fill="#3f7d2e"/>
<rect x="1418.9" y="898.7" width="16.5" height="12.4" fill="#4a4e5c"/>
<rect x="1425.9" y="904.4" width="1.4" height="1.8" fill="#9fc4e8"/>
<path d="M1315.9 931.9L1363.7 931.9" stroke="#1f4f9a" stroke-width="1.1" fill="none"/>
<path d="M1363.7 931.9L1360.2 933.8L1360.2 930Z" fill="#1f4f9a"/>
<path d="M1365.5 931.9L1414.4 931.9" stroke="#b04fa0" stroke-width="1.1" fill="none"/>
<path d="M1414.4 931.9L1410.9 933.8L1410.9 930Z" fill="#b04fa0"/>
<path d="M1416.2 931.9L1464.7 931.9" stroke="#c62828" stroke-width="1.1" fill="none"/>
<path d="M1464.7 931.9L1461.2 933.8L1461.2 930Z" fill="#c62828"/>
<path d="M1462.4 940.4L1462.4 983.3" stroke="#e0a020" stroke-width="1.1" fill="none"/>
<path d="M1460.2 963L1411.7 963" stroke="#e6d820" stroke-width="1.1" fill="none"/>
<path d="M1411.7 963L1415.2 961.1L1415.2 964.9Z" fill="#e6d820"/>
<path d="M1410.6 963L1361.7 963" stroke="#2e8b3a" stroke-width="1.1" fill="none"/>
<path d="M1361.7 963L1365.2 961.1L1365.2 964.9Z" fill="#2e8b3a"/>
<rect x="1315.5" y="945.4" width="11.7" height="13.5" fill="#f0f0f0"/>
<path d="M1315.5 946.3L1327.2 946.3" stroke="#a8a8a8" stroke-width="0.9" fill="none"/>
<path d="M1315.5 948.3L1327.2 948.3" stroke="#a8a8a8" stroke-width="0.9" fill="none"/>
<path d="M1315.5 950.4L1327.2 950.4" stroke="#a8a8a8" stroke-width="0.9" fill="none"/>
<path d="M1315.5 952.4L1327.2 952.4" stroke="#a8a8a8" stroke-width="0.9" fill="none"/>
<path d="M1315.5 954.4L1327.2 954.4" stroke="#a8a8a8" stroke-width="0.9" fill="none"/>
<path d="M1315.5 956.4L1327.2 956.4" stroke="#a8a8a8" stroke-width="0.9" fill="none"/>
<rect x="1326.3" y="946.3" width="17.4" height="12.6" fill="#3f7d2e"/>
<rect x="1326.8" y="949.5" width="4.5" height="5" fill="#f0f0f0" fill-opacity=".7"/>
<rect x="1347.9" y="944.9" width="2.9" height="1.4" fill="#e8e8e8"/>
<rect x="1347.9" y="947.6" width="2.9" height="1.4" fill="#e8e8e8"/>
<rect x="1347.9" y="950.4" width="2.9" height="1.4" fill="#e8e8e8"/>
<rect x="1347.9" y="953.1" width="2.9" height="1.4" fill="#e8e8e8"/>
<rect x="1347.9" y="955.8" width="2.9" height="1.4" fill="#e8e8e8"/>
<rect x="1347.9" y="958.5" width="2.9" height="1.4" fill="#e8e8e8"/>
<rect x="1347.9" y="961.2" width="2.9" height="1.4" fill="#e8e8e8"/>
<rect x="1347.9" y="963.9" width="2.9" height="1.4" fill="#e8e8e8"/>
<rect x="1347.9" y="966.6" width="2.9" height="1.4" fill="#e8e8e8"/>
<rect x="1347.9" y="969.3" width="2.9" height="1.4" fill="#e8e8e8"/>
<rect x="1347.9" y="972" width="2.9" height="1.4" fill="#e8e8e8"/>
<rect x="1347.9" y="974.7" width="2.9" height="1.4" fill="#e8e8e8"/>
<rect x="1347.9" y="977.4" width="2.9" height="1.4" fill="#e8e8e8"/>
<rect x="1347.9" y="980.1" width="2.9" height="1.4" fill="#e8e8e8"/>
<rect x="1347.9" y="982.8" width="2.9" height="1.4" fill="#e8e8e8"/>
<rect x="1347.9" y="985.5" width="2.9" height="1.4" fill="#e8e8e8"/>
<rect x="1347.9" y="988.2" width="2.9" height="1.4" fill="#e8e8e8"/>
<rect x="1347.9" y="990.9" width="2.9" height="1.4" fill="#e8e8e8"/>
<rect x="1347.9" y="944.9" width="2.9" height="48.5" fill="#111" fill-opacity=".25"/>
<rect x="1330.1" y="958.9" width="12.8" height="13.1" fill="#f0f0f0"/>
<rect x="1335.8" y="963" width="5" height="9" fill="#c8c8c8"/>
<rect x="1330.6" y="974.2" width="13.1" height="16.9" fill="#4b4f5d"/>
<rect x="1361" y="969.3" width="14" height="17.4" fill="#3f7d2e"/>
<rect x="1361" y="986.6" width="14" height="10.1" fill="#f0f0f0"/>
<path d="M1361.9 986.6L1361.9 996.8" stroke="#a8a8a8" stroke-width="0.9" fill="none"/>
<path d="M1364 986.6L1364 996.8" stroke="#a8a8a8" stroke-width="0.9" fill="none"/>
<path d="M1366 986.6L1366 996.8" stroke="#a8a8a8" stroke-width="0.9" fill="none"/>
<path d="M1368 986.6L1368 996.8" stroke="#a8a8a8" stroke-width="0.9" fill="none"/>
<path d="M1370 986.6L1370 996.8" stroke="#a8a8a8" stroke-width="0.9" fill="none"/>
<path d="M1372.1 986.6L1372.1 996.8" stroke="#a8a8a8" stroke-width="0.9" fill="none"/>
<rect x="1411.7" y="969.3" width="14" height="17.4" fill="#3f7d2e"/>
<rect x="1411.7" y="986.6" width="14" height="10.1" fill="#f0f0f0"/>
<path d="M1412.6 986.6L1412.6 996.8" stroke="#a8a8a8" stroke-width="0.9" fill="none"/>
<path d="M1414.7 986.6L1414.7 996.8" stroke="#a8a8a8" stroke-width="0.9" fill="none"/>
<path d="M1416.7 986.6L1416.7 996.8" stroke="#a8a8a8" stroke-width="0.9" fill="none"/>
<path d="M1418.7 986.6L1418.7 996.8" stroke="#a8a8a8" stroke-width="0.9" fill="none"/>
<path d="M1420.7 986.6L1420.7 996.8" stroke="#a8a8a8" stroke-width="0.9" fill="none"/>
<path d="M1422.8 986.6L1422.8 996.8" stroke="#a8a8a8" stroke-width="0.9" fill="none"/>
<rect x="1375" y="969.3" width="14.2" height="11.7" fill="#f0f0f0"/>
<rect x="1379.1" y="974.2" width="7.9" height="7.2" fill="#cfcfcf"/>
<rect x="1390.3" y="969.7" width="19.2" height="24.8" fill="#4b4f5d"/>
<rect x="1425.7" y="983.3" width="14.2" height="12.4" fill="#f0f0f0"/>
<rect x="1430.9" y="987.8" width="7.9" height="7.9" fill="#cfcfcf"/>
<rect x="1440.6" y="983.3" width="18.5" height="12.4" fill="#4b4f5d"/>
<rect x="1482.7" y="935.5" width="12.4" height="18.5" fill="#4b4f5d"/>
<rect x="1482.7" y="955.1" width="13.5" height="13.5" fill="#f0f0f0"/>
<rect x="1488.4" y="957.3" width="6.8" height="7.9" fill="#c8c8c8"/>
<rect x="1468.5" y="969.7" width="17.6" height="13.1" fill="#3f7d2e"/>
<rect x="1486.1" y="969.7" width="11.3" height="13.1" fill="#f0f0f0"/>
<path d="M1487 969.7L1487 982.8" stroke="#a8a8a8" stroke-width="0.9" fill="none"/>
<path d="M1489 969.7L1489 982.8" stroke="#a8a8a8" stroke-width="0.9" fill="none"/>
<path d="M1491.1 969.7L1491.1 982.8" stroke="#a8a8a8" stroke-width="0.9" fill="none"/>
<path d="M1493.1 969.7L1493.1 982.8" stroke="#a8a8a8" stroke-width="0.9" fill="none"/>
<path d="M1495.1 969.7L1495.1 982.8" stroke="#a8a8a8" stroke-width="0.9" fill="none"/>
<path d="M1341.2 994.5l-2.5 4.5h5z" fill="#e31b1b"/>
<path d="M1501.8 765.5L1983 765.5" stroke="#8c8c8c" stroke-width="1.5" fill="none"/>
<path d="M1546.2 766.2L1546.2 912.3" stroke="#9a9a9a" stroke-width="0.9" fill="none"/>
<path d="M1568.3 766.2L1568.3 912.3" stroke="#9a9a9a" stroke-width="0.9" fill="none"/>
<path d="M1613.4 766.2L1613.4 912.3" stroke="#9a9a9a" stroke-width="0.9" fill="none"/>
<path d="M1659.6 766.2L1659.6 912.3" stroke="#9a9a9a" stroke-width="0.9" fill="none"/>
<path d="M1683.3 766.2L1683.3 912.3" stroke="#9a9a9a" stroke-width="0.9" fill="none"/>
<path d="M1687.8 766.2L1687.8 912.3" stroke="#9a9a9a" stroke-width="0.9" fill="none"/>
<path d="M1710.3 766.2L1710.3 912.3" stroke="#9a9a9a" stroke-width="0.9" fill="none"/>
<path d="M1530 814.7L1613.4 814.7" stroke="#9a9a9a" stroke-width="0.8" fill="none"/>
<path d="M1530 863.1L1613.4 863.1" stroke="#9a9a9a" stroke-width="0.8" fill="none"/>
<path d="M1551.4 767.3L1548.5 778.6" stroke="#e4e4e4" stroke-width="1" fill="none"/>
<path d="M1626.9 766.2L1623.5 778.2" stroke="#e4e4e4" stroke-width="1" fill="none"/>
<path d="M1744.1 766.9L1747.5 778.6" stroke="#e4e4e4" stroke-width="1" fill="none"/>
<path d="M1790.3 766.2L1786.9 778.6" stroke="#e4e4e4" stroke-width="1" fill="none"/>
<path d="M1908.6 767.3L1905.9 778.6" stroke="#e4e4e4" stroke-width="1" fill="none"/>
<path d="M1533.4 778.2L1545.8 781.3" stroke="#e4e4e4" stroke-width="1" fill="none"/>
<path d="M1568.3 795.5L1580.7 798.9" stroke="#e4e4e4" stroke-width="1" fill="none"/>
<path d="M1534.5 823.7L1546.2 827.1" stroke="#e4e4e4" stroke-width="1" fill="none"/>
<path d="M1568.3 839.5L1581.4 842.8" stroke="#e4e4e4" stroke-width="1" fill="none"/>
<path d="M1533.4 871L1546.2 874.4" stroke="#e4e4e4" stroke-width="1" fill="none"/>
<path d="M1568.3 884.5L1581.4 887.9" stroke="#e4e4e4" stroke-width="1" fill="none"/>
<rect x="1589" y="776.8" width="23.2" height="26.6" fill="#f3f3f3"/>
<rect x="1590.9" y="781.3" width="5" height="4.1" fill="#1a1a1a" transform="rotate(-35 1593.3 783.3)"/>
<rect x="1590.9" y="794.8" width="5" height="4.1" fill="#1a1a1a" transform="rotate(35 1593.3 796.9)"/>
<rect x="1595.8" y="774.1" width="10.1" height="3.2" fill="#2a2a2a" rx="2"/>
<rect x="1595.8" y="803" width="10.1" height="3.2" fill="#2a2a2a" rx="2"/>
<path d="M1599.2 784.7L1610.5 782.4" stroke="#333" stroke-width="0.8" fill="none"/>
<path d="M1599.2 796L1610.5 793.7" stroke="#333" stroke-width="0.8" fill="none"/>
<rect x="1589" y="827.1" width="23.2" height="28.2" fill="#f3f3f3"/>
<rect x="1590.9" y="831.6" width="5" height="4.1" fill="#1a1a1a" transform="rotate(-35 1593.3 833.6)"/>
<rect x="1590.9" y="845.1" width="5" height="4.1" fill="#1a1a1a" transform="rotate(35 1593.3 847.1)"/>
<rect x="1595.8" y="824.4" width="10.1" height="3.2" fill="#2a2a2a" rx="2"/>
<rect x="1595.8" y="854.8" width="10.1" height="3.2" fill="#2a2a2a" rx="2"/>
<path d="M1599.2 835L1610.5 832.7" stroke="#333" stroke-width="0.8" fill="none"/>
<path d="M1599.2 846.2L1610.5 844" stroke="#333" stroke-width="0.8" fill="none"/>
<rect x="1589" y="874.4" width="23.2" height="28.2" fill="#f3f3f3"/>
<rect x="1590.9" y="878.9" width="5" height="4.1" fill="#1a1a1a" transform="rotate(-35 1593.3 880.9)"/>
<rect x="1590.9" y="892.4" width="5" height="4.1" fill="#1a1a1a" transform="rotate(35 1593.3 894.5)"/>
<rect x="1595.8" y="871.7" width="10.1" height="3.2" fill="#2a2a2a" rx="2"/>
<rect x="1595.8" y="902.1" width="10.1" height="3.2" fill="#2a2a2a" rx="2"/>
<path d="M1599.2 882.3L1610.5 880" stroke="#333" stroke-width="0.8" fill="none"/>
<path d="M1599.2 893.6L1610.5 891.3" stroke="#333" stroke-width="0.8" fill="none"/>
<rect x="1613.8" y="851" width="9" height="59" fill="#ededed"/>
<rect x="1614.3" y="834.5" width="5" height="16.5" fill="#e4e4e4"/>
<rect x="1619.2" y="836.8" width="1.4" height="1.4" fill="#e4e4e4"/>
<rect x="1619.2" y="841.7" width="1.4" height="1.4" fill="#e4e4e4"/>
<rect x="1619.2" y="846.7" width="1.4" height="1.4" fill="#e4e4e4"/>
<rect x="1504.1" y="777.5" width="22.5" height="25.9" fill="#f3f3f3"/>
<rect x="1519.9" y="780.9" width="5.6" height="4.5" fill="#1a1a1a" transform="rotate(35 1522.7 783.1)"/>
<rect x="1519.9" y="794.4" width="5.6" height="4.5" fill="#1a1a1a" transform="rotate(-35 1522.7 796.6)"/>
<rect x="1509.8" y="802.7" width="11.3" height="3.6" fill="#2a2a2a" rx="2"/>
<path d="M1506.4 784.3L1517.7 787.6" stroke="#333" stroke-width="0.8" fill="none"/>
<path d="M1506.4 797.8L1517.7 794.4" stroke="#333" stroke-width="0.8" fill="none"/>
<rect x="1504.1" y="826.4" width="22.5" height="25.9" fill="#f3f3f3"/>
<rect x="1519.9" y="829.8" width="5.6" height="4.5" fill="#1a1a1a" transform="rotate(35 1522.7 832)"/>
<rect x="1519.9" y="843.3" width="5.6" height="4.5" fill="#1a1a1a" transform="rotate(-35 1522.7 845.6)"/>
<rect x="1509.8" y="851.6" width="11.3" height="3.6" fill="#2a2a2a" rx="2"/>
<path d="M1506.4 833.2L1517.7 836.5" stroke="#333" stroke-width="0.8" fill="none"/>
<path d="M1506.4 846.7L1517.7 843.3" stroke="#333" stroke-width="0.8" fill="none"/>
<rect x="1504.1" y="874.4" width="22.5" height="25.9" fill="#f3f3f3"/>
<rect x="1519.9" y="877.8" width="5.6" height="4.5" fill="#1a1a1a" transform="rotate(35 1522.7 880)"/>
<rect x="1519.9" y="891.3" width="5.6" height="4.5" fill="#1a1a1a" transform="rotate(-35 1522.7 893.6)"/>
<rect x="1509.8" y="899.6" width="11.3" height="3.6" fill="#2a2a2a" rx="2"/>
<path d="M1506.4 881.2L1517.7 884.5" stroke="#333" stroke-width="0.8" fill="none"/>
<path d="M1506.4 894.7L1517.7 891.3" stroke="#333" stroke-width="0.8" fill="none"/>
<path d="M1545.8 766.2L1545.8 912.7" stroke="#9a9a9a" stroke-width="0.9" fill="none"/>
<path d="M1503 814.2L1545.8 814.2" stroke="#9a9a9a" stroke-width="0.8" fill="none"/>
<path d="M1503 863.1L1545.8 863.1" stroke="#9a9a9a" stroke-width="0.8" fill="none"/>
<path d="M1532.3 778.2L1545.8 782" stroke="#e4e4e4" stroke-width="1" fill="none"/>
<path d="M1532.3 822.6L1545.8 826.4" stroke="#e4e4e4" stroke-width="1" fill="none"/>
<path d="M1551.5 767.3L1548.5 779.7" stroke="#e4e4e4" stroke-width="1" fill="none"/>
<rect x="1525.5" y="717.8" width="36.1" height="22.5" fill="url(#cv)"/>
<rect x="1502.6" y="715.5" width="5" height="5.6" fill="#f4f4f4"/>
<rect x="1502.6" y="718.4" width="5" height="2.7" fill="#2a3f9a"/>
<path d="M1522.2 743.7L1560 743.7" stroke="#8c8c8c" stroke-width="1.5" fill="none"/>
<rect x="1673.8" y="771.9" width="8.3" height="6.1" fill="#f0f0f0"/>
<rect x="1687.8" y="770.7" width="8.3" height="6.1" fill="#f0f0f0"/>
<rect x="1687.8" y="786.5" width="8.3" height="6.1" fill="#f0f0f0"/>
<rect x="1673.8" y="795.5" width="8.3" height="6.1" fill="#f0f0f0"/>
<rect x="1687.8" y="801.2" width="8.3" height="6.1" fill="#f0f0f0"/>
<rect x="1673.8" y="810.2" width="8.3" height="6.1" fill="#f0f0f0"/>
<rect x="1687.8" y="816.9" width="8.3" height="6.1" fill="#f0f0f0"/>
<rect x="1673.8" y="825.9" width="8.3" height="6.1" fill="#f0f0f0"/>
<rect x="1687.8" y="832.3" width="8.3" height="6.1" fill="#f0f0f0"/>
<rect x="1673.8" y="841.7" width="8.3" height="6.1" fill="#f0f0f0"/>
<rect x="1687.8" y="848" width="8.3" height="6.1" fill="#f0f0f0"/>
<rect x="1673.8" y="857.5" width="8.3" height="6.1" fill="#f0f0f0"/>
<rect x="1687.8" y="863.1" width="8.3" height="6.1" fill="#f0f0f0"/>
<rect x="1673.8" y="872.1" width="8.3" height="6.1" fill="#f0f0f0"/>
<rect x="1687.8" y="878.2" width="8.3" height="6.1" fill="#f0f0f0"/>
<rect x="1673.8" y="887.9" width="8.3" height="6.1" fill="#f0f0f0"/>
<rect x="1687.8" y="893.1" width="8.3" height="6.1" fill="#f0f0f0"/>
<rect x="1673.8" y="902.6" width="8.3" height="6.1" fill="#f0f0f0"/>
<path d="M1687.8 782L1710.3 782" stroke="#c9c9c9" stroke-width="0.8" fill="none"/>
<path d="M1710.3 782L1724.3 784.7" stroke="#dcdcdc" stroke-width="0.8" fill="none"/>
<path d="M1659.6 790.3L1685.5 790.3" stroke="#c9c9c9" stroke-width="0.8" fill="none"/>
<path d="M1646.1 787.6L1659.6 790.3" stroke="#dcdcdc" stroke-width="0.8" fill="none"/>
<path d="M1659.6 805.2L1685.5 805.2" stroke="#c9c9c9" stroke-width="0.8" fill="none"/>
<path d="M1646.1 802.5L1659.6 805.2" stroke="#dcdcdc" stroke-width="0.8" fill="none"/>
<path d="M1659.6 812L1685.5 812" stroke="#c9c9c9" stroke-width="0.8" fill="none"/>
<path d="M1646.1 809.3L1659.6 812" stroke="#dcdcdc" stroke-width="0.8" fill="none"/>
<path d="M1687.8 820.3L1710.3 820.3" stroke="#c9c9c9" stroke-width="0.8" fill="none"/>
<path d="M1710.3 820.3L1724.3 823" stroke="#dcdcdc" stroke-width="0.8" fill="none"/>
<path d="M1659.6 828.2L1685.5 828.2" stroke="#c9c9c9" stroke-width="0.8" fill="none"/>
<path d="M1646.1 825.5L1659.6 828.2" stroke="#dcdcdc" stroke-width="0.8" fill="none"/>
<path d="M1687.8 836.1L1710.3 836.1" stroke="#c9c9c9" stroke-width="0.8" fill="none"/>
<path d="M1710.3 836.1L1724.3 838.8" stroke="#dcdcdc" stroke-width="0.8" fill="none"/>
<path d="M1659.6 844L1685.5 844" stroke="#c9c9c9" stroke-width="0.8" fill="none"/>
<path d="M1646.1 841.3L1659.6 844" stroke="#dcdcdc" stroke-width="0.8" fill="none"/>
<path d="M1687.8 851.9L1710.3 851.9" stroke="#c9c9c9" stroke-width="0.8" fill="none"/>
<path d="M1710.3 851.9L1724.3 854.6" stroke="#dcdcdc" stroke-width="0.8" fill="none"/>
<path d="M1659.6 859.8L1685.5 859.8" stroke="#c9c9c9" stroke-width="0.8" fill="none"/>
<path d="M1646.1 857L1659.6 859.8" stroke="#dcdcdc" stroke-width="0.8" fill="none"/>
<path d="M1687.8 867.6L1710.3 867.6" stroke="#c9c9c9" stroke-width="0.8" fill="none"/>
<path d="M1710.3 867.6L1724.3 870.3" stroke="#dcdcdc" stroke-width="0.8" fill="none"/>
<path d="M1659.6 875.5L1685.5 875.5" stroke="#c9c9c9" stroke-width="0.8" fill="none"/>
<path d="M1646.1 872.8L1659.6 875.5" stroke="#dcdcdc" stroke-width="0.8" fill="none"/>
<path d="M1687.8 883.4L1710.3 883.4" stroke="#c9c9c9" stroke-width="0.8" fill="none"/>
<path d="M1710.3 883.4L1724.3 886.1" stroke="#dcdcdc" stroke-width="0.8" fill="none"/>
<path d="M1659.6 891.3L1685.5 891.3" stroke="#c9c9c9" stroke-width="0.8" fill="none"/>
<path d="M1646.1 888.6L1659.6 891.3" stroke="#dcdcdc" stroke-width="0.8" fill="none"/>
<path d="M1687.8 899.2L1710.3 899.2" stroke="#c9c9c9" stroke-width="0.8" fill="none"/>
<path d="M1710.3 899.2L1724.3 901.9" stroke="#dcdcdc" stroke-width="0.8" fill="none"/>
<rect x="1750.4" y="766.2" width="8.3" height="126.9" fill="#a2a39c"/>
<rect x="1860.2" y="766.2" width="6.8" height="126.9" fill="#a2a39c"/>
<rect x="1868.5" y="766.2" width="7.4" height="126.9" fill="#a2a39c"/>
<rect x="1977.4" y="766.2" width="5.6" height="126.9" fill="#a2a39c"/>
<rect x="1753.1" y="905.5" width="229.9" height="6.8" fill="#a2a39c"/>
<path d="M1867.6 766.2L1867.6 912.7" stroke="#777" stroke-width="0.8" fill="none"/>
<path d="M1750.4 893.1L1750.4 912.7" stroke="#9a9a9a" stroke-width="0.8" fill="none"/>
<rect x="1795.5" y="796.2" width="14.4" height="89.7" fill="#b4b5ae"/>
<rect x="1917.2" y="796.2" width="14.4" height="89.7" fill="#b4b5ae"/>
<rect x="1746.8" y="835.4" width="4.1" height="15.6" fill="#ededed"/>
<pattern id="rg" width="2.2" height="2.2" patternUnits="userSpaceOnUse"><rect width="2.2" height="2.2" fill="#5b4a47"/><path d="M0 0H2.2M0 0V2.2" stroke="#8a4436" stroke-width=".75"/></pattern>
<rect x="1771.2" y="792.1" width="10.8" height="86.3" fill="url(#rg)"/>
<rect x="1833.1" y="792.1" width="10.8" height="86.3" fill="url(#rg)"/>
<rect x="1888.4" y="792.1" width="10.8" height="86.3" fill="url(#rg)"/>
<rect x="1950.3" y="792.1" width="10.6" height="86.3" fill="url(#rg)"/>
<rect x="1538.6" y="923.5" width="22.5" height="22.5" fill="#fafafa"/>
<rect x="1541.9" y="925.3" width="4.5" height="18.9" fill="#3f7d2e"/>
<rect x="1553.2" y="925.3" width="4.5" height="18.9" fill="#3f7d2e"/>
<rect x="1548" y="925.3" width="3.6" height="5" fill="#3f7d2e"/>
<rect x="1548" y="939.3" width="3.6" height="5" fill="#3f7d2e"/>
<rect x="1548" y="932.1" width="3.6" height="5.4" fill="#b8d0ea"/>
<path d="M1541.3 941.6L1558.4 941.6" stroke="#ece81a" stroke-width="1.3" fill="none"/>
<rect x="1567.2" y="923.5" width="22.5" height="22.5" fill="#fafafa"/>
<rect x="1570.6" y="925.3" width="4.5" height="18.9" fill="#3f7d2e"/>
<rect x="1581.8" y="925.3" width="4.5" height="18.9" fill="#3f7d2e"/>
<rect x="1576.7" y="925.3" width="3.6" height="5" fill="#3f7d2e"/>
<rect x="1576.7" y="939.3" width="3.6" height="5" fill="#3f7d2e"/>
<rect x="1576.7" y="932.1" width="3.6" height="5.4" fill="#b8d0ea"/>
<path d="M1569.9 941.6L1587 941.6" stroke="#ece81a" stroke-width="1.3" fill="none"/>
<rect x="1538.6" y="967.5" width="22.5" height="22.5" fill="#fafafa"/>
<rect x="1541.9" y="969.3" width="4.5" height="18.9" fill="#3f7d2e"/>
<rect x="1553.2" y="969.3" width="4.5" height="18.9" fill="#3f7d2e"/>
<rect x="1548" y="969.3" width="3.6" height="5" fill="#3f7d2e"/>
<rect x="1548" y="983.3" width="3.6" height="5" fill="#3f7d2e"/>
<rect x="1548" y="976" width="3.6" height="5.4" fill="#b8d0ea"/>
<path d="M1541.3 972.4L1558.4 972.4" stroke="#ece81a" stroke-width="1.3" fill="none"/>
<rect x="1567.2" y="967.5" width="22.5" height="22.5" fill="#fafafa"/>
<rect x="1570.6" y="969.3" width="4.5" height="18.9" fill="#3f7d2e"/>
<rect x="1581.8" y="969.3" width="4.5" height="18.9" fill="#3f7d2e"/>
<rect x="1576.7" y="969.3" width="3.6" height="5" fill="#3f7d2e"/>
<rect x="1576.7" y="983.3" width="3.6" height="5" fill="#3f7d2e"/>
<rect x="1576.7" y="976" width="3.6" height="5.4" fill="#b8d0ea"/>
<path d="M1569.9 972.4L1587 972.4" stroke="#ece81a" stroke-width="1.3" fill="none"/>
<rect x="1538.6" y="924.2" width="22.5" height="22.1" fill="#fafafa"/>
<rect x="1542" y="926" width="4.5" height="18.5" fill="#3f7d2e"/>
<rect x="1553.3" y="926" width="4.5" height="18.5" fill="#3f7d2e"/>
<rect x="1548.1" y="932.8" width="3.6" height="5.4" fill="#b8d0ea"/>
<path d="M1541.3 942.2L1558.5 942.2" stroke="#ece81a" stroke-width="1.3" fill="none"/>
<rect x="1538.6" y="967.9" width="22.5" height="22.1" fill="#fafafa"/>
<rect x="1542" y="969.7" width="4.5" height="18.5" fill="#3f7d2e"/>
<rect x="1553.3" y="969.7" width="4.5" height="18.5" fill="#3f7d2e"/>
<rect x="1548.1" y="976.5" width="3.6" height="5.4" fill="#b8d0ea"/>
<path d="M1541.3 972.9L1558.5 972.9" stroke="#ece81a" stroke-width="1.3" fill="none"/>
<rect x="1501.9" y="916.8" width="13.5" height="80" fill="#4b4f5d"/>
<path d="M1501.9 935.9L1515.4 935.9" stroke="#8f929b" stroke-width="0.7" fill="none"/>
<path d="M1501.9 956.2L1515.4 956.2" stroke="#8f929b" stroke-width="0.7" fill="none"/>
<path d="M1501.9 976.5L1515.4 976.5" stroke="#8f929b" stroke-width="0.7" fill="none"/>
<path d="M1515.4 916.8L1515.4 996.8" stroke="#9a9da6" stroke-width="0.8" fill="none"/>
<path d="M1501.9 916.8L1501.9 996.8" stroke="#9a9da6" stroke-width="0.8" fill="none"/>
<rect x="1595.4" y="933.7" width="18" height="11.7" fill="#4b4f5d"/>
<rect x="1615" y="933.7" width="18.7" height="11.7" fill="#4b4f5d"/>
<path d="M1595.4 945.8L1633.7 945.8" stroke="#8f929b" stroke-width="0.7" fill="none"/>
<rect x="1596.5" y="968.6" width="18" height="11.7" fill="#4b4f5d"/>
<rect x="1616.1" y="968.6" width="18.7" height="11.7" fill="#4b4f5d"/>
<path d="M1596.5 980.8L1634.8 980.8" stroke="#8f929b" stroke-width="0.7" fill="none"/>
<rect x="1641.6" y="951.7" width="15.1" height="40.6" fill="#a3a39a"/>
<path d="M1642 991.8L1656.7 991.8" stroke="#c9a21a" stroke-width="1" fill="none"/>
<path d="M1663 916.8L1663 994.5" stroke="#e03030" stroke-width="0.9" fill="none" stroke-dasharray="1.2 1"/>
<path d="M1665.2 994.5L1712.6 994.5" stroke="#e03030" stroke-width="0.9" fill="none" stroke-dasharray="1.2 1"/>
<path d="M1772.3 994.5L1819.6 994.5" stroke="#e03030" stroke-width="0.9" fill="none" stroke-dasharray="1.2 1"/>
<path d="M1825.2 994.5L1876 994.5" stroke="#e03030" stroke-width="0.9" fill="none" stroke-dasharray="1.2 1"/>
<path d="M1908.6 965.7L1979.6 965.7" stroke="#e03030" stroke-width="0.9" fill="none" stroke-dasharray="1.2 1"/>
<rect x="1711.4" y="992.3" width="4.5" height="4.5" fill="#101014"/>
<rect x="1768.4" y="992.3" width="4.5" height="4.5" fill="#101014"/>
<rect x="1904.1" y="963.4" width="4.5" height="4.5" fill="#101014"/>
<rect x="1942" y="963.4" width="4.5" height="4.5" fill="#101014"/>
<rect x="1978.5" y="963.4" width="4.5" height="4.5" fill="#101014"/>
<rect x="1660.7" y="967.5" width="4.5" height="4.5" fill="#101014"/>
<rect x="1874.8" y="991.8" width="4.5" height="4.5" fill="#101014" transform="rotate(45 1877.1 994.1)"/>
<path d="M1665.2 994.5l-2.5 4.5h5zM1980.3 995l-2.5 4.5h5z" fill="#e31b1b"/>
<path d="M1901.9 1004.7L1915.4 991.1H1983M1905.3 1002.4H1983" fill="none" stroke="#bc9b29" stroke-width="1.1"/>
<path d="M1923.3 996.8L1972.9 996.8" stroke="#b6962a" stroke-width="1.2" fill="none" stroke-dasharray="3 2 3 10.5"/>
<path d="M1923.3 1048.2L1977.4 1048.2" stroke="#b6962a" stroke-width="1.2" fill="none" stroke-dasharray="3 2 3 10.5"/>
<rect x="2029" y="714.4" width="21.6" height="51.6" fill="#10305f"/>
<rect x="1992" y="745" width="58.6" height="21" fill="#10305f"/>
<rect x="1990" y="732.5" width="35" height="8" fill="#f6f6ec"/>
<rect x="2014.6" y="715.5" width="10.4" height="25" fill="#f6f6ec"/>
<rect x="1994.6" y="685" width="20.4" height="42.6" fill="#f2a900"/>
<rect x="2007" y="721" width="8" height="6" fill="#555" transform="rotate(-30 2011 724)"/>
<path d="M2018.5 738L2021.5 733" stroke="#333" stroke-width="1" fill="none"/>
<rect x="2001" y="780.8" width="21" height="40.7" fill="#f2a900"/>
<rect x="1991.5" y="800" width="11.5" height="20" fill="#e3b76a"/>
<rect x="2004" y="820" width="16.5" height="14" fill="#e3b76a"/>
<path d="M1996 681q3-4 6-1M1997 683h5" stroke="#5fbf3a" stroke-width="1.2" fill="none"/>
<path d="M1995 792q3-4 6-1M1996 794h5" stroke="#5fbf3a" stroke-width="1.2" fill="none"/>
<path d="M1994 826q3-4 6-1M1995 828h5" stroke="#5fbf3a" stroke-width="1.2" fill="none"/>
<path d="M1271 1046.3L1984 1046.3" stroke="#bc9b29" stroke-width="1.1" fill="none"/>
<path d="M1359.5 1047L1359.5 1170" stroke="#bdbdbd" stroke-width="1" fill="none"/>
<path d="M1409.4 1047L1409.4 1170" stroke="#bdbdbd" stroke-width="1" fill="none"/>
<path d="M1459.2 1047L1459.2 1170" stroke="#bdbdbd" stroke-width="1" fill="none"/>
<path d="M1509.1 1047L1509.1 1170" stroke="#bdbdbd" stroke-width="1" fill="none"/>
<path d="M1559 1047L1559 1170" stroke="#bdbdbd" stroke-width="1" fill="none"/>
<path d="M1608.8 1047L1608.8 1170" stroke="#bdbdbd" stroke-width="1" fill="none"/>
<path d="M1658.7 1047L1658.7 1170" stroke="#bdbdbd" stroke-width="1" fill="none"/>
<path d="M1708.6 1047L1708.6 1170" stroke="#bdbdbd" stroke-width="1" fill="none"/>
<path d="M1758.5 1047L1758.5 1170" stroke="#bdbdbd" stroke-width="1" fill="none"/>
<path d="M1808.3 1047L1808.3 1170" stroke="#bdbdbd" stroke-width="1" fill="none"/>
<path d="M1858.2 1047L1858.2 1170" stroke="#bdbdbd" stroke-width="1" fill="none"/>
<path d="M1908.1 1047L1908.1 1170" stroke="#bdbdbd" stroke-width="1" fill="none"/>
<rect x="1320.6" y="1116.5" width="28" height="10" rx="4" fill="#9cc3e3"/><rect x="1327.6" y="1115.5" width="16" height="12" rx="2" fill="#9cc3e3"/>
<rect x="1370.5" y="1116.5" width="28" height="10" rx="4" fill="#9cc3e3"/><rect x="1377.5" y="1115.5" width="16" height="12" rx="2" fill="#9cc3e3"/>
<rect x="1420.3" y="1116.5" width="28" height="10" rx="4" fill="#9cc3e3"/><rect x="1427.3" y="1115.5" width="16" height="12" rx="2" fill="#9cc3e3"/>
<rect x="1470.2" y="1116.5" width="28" height="10" rx="4" fill="#9cc3e3"/><rect x="1477.2" y="1115.5" width="16" height="12" rx="2" fill="#9cc3e3"/>
<rect x="1520.1" y="1116.5" width="28" height="10" rx="4" fill="#9cc3e3"/><rect x="1527.1" y="1115.5" width="16" height="12" rx="2" fill="#9cc3e3"/>
<rect x="1569.9" y="1116.5" width="28" height="10" rx="4" fill="#9cc3e3"/><rect x="1576.9" y="1115.5" width="16" height="12" rx="2" fill="#9cc3e3"/>
<rect x="1619.8" y="1116.5" width="28" height="10" rx="4" fill="#9cc3e3"/><rect x="1626.8" y="1115.5" width="16" height="12" rx="2" fill="#9cc3e3"/>
<rect x="1669.7" y="1114.5" width="28" height="14" rx="3" fill="#9cc3e3"/><rect x="1669.7" y="1111.5" width="8" height="20" fill="#9cc3e3"/>
<rect x="1719.6" y="1115.5" width="29" height="13" fill="#9cc3e3"/><rect x="1719.6" y="1111.5" width="6" height="21" rx="1.5" fill="#9cc3e3"/><rect x="1741.6" y="1110.5" width="7" height="23" rx="1.5" fill="#9cc3e3"/>
<rect x="1769.4" y="1115.5" width="29" height="13" fill="#9cc3e3"/><rect x="1769.4" y="1111.5" width="6" height="21" rx="1.5" fill="#9cc3e3"/><rect x="1791.4" y="1110.5" width="7" height="23" rx="1.5" fill="#9cc3e3"/>
<rect x="1819.3" y="1115.5" width="29" height="13" fill="#9cc3e3"/><rect x="1819.3" y="1111.5" width="6" height="21" rx="1.5" fill="#9cc3e3"/><rect x="1841.3" y="1110.5" width="7" height="23" rx="1.5" fill="#9cc3e3"/>
<rect x="1869.2" y="1115.5" width="29" height="13" fill="#9cc3e3"/><rect x="1869.2" y="1111.5" width="6" height="21" rx="1.5" fill="#9cc3e3"/><rect x="1891.2" y="1110.5" width="7" height="23" rx="1.5" fill="#9cc3e3"/>
<rect x="1919" y="1115.5" width="29" height="13" fill="#9cc3e3"/><rect x="1919" y="1111.5" width="6" height="21" rx="1.5" fill="#9cc3e3"/><rect x="1941" y="1110.5" width="7" height="23" rx="1.5" fill="#9cc3e3"/>
<rect x="1063" y="303" width="924" height="4.2" fill="#000"/>
<rect x="1063" y="303" width="4.2" height="871" fill="#000"/>
<rect x="1063" y="1169.8" width="924" height="4.2" fill="#000"/>
<rect x="1983" y="303" width="3.3" height="871" fill="#000"/>
<rect x="1537" y="307" width="4" height="174" fill="#000"/>
<rect x="1556" y="307" width="3.5" height="174" fill="#000"/>
<rect x="1270" y="478.8" width="271" height="3.2" fill="#000"/>
<rect x="1556" y="478.8" width="220" height="3.2" fill="#000"/>
<rect x="1773" y="481" width="3.3" height="262" fill="#000"/>
<rect x="1270" y="481" width="3.3" height="564" fill="#000"/>
<rect x="1063" y="566.8" width="210" height="3.8" fill="#000"/>
<rect x="1063" y="1013.7" width="210" height="3.5" fill="#000"/>
<rect x="1312.2" y="543" width="3.4" height="200" fill="#000"/>
<rect x="1312.2" y="760" width="3.4" height="222" fill="#000"/>
<path d="M1313.9 544.5L1332.5 526.2" stroke="#000" stroke-width="3.4" fill="none"/>
<path d="M1313.9 980.5L1332.5 998.7" stroke="#000" stroke-width="3.4" fill="none"/>
<rect x="1331" y="524.6" width="176" height="3.2" fill="#000"/>
<rect x="1503.8" y="525" width="3.2" height="188" fill="#000"/>
<rect x="1407" y="527" width="3.6" height="147.5" fill="#000"/>
<rect x="1407" y="671.4" width="26.6" height="3.6" fill="#000"/>
<rect x="1430" y="672" width="3.6" height="70.6" fill="#000"/>
<rect x="1313" y="642.8" width="95" height="3" fill="#000"/>
<rect x="1313" y="739.2" width="120.6" height="3.4" fill="#000"/>
<rect x="1433" y="740.6" width="66" height="1.6" fill="#000"/>
<rect x="1498.3" y="711" width="3.7" height="289" fill="#000"/>
<rect x="1498.3" y="711" width="112" height="3.6" fill="#000"/>
<rect x="1606.6" y="711" width="3.7" height="33" fill="#000"/>
<rect x="1606.6" y="740.4" width="257.7" height="3.6" fill="#000"/>
<rect x="1861" y="702.4" width="3.3" height="41.6" fill="#000"/>
<rect x="1861" y="702.4" width="122" height="3.6" fill="#000"/>
<rect x="1526" y="524.6" width="230.3" height="3.2" fill="#000"/>
<rect x="1526" y="525" width="2.4" height="187" fill="#000"/>
<rect x="1753.2" y="525" width="3.1" height="217" fill="#000"/>
<rect x="1313" y="760" width="189" height="3.4" fill="#000"/>
<rect x="1500" y="913" width="483" height="3.8" fill="#000"/>
<rect x="1657.2" y="913" width="3.6" height="87" fill="#000"/>
<rect x="1331" y="997" width="548" height="3.4" fill="#000"/>
<path d="M1877.5 998.7L1907 970.6" stroke="#000" stroke-width="3.4" fill="none"/>
<rect x="1905.5" y="969" width="77.5" height="3.2" fill="#000"/>
<path d="M1271 479.7L1539 479.7" stroke="#c8a52a" stroke-width="0.9" fill="none"/>
<path d="M1558 479.7L1774 479.7" stroke="#c8a52a" stroke-width="0.9" fill="none"/>
<path d="M1313.2 981V760M1313.2 743V544.5L1332.3 525.6H1505" fill="none" stroke="#c8a52a" stroke-width="0.9"/>
<path d="M1313.2 981L1331.5 998H1878.5L1907 970H1983" fill="none" stroke="#c8a52a" stroke-width="0.9"/>
<path d="M1526.6 527L1526.6 712" stroke="#c8a52a" stroke-width="0.9" fill="none"/>
<path d="M1754 527L1754 741" stroke="#c8a52a" stroke-width="0.9" fill="none"/>
<path d="M1541.6 307L1541.6 479" stroke="#c8a52a" stroke-width="0.8" fill="none"/>
<path d="M1316 760.6L1499 760.6" stroke="#c8a52a" stroke-width="0.8" fill="none"/>
<path d="M1500 914L1983 914" stroke="#c8a52a" stroke-width="0.0" fill="none"/>
<path d="M798.8 97.7V1287M813 97.7V1287M827.2 97.7V1287M841.5 97.7V1287M855.7 97.7V1287M869.9 97.7V1287M884.1 97.7V1287M898.3 97.7V1287M912.5 97.7V1287M926.8 97.7V1287M941 97.7V1287M955.2 97.7V1287M969.4 97.7V1287M983.6 97.7V1287M997.9 97.7V1287M1012.1 97.7V1287M1026.3 97.7V1287M1040.5 97.7V1287M1054.7 97.7V1287M1068.9 97.7V1287M1083.2 97.7V1287M1097.4 97.7V1287M1111.6 97.7V1287M1125.8 97.7V1287M1140 97.7V1287M1154.2 97.7V1287M1168.5 97.7V1287M1182.7 97.7V1287M1196.9 97.7V1287M1211.1 97.7V1287M1225.3 97.7V1287M1239.6 97.7V1287M1253.8 97.7V1287M1268 97.7V1287M1282.2 97.7V1287M1296.4 97.7V1287M1310.6 97.7V1287M1324.9 97.7V1287M1339.1 97.7V1287M1353.3 97.7V1287M1367.5 97.7V1287M1381.7 97.7V1287M1396 97.7V1287M1410.2 97.7V1287M1424.4 97.7V1287M1438.6 97.7V1287M1452.8 97.7V1287M1467 97.7V1287M1481.3 97.7V1287M1495.5 97.7V1287M1509.7 97.7V1287M1523.9 97.7V1287M1538.1 97.7V1287M1552.4 97.7V1287M1566.6 97.7V1287M1580.8 97.7V1287M1595 97.7V1287M1609.2 97.7V1287M1623.4 97.7V1287M1637.7 97.7V1287M1651.9 97.7V1287M1666.1 97.7V1287M1680.3 97.7V1287M1694.5 97.7V1287M1708.8 97.7V1287M1723 97.7V1287M1737.2 97.7V1287M1751.4 97.7V1287M1765.6 97.7V1287M1779.8 97.7V1287M1794.1 97.7V1287M1808.3 97.7V1287M1822.5 97.7V1287M1836.7 97.7V1287M1850.9 97.7V1287M1865.1 97.7V1287M1879.4 97.7V1287M1893.6 97.7V1287M1907.8 97.7V1287M1922 97.7V1287M1936.2 97.7V1287M1950.5 97.7V1287M1964.7 97.7V1287M1978.9 97.7V1287M1993.1 97.7V1287M2007.3 97.7V1287M2021.5 97.7V1287M2035.8 97.7V1287M2050 97.7V1287M2064.2 97.7V1287M2078.4 97.7V1287M2092.6 97.7V1287M2106.9 97.7V1287M2121.1 97.7V1287M2135.3 97.7V1287M2149.5 97.7V1287M2163.7 97.7V1287M2177.9 97.7V1287M2192.2 97.7V1287M2206.4 97.7V1287M2220.6 97.7V1287M798.8 97.7H2220.8M798.8 111.9H2220.8M798.8 126.1H2220.8M798.8 140.4H2220.8M798.8 154.6H2220.8M798.8 168.8H2220.8M798.8 183H2220.8M798.8 197.2H2220.8M798.8 211.4H2220.8M798.8 225.7H2220.8M798.8 239.9H2220.8M798.8 254.1H2220.8M798.8 268.3H2220.8M798.8 282.5H2220.8M798.8 296.8H2220.8M798.8 311H2220.8M798.8 325.2H2220.8M798.8 339.4H2220.8M798.8 353.6H2220.8M798.8 367.8H2220.8M798.8 382.1H2220.8M798.8 396.3H2220.8M798.8 410.5H2220.8M798.8 424.7H2220.8M798.8 438.9H2220.8M798.8 453.1H2220.8M798.8 467.4H2220.8M798.8 481.6H2220.8M798.8 495.8H2220.8M798.8 510H2220.8M798.8 524.2H2220.8M798.8 538.5H2220.8M798.8 552.7H2220.8M798.8 566.9H2220.8M798.8 581.1H2220.8M798.8 595.3H2220.8M798.8 609.5H2220.8M798.8 623.8H2220.8M798.8 638H2220.8M798.8 652.2H2220.8M798.8 666.4H2220.8M798.8 680.6H2220.8M798.8 694.9H2220.8M798.8 709.1H2220.8M798.8 723.3H2220.8M798.8 737.5H2220.8M798.8 751.7H2220.8M798.8 765.9H2220.8M798.8 780.2H2220.8M798.8 794.4H2220.8M798.8 808.6H2220.8M798.8 822.8H2220.8M798.8 837H2220.8M798.8 851.3H2220.8M798.8 865.5H2220.8M798.8 879.7H2220.8M798.8 893.9H2220.8M798.8 908.1H2220.8M798.8 922.3H2220.8M798.8 936.6H2220.8M798.8 950.8H2220.8M798.8 965H2220.8M798.8 979.2H2220.8M798.8 993.4H2220.8M798.8 1007.7H2220.8M798.8 1021.9H2220.8M798.8 1036.1H2220.8M798.8 1050.3H2220.8M798.8 1064.5H2220.8M798.8 1078.7H2220.8M798.8 1093H2220.8M798.8 1107.2H2220.8M798.8 1121.4H2220.8M798.8 1135.6H2220.8M798.8 1149.8H2220.8M798.8 1164.1H2220.8M798.8 1178.3H2220.8M798.8 1192.5H2220.8M798.8 1206.7H2220.8M798.8 1220.9H2220.8M798.8 1235.1H2220.8M798.8 1249.4H2220.8M798.8 1263.6H2220.8M798.8 1277.8H2220.8" stroke="#000" stroke-opacity=".026" stroke-width="2" fill="none"/>
<path d="M805.9 97.7V1287M820.1 97.7V1287M834.3 97.7V1287M848.6 97.7V1287M862.8 97.7V1287M877 97.7V1287M891.2 97.7V1287M905.4 97.7V1287M919.7 97.7V1287M933.9 97.7V1287M948.1 97.7V1287M962.3 97.7V1287M976.5 97.7V1287M990.7 97.7V1287M1005 97.7V1287M1019.2 97.7V1287M1033.4 97.7V1287M1047.6 97.7V1287M1061.8 97.7V1287M1076.1 97.7V1287M1090.3 97.7V1287M1104.5 97.7V1287M1118.7 97.7V1287M1132.9 97.7V1287M1147.1 97.7V1287M1161.4 97.7V1287M1175.6 97.7V1287M1189.8 97.7V1287M1204 97.7V1287M1218.2 97.7V1287M1232.4 97.7V1287M1246.7 97.7V1287M1260.9 97.7V1287M1275.1 97.7V1287M1289.3 97.7V1287M1303.5 97.7V1287M1317.8 97.7V1287M1332 97.7V1287M1346.2 97.7V1287M1360.4 97.7V1287M1374.6 97.7V1287M1388.8 97.7V1287M1403.1 97.7V1287M1417.3 97.7V1287M1431.5 97.7V1287M1445.7 97.7V1287M1459.9 97.7V1287M1474.2 97.7V1287M1488.4 97.7V1287M1502.6 97.7V1287M1516.8 97.7V1287M1531 97.7V1287M1545.2 97.7V1287M1559.5 97.7V1287M1573.7 97.7V1287M1587.9 97.7V1287M1602.1 97.7V1287M1616.3 97.7V1287M1630.6 97.7V1287M1644.8 97.7V1287M1659 97.7V1287M1673.2 97.7V1287M1687.4 97.7V1287M1701.6 97.7V1287M1715.9 97.7V1287M1730.1 97.7V1287M1744.3 97.7V1287M1758.5 97.7V1287M1772.7 97.7V1287M1787 97.7V1287M1801.2 97.7V1287M1815.4 97.7V1287M1829.6 97.7V1287M1843.8 97.7V1287M1858 97.7V1287M1872.3 97.7V1287M1886.5 97.7V1287M1900.7 97.7V1287M1914.9 97.7V1287M1929.1 97.7V1287M1943.3 97.7V1287M1957.6 97.7V1287M1971.8 97.7V1287M1986 97.7V1287M2000.2 97.7V1287M2014.4 97.7V1287M2028.7 97.7V1287M2042.9 97.7V1287M2057.1 97.7V1287M2071.3 97.7V1287M2085.5 97.7V1287M2099.7 97.7V1287M2114 97.7V1287M2128.2 97.7V1287M2142.4 97.7V1287M2156.6 97.7V1287M2170.8 97.7V1287M2185.1 97.7V1287M2199.3 97.7V1287M2213.5 97.7V1287M798.8 104.8H2220.8M798.8 119H2220.8M798.8 133.2H2220.8M798.8 147.5H2220.8M798.8 161.7H2220.8M798.8 175.9H2220.8M798.8 190.1H2220.8M798.8 204.3H2220.8M798.8 218.6H2220.8M798.8 232.8H2220.8M798.8 247H2220.8M798.8 261.2H2220.8M798.8 275.4H2220.8M798.8 289.6H2220.8M798.8 303.9H2220.8M798.8 318.1H2220.8M798.8 332.3H2220.8M798.8 346.5H2220.8M798.8 360.7H2220.8M798.8 375H2220.8M798.8 389.2H2220.8M798.8 403.4H2220.8M798.8 417.6H2220.8M798.8 431.8H2220.8M798.8 446H2220.8M798.8 460.3H2220.8M798.8 474.5H2220.8M798.8 488.7H2220.8M798.8 502.9H2220.8M798.8 517.1H2220.8M798.8 531.3H2220.8M798.8 545.6H2220.8M798.8 559.8H2220.8M798.8 574H2220.8M798.8 588.2H2220.8M798.8 602.4H2220.8M798.8 616.7H2220.8M798.8 630.9H2220.8M798.8 645.1H2220.8M798.8 659.3H2220.8M798.8 673.5H2220.8M798.8 687.7H2220.8M798.8 702H2220.8M798.8 716.2H2220.8M798.8 730.4H2220.8M798.8 744.6H2220.8M798.8 758.8H2220.8M798.8 773.1H2220.8M798.8 787.3H2220.8M798.8 801.5H2220.8M798.8 815.7H2220.8M798.8 829.9H2220.8M798.8 844.1H2220.8M798.8 858.4H2220.8M798.8 872.6H2220.8M798.8 886.8H2220.8M798.8 901H2220.8M798.8 915.2H2220.8M798.8 929.5H2220.8M798.8 943.7H2220.8M798.8 957.9H2220.8M798.8 972.1H2220.8M798.8 986.3H2220.8M798.8 1000.5H2220.8M798.8 1014.8H2220.8M798.8 1029H2220.8M798.8 1043.2H2220.8M798.8 1057.4H2220.8M798.8 1071.6H2220.8M798.8 1085.9H2220.8M798.8 1100.1H2220.8M798.8 1114.3H2220.8M798.8 1128.5H2220.8M798.8 1142.7H2220.8M798.8 1156.9H2220.8M798.8 1171.2H2220.8M798.8 1185.4H2220.8M798.8 1199.6H2220.8M798.8 1213.8H2220.8M798.8 1228H2220.8M798.8 1242.2H2220.8M798.8 1256.5H2220.8M798.8 1270.7H2220.8M798.8 1284.9H2220.8" stroke="#000" stroke-opacity=".008" stroke-width="1.5" fill="none"/>
<circle cx="1797" cy="192.400" r="15.600" fill="#00e85c"/>
<rect x="1765.5" y="161.5" width="31.5" height="31.5" fill="#2800ff"/>
<path d="M1781.4 193A15.6 15.6 0 0 1 1797 176.8V193Z" fill="#0b0d9a"/>
<polygon points="1747.5,161 1756.4,145.5 1774.2,145.5 1783.1,161 1774.2,176.5 1756.4,176.5" fill="#fe0000"/>
<path d="M1765.5 161.5H1782.8L1774.2 176.5H1765.500Z" fill="#de0012"/>
<text x="1836" y="207.400" font-family="Liberation Sans,sans-serif" font-weight="bold" font-size="80" fill="#00000a" textLength="328" lengthAdjust="spacingAndGlyphs">halocline</text>
<path d="M1283 1043.5H1984V1171H1297V1091.5H1283Z" fill="none" stroke="#1b4dff" stroke-width="2"/>
<path d="M1626.5 1006.5A10.3 10.3 0 1 1 1623.8 1013" fill="none" stroke="#1f49c8" stroke-width="1.1"/><path d="M1621.5 1003.5v5.5h5.5" fill="none" stroke="#1f49c8" stroke-width="1.1"/>
<rect x="1590.4" y="1029" width="86.6" height="28.6" fill="#1b4dff"/>
<text x="1633.7" y="1050.1" text-anchor="middle" font-family="Liberation Sans,sans-serif" font-size="19" letter-spacing=".7" fill="#fff" stroke="#fff" stroke-width=".35">49,30 m</text>
<rect x="1946.6" y="1093.2" width="75.1" height="28.8" fill="#1b4dff"/>
<text x="1984.2" y="1114.4" text-anchor="middle" font-family="Liberation Sans,sans-serif" font-size="19" letter-spacing=".7" fill="#fff" stroke="#fff" stroke-width=".35">9,00 m</text>
<rect x="1597.3" y="1157.2" width="86.7" height="28.3" fill="#1b4dff"/>
<text x="1640.7" y="1178.1" text-anchor="middle" font-family="Liberation Sans,sans-serif" font-size="19" letter-spacing=".7" fill="#fff" stroke="#fff" stroke-width=".35">48,30 m</text>
<rect x="1245.8" y="1053.5" width="75.2" height="27.9" fill="#1b4dff"/>
<text x="1283.4" y="1074.2" text-anchor="middle" font-family="Liberation Sans,sans-serif" font-size="19" letter-spacing=".7" fill="#fff" stroke="#fff" stroke-width=".35">3,40 m</text>
<rect x="1253" y="1077.6" width="74.7" height="27.7" fill="#1b4dff"/>
<text x="1290.3" y="1098.2" text-anchor="middle" font-family="Liberation Sans,sans-serif" font-size="19" letter-spacing=".7" fill="#fff" stroke="#fff" stroke-width=".35">1,00 m</text>
<rect x="1260" y="1117" width="75" height="29" fill="#1b4dff"/>
<text x="1297.5" y="1138.3" text-anchor="middle" font-family="Liberation Sans,sans-serif" font-size="19" letter-spacing=".7" fill="#fff" stroke="#fff" stroke-width=".35">5,60 m</text>
<circle cx="1283" cy="1043.5" r="4.600" fill="#fff" stroke="#1b4dff" stroke-width="1.3"/>
<circle cx="1984" cy="1043.5" r="4.600" fill="#fff" stroke="#1b4dff" stroke-width="1.3"/>
<circle cx="1984" cy="1171" r="4.600" fill="#fff" stroke="#1b4dff" stroke-width="1.3"/>
<circle cx="1297" cy="1171" r="4.600" fill="#fff" stroke="#1b4dff" stroke-width="1.3"/>
<circle cx="1297" cy="1091.5" r="4.600" fill="#fff" stroke="#1b4dff" stroke-width="1.3"/>
<circle cx="1283" cy="1091.5" r="4.600" fill="#fff" stroke="#1b4dff" stroke-width="1.3"/>
<path d="M1343.3 1098.500C1339 1093 1337.300 1090.500 1337.300 1088A6 6 0 0 1 1349.300 1088C1349.300 1090.500 1347.600 1093 1343.300 1098.500Z" fill="none" stroke="#fff" stroke-width="2.1"/><circle cx="1343.300" cy="1088" r="2.300" fill="none" stroke="#fff" stroke-width="1.700"/>
<path d="M1634.2 1088l5.5 7.500h-4v10h10v-4l7.500 5.500-7.500 5.500v-4h-10v10h4l-5.500 7.500-5.500-7.500h4v-10h-10v4l-7.500-5.500 7.500-5.500v4h10v-10h-4z" fill="#fff" stroke="#2b4bb5" stroke-width=".6"/>
</svg>
<div class="abs" style="left:0;top:0;width:580px;height:1287px;background:#fff"></div>
<div class="abs" style="left:0;top:497px;width:580px;height:561px;background:#f9faff"></div>
<div class="abs" style="left:0;top:560px;width:580px;height:63px;background:#eff1ff"></div>
<div class="abs" style="left:0;top:233px;width:580px;height:4px;background:linear-gradient(#fff,#f6f7fb 50%,#fff)"></div>
<div class="abs" style="left:0;top:303px;width:580px;height:8px;background:linear-gradient(#fff,#eceef6 45%,#fff)"></div>
<div class="abs" style="left:0;top:370px;width:580px;height:1px;background:#edf0fb"></div>
<div class="abs" style="left:0;top:433px;width:580px;height:1px;background:#edf0fb"></div>
<div class="abs" style="left:0;top:1123px;width:580px;height:1px;background:#edf0fb"></div>
<div class="abs" style="left:0;top:1186px;width:580px;height:1px;background:#edf0fb"></div>
<div class="abs" style="left:0;top:1250px;width:580px;height:1px;background:#edf0fb"></div>
<div class="abs" style="left:0;top:495px;width:580px;height:9px;background:linear-gradient(#e3e6f3,#f9faff)"></div>
<div class="abs" style="left:0;top:1052px;width:580px;height:7px;background:linear-gradient(#f9faff,#dfe2ee)"></div>
<div class="abs t" style="left:30px;top:110px;font-size:32px;line-height:40px;color:#444;letter-spacing:0.668px" id="h1">Shopfloor</div>
<svg class="abs" style="left:519px;top:115px" width="32" height="32" viewBox="0 0 32 32"><circle cx="16" cy="16" r="14.2" fill="none" stroke="#8ea5ff" stroke-width="1.7"/><path d="M16 9.5v13M9.5 16h13" stroke="#8ea5ff" stroke-width="1.7" fill="none"/></svg>
<div class="abs" style="left:31px;top:169px;width:480px;height:40px;border:1px solid #c6cdef;border-radius:4px;background:#fff"></div>
<div class="abs t" style="left:62px;top:179px;font-size:21px;line-height:26px;color:#2f2f2f" id="dd">HaloPlant DE</div>
<svg class="abs" style="left:483px;top:187px" width="16" height="10" viewBox="0 0 16 10"><path d="M1 2h13l-6.5 6.5z" fill="#666"/></svg>
<svg class="abs" style="left:531px;top:178px" width="8" height="24" viewBox="0 0 8 24"><circle cx="4" cy="4" r="2.3" fill="#8ea5ff"/><circle cx="4" cy="12" r="2.3" fill="#8ea5ff"/><circle cx="4" cy="20" r="2.3" fill="#8ea5ff"/></svg>
<div class="abs t" style="left:30px;top:254px;font-size:25px;line-height:34px;color:#444;letter-spacing:0.325px" id="h2">Arbeitsbereiche</div>
<svg class="abs" style="left:519px;top:255px" width="32" height="32" viewBox="0 0 32 32"><circle cx="16" cy="16" r="14.2" fill="none" stroke="#8ea5ff" stroke-width="1.7"/><path d="M16 9.5v13M9.5 16h13" stroke="#8ea5ff" stroke-width="1.7" fill="none"/></svg>
<div class="abs t li" style="left:30px;top:324px;color:#4a4a4a;letter-spacing:0.58px" id="li0">Büro- und Aufenthaltsräume</div>
<svg class="abs" style="left:531px;top:327px" width="8" height="24" viewBox="0 0 8 24"><circle cx="4" cy="4" r="2.3" fill="#8ea5ff"/><circle cx="4" cy="12" r="2.3" fill="#8ea5ff"/><circle cx="4" cy="20" r="2.3" fill="#8ea5ff"/></svg>
<div class="abs t li" style="left:30px;top:387px;color:#4a4a4a;letter-spacing:0.237px" id="li1">CNC Bearbeitung</div>
<svg class="abs" style="left:531px;top:390px" width="8" height="24" viewBox="0 0 8 24"><circle cx="4" cy="4" r="2.3" fill="#8ea5ff"/><circle cx="4" cy="12" r="2.3" fill="#8ea5ff"/><circle cx="4" cy="20" r="2.3" fill="#8ea5ff"/></svg>
<div class="abs t li" style="left:30px;top:451px;font-weight:bold;color:#333;letter-spacing:0.146px" id="li2">Endmontage eATV</div>
<svg class="abs" style="left:531px;top:454px" width="8" height="24" viewBox="0 0 8 24"><circle cx="4" cy="4" r="2.3" fill="#8ea5ff"/><circle cx="4" cy="12" r="2.3" fill="#8ea5ff"/><circle cx="4" cy="20" r="2.3" fill="#8ea5ff"/></svg>
<div class="abs t li" style="left:30px;top:514px;color:#aaa;letter-spacing:0.397px" id="li3">Varianten</div>
<svg class="abs" style="left:519px;top:513px" width="32" height="32" viewBox="0 0 32 32"><circle cx="16" cy="16" r="14.2" fill="none" stroke="#8ea5ff" stroke-width="1.7"/><path d="M16 9.5v13M9.5 16h13" stroke="#8ea5ff" stroke-width="1.7" fill="none"/></svg>
<div class="abs t li" style="left:57px;top:577px;font-weight:bold;color:#333;letter-spacing:-0.102px" id="li4">Konzept v1</div>
<svg class="abs" style="left:531px;top:580px" width="8" height="24" viewBox="0 0 8 24"><circle cx="4" cy="4" r="2.3" fill="#8ea5ff"/><circle cx="4" cy="12" r="2.3" fill="#8ea5ff"/><circle cx="4" cy="20" r="2.3" fill="#8ea5ff"/></svg>
<div class="abs t li" style="left:57px;top:639px;color:#444;letter-spacing:0.172px" id="li5">Konzept v2</div>
<svg class="abs" style="left:531px;top:642px" width="8" height="24" viewBox="0 0 8 24"><circle cx="4" cy="4" r="2.3" fill="#8ea5ff"/><circle cx="4" cy="12" r="2.3" fill="#8ea5ff"/><circle cx="4" cy="20" r="2.3" fill="#8ea5ff"/></svg>
<div class="abs t li" style="left:57px;top:702px;color:#444;letter-spacing:0.172px" id="li6">Konzept v3</div>
<svg class="abs" style="left:531px;top:705px" width="8" height="24" viewBox="0 0 8 24"><circle cx="4" cy="4" r="2.3" fill="#8ea5ff"/><circle cx="4" cy="12" r="2.3" fill="#8ea5ff"/><circle cx="4" cy="20" r="2.3" fill="#8ea5ff"/></svg>
<div class="abs t li" style="left:57px;top:764px;color:#444;letter-spacing:0.172px" id="li7">Konzept v4</div>
<svg class="abs" style="left:531px;top:767px" width="8" height="24" viewBox="0 0 8 24"><circle cx="4" cy="4" r="2.3" fill="#8ea5ff"/><circle cx="4" cy="12" r="2.3" fill="#8ea5ff"/><circle cx="4" cy="20" r="2.3" fill="#8ea5ff"/></svg>
<div class="abs t li" style="left:57px;top:827px;color:#444;letter-spacing:0.172px" id="li8">Konzept v5</div>
<svg class="abs" style="left:531px;top:830px" width="8" height="24" viewBox="0 0 8 24"><circle cx="4" cy="4" r="2.3" fill="#8ea5ff"/><circle cx="4" cy="12" r="2.3" fill="#8ea5ff"/><circle cx="4" cy="20" r="2.3" fill="#8ea5ff"/></svg>
<div class="abs t li" style="left:57px;top:889px;color:#444;letter-spacing:0.172px" id="li9">Konzept v6</div>
<svg class="abs" style="left:531px;top:892px" width="8" height="24" viewBox="0 0 8 24"><circle cx="4" cy="4" r="2.3" fill="#8ea5ff"/><circle cx="4" cy="12" r="2.3" fill="#8ea5ff"/><circle cx="4" cy="20" r="2.3" fill="#8ea5ff"/></svg>
<div class="abs t li" style="left:57px;top:952px;color:#444;letter-spacing:0.172px" id="li10">Konzept v7</div>
<svg class="abs" style="left:531px;top:955px" width="8" height="24" viewBox="0 0 8 24"><circle cx="4" cy="4" r="2.3" fill="#8ea5ff"/><circle cx="4" cy="12" r="2.3" fill="#8ea5ff"/><circle cx="4" cy="20" r="2.3" fill="#8ea5ff"/></svg>
<div class="abs t li" style="left:57px;top:1014px;color:#444;letter-spacing:0.443px" id="li11">Konzept v7 - Behälter gefärbt</div>
<svg class="abs" style="left:531px;top:1017px" width="8" height="24" viewBox="0 0 8 24"><circle cx="4" cy="4" r="2.3" fill="#8ea5ff"/><circle cx="4" cy="12" r="2.3" fill="#8ea5ff"/><circle cx="4" cy="20" r="2.3" fill="#8ea5ff"/></svg>
<div class="abs t li" style="left:30px;top:1077px;color:#4a4a4a;letter-spacing:-0.092px" id="li12">Foyer</div>
<svg class="abs" style="left:531px;top:1080px" width="8" height="24" viewBox="0 0 8 24"><circle cx="4" cy="4" r="2.3" fill="#8ea5ff"/><circle cx="4" cy="12" r="2.3" fill="#8ea5ff"/><circle cx="4" cy="20" r="2.3" fill="#8ea5ff"/></svg>
<div class="abs t li" style="left:30px;top:1140px;color:#4a4a4a;letter-spacing:0.489px" id="li13">Instandhaltung</div>
<svg class="abs" style="left:531px;top:1143px" width="8" height="24" viewBox="0 0 8 24"><circle cx="4" cy="4" r="2.3" fill="#8ea5ff"/><circle cx="4" cy="12" r="2.3" fill="#8ea5ff"/><circle cx="4" cy="20" r="2.3" fill="#8ea5ff"/></svg>
<div class="abs t li" style="left:30px;top:1204px;color:#4a4a4a;letter-spacing:0.46px" id="li14">Kleinteilelager</div>
<svg class="abs" style="left:531px;top:1207px" width="8" height="24" viewBox="0 0 8 24"><circle cx="4" cy="4" r="2.3" fill="#8ea5ff"/><circle cx="4" cy="12" r="2.3" fill="#8ea5ff"/><circle cx="4" cy="20" r="2.3" fill="#8ea5ff"/></svg>
<div class="abs t li" style="left:30px;top:1266px;color:#4a4a4a;letter-spacing:0.165px" id="li15">Lager</div>
<svg class="abs" style="left:531px;top:1269px" width="8" height="24" viewBox="0 0 8 24"><circle cx="4" cy="4" r="2.3" fill="#8ea5ff"/><circle cx="4" cy="12" r="2.3" fill="#8ea5ff"/><circle cx="4" cy="20" r="2.3" fill="#8ea5ff"/></svg>
<div class="abs" style="left:580px;top:86px;width:10px;height:1201px;background:#fff"></div>
<div class="abs" style="left:580px;top:86px;width:10px;height:831px;background:#bab9bf"></div>
<div class="abs" style="left:0;top:0;width:2547px;height:86px;background:#fff"></div>
<div class="abs" style="left:0;top:0;width:2547px;height:5px;background:linear-gradient(#ebecee,#fff)"></div>
<div class="abs" style="left:193px;top:0;width:161px;height:2px;background:#1b4dff"></div>
<div class="abs" style="left:590px;top:0;width:4px;height:86px;background:linear-gradient(90deg,#f6f7f7,#fff)"></div>
<div class="abs btn" style="left:30px;top:24.500px;width:165px;height:39px;border:2px solid #a6b7ff;background:#fff;color:#333;font-size:18px;letter-spacing:-0.077px"><span class="abs" style="left:50.5px;top:0;line-height:36px;white-space:nowrap">Importieren</span><svg class="abs" style="left:15.500px;top:8px" width="24" height="22" viewBox="0 0 24 22"><path d="M12 1.5v12M6.5 8.5l5.5 5.5 5.500-5.500M1.500 14v6h21v-6" fill="none" stroke="#8ea5ff" stroke-width="1.5"/></svg></div>
<div class="abs btn" style="left:246px;top:24.500px;width:169.5px;height:39px;border:2px solid #a6b7ff;background:#fff;color:#333;font-size:18px;letter-spacing:-0.071px"><span class="abs" style="left:20.5px;top:0;line-height:36px;white-space:nowrap">Desktop starten</span></div>
<div class="abs btn" style="left:431px;top:24.500px;width:134px;height:39px;border:2px solid #1b4dff;background:#eef1ff;color:#1b4dff;font-weight:bold;font-size:18px;letter-spacing:-0.033px"><span class="abs" style="left:20px;top:0;line-height:36px;white-space:nowrap">VR starten</span></div>
<div class="abs btn" style="left:2153px;top:24.500px;width:170.5px;height:39px;border:2px solid #a6b7ff;background:#fff;color:#333;font-size:19.5px;letter-spacing:0.241px"><span class="abs" style="left:50.5px;top:0;line-height:36px;white-space:nowrap">Abbrechen</span><svg class="abs" style="left:19px;top:10px" width="16" height="16" viewBox="0 0 16 16"><path d="M1.500 1.500l13 13M14.500 1.500l-13 13" stroke="#8ea5ff" stroke-width="1.5" fill="none"/></svg></div>
<div class="abs btn" style="left:2336px;top:24.500px;width:161.5px;height:39px;border:2px solid #1b4dff;background:#eef1ff;color:#1b4dff;font-weight:bold;font-size:18px;letter-spacing:-0.059px"><span class="abs" style="left:51px;top:0;line-height:36px;white-space:nowrap">Speichern</span><svg class="abs" style="left:15px;top:7px" width="22" height="21" viewBox="0 0 22 21"><path d="M1 2.500q0-1.500 1.500-1.500h14l4.500 4.500v13q0 1.500-1.500 1.500h-17q-1.500 0-1.500-1.500zM6 1v6.500h9V1M10.500 1v4h3M4.500 20v-7.500h13V20" fill="none" stroke="#8ea5ff" stroke-width="1.2"/></svg></div>
<div class="abs t" style="left:614px;top:30px;font-size:20px;line-height:26px;color:#a8a8a8">X:</div>
<div class="abs inp" style="left:639px;top:24px;background:#fafafa;border:1px solid #f0f0f0;color:#d2d2d2">1</div>
<div class="abs t" style="left:745px;top:30px;font-size:20px;line-height:26px;color:#444">m</div>
<div class="abs t" style="left:786px;top:30px;font-size:20px;line-height:26px;color:#a8a8a8">Y:</div>
<div class="abs inp" style="left:809px;top:24px;background:#fafafa;border:1px solid #f0f0f0;color:#d2d2d2">3,4</div>
<div class="abs t" style="left:915px;top:30px;font-size:20px;line-height:26px;color:#444">m</div>
<div class="abs t" style="left:957px;top:30px;font-size:20px;line-height:26px;color:#a8a8a8;letter-spacing:.2px" id="rot">Rotation:</div>
<div class="abs inp" style="left:1044px;top:24px;background:#fff;border:1px solid #c6cdef;color:#222">0</div>
<div class="abs t" style="left:1150px;top:30px;font-size:20px;line-height:26px;color:#444">°</div>
<div class="abs" style="left:0;top:1285.500px;width:2547px;height:1.500px;background:#3a3a3a"></div>
<svg class="abs" style="left:620px;top:1230px" width="170" height="40" viewBox="620 1230 170 40"><path d="M630.600 1241.300V1261.700H773.400V1241.300" fill="none" stroke="#4a72d9" stroke-width="1.6"/><text x="702" y="1257" text-anchor="middle" font-family="Liberation Sans,sans-serif" font-size="20" fill="#4a72d9">10m</text></svg>
<div class="abs" style="left:2490px;top:1230.500px;width:50px;height:50px;box-sizing:border-box;border:1.5px solid #8ea5ff;border-radius:3px;background:#eff2ff"></div>
<svg class="abs" style="left:2490px;top:1230px" width="50" height="51" viewBox="0 0 50 51"><rect x="11" y="15.500" width="22.500" height="20" rx="1.5" fill="#f7f8ff" stroke="#8ea5ff" stroke-width="1.7"/><path d="M33.500 22L42.500 17V35L33.500 30" fill="none" stroke="#8ea5ff" stroke-width="1.6"/><path d="M28 25.500L33 23V28z" fill="none" stroke="#8ea5ff" stroke-opacity=".5" stroke-width="1"/><path d="M21 11.500l3.500-3.500 3.500 3.500M21 39.800l3.500 3.500 3.500-3.500" fill="none" stroke="#8ea5ff" stroke-width="1.800"/></svg>
</body></html>
